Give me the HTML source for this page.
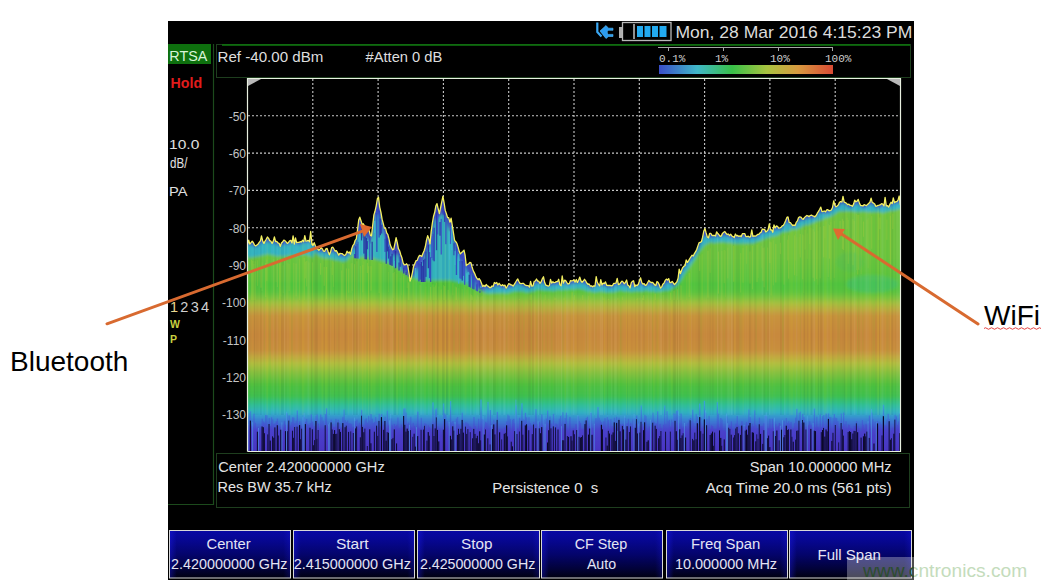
<!DOCTYPE html>
<html><head><meta charset="utf-8"><style>
html,body{margin:0;padding:0;background:#fff;width:1047px;height:587px;overflow:hidden;font-family:"Liberation Sans",sans-serif}
</style></head><body>

<svg width="1047" height="587" viewBox="0 0 1047 587" style="position:absolute;left:0;top:0">
<defs>
 <linearGradient id="ng" x1="0" y1="282" x2="0" y2="451" gradientUnits="userSpaceOnUse"><stop offset="0.0000" stop-color="#50c440"/><stop offset="0.0533" stop-color="#58c440"/><stop offset="0.0888" stop-color="#78c440"/><stop offset="0.1243" stop-color="#a4c040"/><stop offset="0.1598" stop-color="#bcac40"/><stop offset="0.2012" stop-color="#c8923e"/><stop offset="0.3136" stop-color="#c8883c"/><stop offset="0.4024" stop-color="#c88e3e"/><stop offset="0.4438" stop-color="#c2a840"/><stop offset="0.4852" stop-color="#b0c040"/><stop offset="0.5444" stop-color="#80c040"/><stop offset="0.6095" stop-color="#50c040"/><stop offset="0.6746" stop-color="#40c050"/><stop offset="0.7219" stop-color="#30c090"/><stop offset="0.7692" stop-color="#30b4c4"/><stop offset="0.8166" stop-color="#3a80d4"/><stop offset="0.8876" stop-color="#4444c8"/><stop offset="1.0000" stop-color="#4038b8"/></linearGradient>
 <linearGradient id="gg" x1="0" y1="195" x2="0" y2="300" gradientUnits="userSpaceOnUse"><stop offset="0" stop-color="#74c440"/><stop offset="0.6" stop-color="#6cc440"/><stop offset="0.85" stop-color="#58c440"/><stop offset="1" stop-color="#50c440"/></linearGradient>
 <linearGradient id="btnh" x1="0" y1="0" x2="1" y2="0"><stop offset="0" stop-color="#2020ff" stop-opacity="0.35"/><stop offset="0.06" stop-color="#2020ff" stop-opacity="0"/><stop offset="0.94" stop-color="#2020ff" stop-opacity="0"/><stop offset="1" stop-color="#2020ff" stop-opacity="0.2"/></linearGradient>
 <linearGradient id="bz" x1="0" y1="405" x2="0" y2="451" gradientUnits="userSpaceOnUse"><stop offset="0" stop-color="#38a0d8"/><stop offset="0.3" stop-color="#3c6cd4"/><stop offset="0.55" stop-color="#4a40cc"/><stop offset="1" stop-color="#4a34c4"/></linearGradient>
 <linearGradient id="cbar" x1="0" x2="1" y1="0" y2="0">
  <stop offset="0" stop-color="#3a4ec8"/><stop offset="0.22" stop-color="#40b8c8"/><stop offset="0.42" stop-color="#38c048"/>
  <stop offset="0.62" stop-color="#a8c440"/><stop offset="0.8" stop-color="#d89a40"/><stop offset="1" stop-color="#d84a34"/>
 </linearGradient>
 <linearGradient id="btn" x1="0" y1="0" x2="0" y2="1">
  <stop offset="0" stop-color="#0808a4"/><stop offset="0.2" stop-color="#070792"/><stop offset="0.5" stop-color="#04046c"/><stop offset="0.8" stop-color="#02023a"/><stop offset="1" stop-color="#000010"/>
 </linearGradient>
 <clipPath id="gclip"><polygon points="240,256.8 247.5,256.8 248.7,257.2 249.8,257.4 251.0,257.5 252.2,257.4 253.3,257.2 254.5,256.6 255.7,256.4 256.9,256.6 258.0,256.4 259.2,256.1 260.4,255.8 261.5,255.5 262.7,255.1 263.9,254.8 265.1,254.7 266.2,254.4 267.4,254.0 268.6,254.1 269.7,254.5 270.9,254.7 272.1,254.7 273.2,255.1 274.4,255.4 275.6,255.7 276.8,255.9 277.9,255.9 279.1,255.9 280.3,255.9 281.4,256.0 282.6,256.3 283.8,256.2 284.9,256.3 286.1,255.8 287.3,255.8 288.5,255.2 289.6,255.2 290.8,255.2 292.0,255.4 293.1,255.5 294.3,255.5 295.5,255.2 296.6,255.2 297.8,254.8 299.0,254.8 300.2,254.7 301.3,255.0 302.5,254.8 303.7,254.3 304.8,254.4 306.0,254.7 307.2,254.7 308.3,255.0 309.5,255.5 310.7,256.2 311.9,256.8 313.0,257.9 314.2,252.4 315.4,253.0 316.5,253.8 317.7,254.6 318.9,255.9 320.0,256.2 321.2,256.7 322.4,257.6 323.6,258.1 324.7,258.1 325.9,257.9 327.1,257.9 328.2,258.0 329.4,258.2 330.6,258.5 331.7,258.8 332.9,259.0 334.1,259.4 335.3,259.8 336.4,260.0 337.6,260.0 338.8,260.3 339.9,260.5 341.1,261.0 342.3,261.2 343.4,261.4 344.6,261.3 345.8,260.8 347.0,259.9 348.1,258.9 349.3,257.8 350.5,256.0 351.6,253.3 352.8,256.1 354.0,256.2 355.1,256.3 356.3,256.4 357.5,256.5 358.7,256.7 359.8,256.8 361.0,256.9 362.2,257.0 363.3,257.1 364.5,257.3 365.7,257.4 366.8,257.5 368.0,257.6 369.2,257.7 370.4,257.8 371.5,258.0 372.7,258.2 373.9,258.5 375.0,258.8 376.2,259.2 377.4,259.5 378.5,259.8 379.7,260.1 380.9,260.5 382.1,260.8 383.2,261.1 384.4,261.4 385.6,261.8 386.7,262.1 387.9,262.4 389.1,262.7 390.2,263.2 391.4,263.9 392.6,264.7 393.8,265.4 394.9,266.2 396.1,267.0 397.3,267.7 398.4,268.5 399.6,269.2 400.8,270.0 401.9,270.8 403.1,271.5 404.3,272.3 405.5,273.0 406.6,273.8 407.8,274.7 409.0,275.3 410.1,276.1 411.3,276.5 412.5,277.0 413.6,277.5 414.8,277.9 416.0,278.4 417.2,278.9 418.3,279.3 419.5,279.8 420.7,280.0 421.8,280.0 423.0,280.0 424.2,280.0 425.3,280.0 426.5,280.0 427.7,280.0 428.9,280.0 430.0,280.0 431.2,280.0 432.4,280.0 433.5,280.0 434.7,280.0 435.9,280.0 437.0,280.0 438.2,280.0 439.4,280.0 440.6,280.0 441.7,280.0 442.9,280.0 444.1,280.0 445.2,280.0 446.4,280.0 447.6,280.0 448.7,280.0 449.9,280.0 451.1,280.2 452.3,280.5 453.4,280.7 454.6,280.9 455.8,281.2 456.9,281.4 458.1,281.6 459.3,281.9 460.4,282.1 461.6,282.3 462.8,282.6 464.0,282.8 465.1,283.1 466.3,283.7 467.5,284.3 468.6,284.9 469.8,285.6 471.0,286.2 472.1,286.8 473.3,287.4 474.5,288.1 475.7,288.7 476.8,289.3 478.0,289.9 479.2,290.6 480.3,288.7 481.5,289.9 482.7,291.0 483.8,291.9 485.0,292.5 486.2,293.0 487.4,293.3 488.5,293.5 489.7,293.5 490.9,293.3 492.0,293.2 493.2,293.0 494.4,293.1 495.5,293.0 496.7,293.0 497.9,292.8 499.1,292.9 500.2,292.9 501.4,292.7 502.6,292.8 503.7,293.0 504.9,293.1 506.1,293.2 507.2,293.3 508.4,293.1 509.6,292.7 510.8,292.3 511.9,292.0 513.1,291.8 514.3,291.5 515.4,291.2 516.6,291.2 517.8,291.2 518.9,291.3 520.1,291.4 521.3,291.3 522.5,291.5 523.6,291.4 524.8,291.9 526.0,292.4 527.1,292.4 528.3,292.2 529.5,291.9 530.6,291.7 531.8,291.5 533.0,291.4 534.2,291.1 535.3,290.6 536.5,289.9 537.7,289.6 538.8,289.8 540.0,289.8 541.2,289.8 542.3,290.2 543.5,290.0 544.7,290.3 545.9,290.4 547.0,290.5 548.2,290.4 549.4,290.4 550.5,290.6 551.7,290.8 552.9,291.0 554.0,291.0 555.2,290.3 556.4,290.1 557.6,289.7 558.7,289.7 559.9,289.7 561.1,289.9 562.2,290.0 563.4,289.8 564.6,289.8 565.7,289.7 566.9,289.7 568.1,289.5 569.3,289.1 570.4,289.6 571.6,289.3 572.8,289.1 573.9,289.1 575.1,289.1 576.3,288.9 577.4,288.5 578.6,288.5 579.8,288.7 581.0,289.0 582.1,289.3 583.3,289.6 584.5,290.1 585.6,290.4 586.8,290.8 588.0,291.5 589.1,291.2 590.3,291.2 591.5,291.5 592.7,292.0 593.8,291.9 595.0,292.0 596.2,291.9 597.3,291.9 598.5,291.6 599.7,291.5 600.8,291.4 602.0,291.4 603.2,291.4 604.4,292.1 605.5,292.3 606.7,292.2 607.9,292.1 609.0,292.3 610.2,291.8 611.4,291.9 612.5,292.0 613.7,292.0 614.9,291.7 616.0,291.4 617.2,291.3 618.4,291.1 619.6,290.6 620.7,290.6 621.9,290.8 623.1,291.1 624.2,291.1 625.4,291.3 626.6,291.1 627.7,291.2 628.9,291.4 630.1,291.8 631.3,291.9 632.4,291.7 633.6,291.4 634.8,291.6 635.9,291.5 637.1,291.4 638.3,291.2 639.4,291.3 640.6,291.4 641.8,291.4 643.0,291.1 644.1,290.9 645.3,290.6 646.5,290.5 647.6,290.8 648.8,291.4 650.0,291.3 651.1,291.2 652.3,291.3 653.5,291.5 654.7,291.7 655.8,291.8 657.0,292.0 658.2,291.8 659.3,291.6 660.5,291.4 661.7,291.0 662.8,290.9 664.0,290.6 665.2,290.6 666.4,290.7 667.5,290.7 668.7,290.3 669.9,289.9 671.0,289.4 672.2,288.3 673.4,287.8 674.5,287.1 675.7,286.2 676.9,285.2 678.1,283.9 679.2,282.2 680.4,280.7 681.6,279.0 682.7,277.0 683.9,275.0 685.1,272.9 686.2,271.2 687.4,270.0 688.6,268.3 689.8,266.7 690.9,265.1 692.1,263.2 693.3,261.5 694.4,260.0 695.6,258.1 696.8,255.8 697.9,253.5 699.1,251.7 700.3,250.3 701.5,248.9 702.6,247.3 703.8,245.9 705.0,244.9 706.1,244.1 707.3,243.5 708.5,243.0 709.6,242.3 710.8,242.0 712.0,242.3 713.2,242.9 714.3,243.1 715.5,242.8 716.7,242.4 717.8,242.2 719.0,242.2 720.2,242.2 721.3,242.0 722.5,242.1 723.7,241.9 724.9,242.2 726.0,242.5 727.2,242.7 728.4,242.5 729.5,242.5 730.7,242.7 731.9,243.0 733.0,243.3 734.2,243.6 735.4,243.5 736.6,243.5 737.7,243.4 738.9,243.5 740.1,243.6 741.2,243.5 742.4,243.5 743.6,243.7 744.7,243.3 745.9,243.3 747.1,243.3 748.3,243.3 749.4,243.2 750.6,243.3 751.8,243.3 752.9,243.3 754.1,242.9 755.3,242.4 756.4,241.8 757.6,241.2 758.8,240.9 760.0,241.0 761.1,240.5 762.3,239.5 763.5,239.0 764.6,238.6 765.8,238.4 767.0,237.7 768.1,237.4 769.3,236.9 770.5,236.7 771.7,236.6 772.8,236.5 774.0,236.1 775.2,235.7 776.3,235.4 777.5,235.3 778.7,234.6 779.8,233.6 781.0,232.5 782.2,232.3 783.4,231.8 784.5,231.7 785.7,231.6 786.9,231.4 788.0,231.2 789.2,230.8 790.4,230.4 791.5,229.8 792.7,229.4 793.9,229.1 795.1,229.2 796.2,229.4 797.4,229.0 798.6,228.5 799.7,227.9 800.9,227.1 802.1,226.5 803.2,225.7 804.4,225.2 805.6,224.8 806.8,224.7 807.9,224.7 809.1,224.5 810.3,224.1 811.4,223.5 812.6,222.9 813.8,222.2 814.9,221.9 816.1,221.5 817.3,221.1 818.5,220.8 819.6,220.4 820.8,219.9 822.0,219.5 823.1,219.0 824.3,218.6 825.5,218.2 826.6,217.4 827.8,217.0 829.0,217.0 830.2,216.6 831.3,216.1 832.5,215.4 833.7,214.6 834.8,214.0 836.0,213.0 837.2,212.3 838.3,211.7 839.5,211.2 840.7,211.0 841.9,211.2 843.0,211.3 844.2,211.1 845.4,211.2 846.5,211.1 847.7,210.9 848.9,211.0 850.0,210.9 851.2,211.1 852.4,211.2 853.6,211.4 854.7,211.6 855.9,211.7 857.1,211.7 858.2,211.7 859.4,211.7 860.6,211.6 861.7,211.5 862.9,211.6 864.1,211.4 865.3,211.5 866.4,211.8 867.6,211.8 868.8,211.9 869.9,211.9 871.1,211.9 872.3,211.9 873.4,211.9 874.6,211.7 875.8,211.7 877.0,211.9 878.1,211.5 879.3,212.1 880.5,212.3 881.6,212.7 882.8,212.7 884.0,212.4 885.1,212.2 886.3,211.7 887.5,211.5 888.7,211.2 889.8,211.1 891.0,210.8 892.2,210.0 893.3,210.6 894.5,210.4 895.7,210.1 896.8,209.6 898.0,209.2 899.2,209.1 900.4,208.8 910,208.8 910,452 240,452"/></clipPath>
 <filter id="bl" x="-5%" y="-5%" width="110%" height="110%"><feGaussianBlur stdDeviation="1.6"/></filter>
 <clipPath id="envclip"><polygon points="247.5,244.2 248.7,240.1 249.8,244.1 251.0,242.6 252.2,241.3 253.3,242.5 254.5,245.0 255.7,245.9 256.9,245.0 258.0,244.2 259.2,242.3 260.4,240.8 261.5,236.0 262.7,241.0 263.9,243.4 265.1,241.0 266.2,239.3 267.4,237.0 268.6,238.4 269.7,240.7 270.9,241.2 272.1,243.5 273.2,241.4 274.4,237.0 275.6,241.5 276.8,241.4 277.9,242.9 279.1,243.3 280.3,246.3 281.4,243.1 282.6,242.0 283.8,240.1 284.9,240.6 286.1,241.9 287.3,243.4 288.5,242.4 289.6,240.8 290.8,240.4 292.0,242.9 293.1,235.9 294.3,244.0 295.5,238.0 296.6,242.6 297.8,242.4 299.0,242.4 300.2,241.7 301.3,242.0 302.5,240.3 303.7,241.5 304.8,235.7 306.0,241.2 307.2,240.9 308.3,240.3 309.5,241.7 310.7,231.5 311.9,244.3 313.0,245.5 314.2,242.7 315.4,245.7 316.5,248.2 317.7,249.1 318.9,250.2 320.0,249.1 321.2,247.8 322.4,249.0 323.6,251.2 324.7,251.3 325.9,248.9 327.1,248.4 328.2,251.8 329.4,254.8 330.6,251.7 331.7,247.6 332.9,247.2 334.1,249.3 335.3,251.1 336.4,250.6 337.6,252.9 338.8,255.1 339.9,253.4 341.1,253.7 342.3,253.7 343.4,254.7 344.6,255.5 345.8,254.6 347.0,251.2 348.1,253.0 349.3,252.0 350.5,254.2 351.6,249.3 352.8,245.7 354.0,244.2 355.1,240.5 356.3,238.8 357.5,230.0 358.7,220.1 359.8,217.2 361.0,220.7 362.2,224.6 363.3,223.8 364.5,225.8 365.7,227.1 366.8,229.9 368.0,228.6 369.2,230.7 370.4,235.4 371.5,235.9 372.7,225.2 373.9,214.9 375.0,211.3 376.2,205.8 377.4,198.7 378.5,197.2 379.7,207.1 380.9,212.1 382.1,219.2 383.2,223.3 384.4,228.2 385.6,228.5 386.7,232.9 387.9,234.6 389.1,239.4 390.2,244.8 391.4,247.4 392.6,249.8 393.8,249.1 394.9,243.6 396.1,237.6 397.3,242.7 398.4,248.6 399.6,250.8 400.8,254.7 401.9,257.7 403.1,262.9 404.3,264.8 405.5,264.7 406.6,263.8 407.8,265.5 409.0,273.1 410.1,281.0 411.3,277.6 412.5,272.3 413.6,266.1 414.8,263.6 416.0,260.7 417.2,260.4 418.3,257.4 419.5,255.4 420.7,255.7 421.8,256.5 423.0,253.2 424.2,250.5 425.3,246.8 426.5,240.2 427.7,235.6 428.9,238.9 430.0,243.8 431.2,231.4 432.4,222.8 433.5,216.5 434.7,212.3 435.9,205.7 437.0,203.6 438.2,208.8 439.4,213.6 440.6,207.6 441.7,202.2 442.9,196.3 444.1,202.8 445.2,210.2 446.4,213.6 447.6,217.6 448.7,217.6 449.9,222.2 451.1,218.2 452.3,225.6 453.4,232.7 454.6,240.4 455.8,241.7 456.9,243.4 458.1,247.1 459.3,251.6 460.4,253.9 461.6,252.6 462.8,251.5 464.0,250.1 465.1,255.2 466.3,265.6 467.5,264.4 468.6,264.0 469.8,262.4 471.0,262.9 472.1,267.3 473.3,270.9 474.5,273.1 475.7,276.1 476.8,278.2 478.0,279.7 479.2,278.6 480.3,280.3 481.5,283.2 482.7,286.6 483.8,285.3 485.0,286.6 486.2,284.5 487.4,285.9 488.5,286.4 489.7,287.5 490.9,287.5 492.0,286.0 493.2,286.4 494.4,282.5 495.5,283.4 496.7,282.5 497.9,285.0 499.1,283.3 500.2,284.7 501.4,285.7 502.6,284.7 503.7,285.9 504.9,285.1 506.1,288.1 507.2,286.5 508.4,284.2 509.6,283.8 510.8,284.9 511.9,285.0 513.1,286.0 514.3,284.4 515.4,282.5 516.6,280.5 517.8,278.9 518.9,281.5 520.1,283.3 521.3,283.7 522.5,283.3 523.6,283.4 524.8,284.8 526.0,285.5 527.1,285.7 528.3,285.7 529.5,287.1 530.6,281.4 531.8,286.1 533.0,285.8 534.2,281.4 535.3,281.0 536.5,279.0 537.7,281.1 538.8,281.2 540.0,283.3 541.2,281.7 542.3,278.8 543.5,276.8 544.7,282.6 545.9,285.2 547.0,285.5 548.2,286.2 549.4,285.5 550.5,279.4 551.7,283.1 552.9,281.8 554.0,282.7 555.2,282.3 556.4,281.7 557.6,281.5 558.7,279.3 559.9,284.8 561.1,285.7 562.2,276.0 563.4,283.1 564.6,280.2 565.7,280.7 566.9,282.6 568.1,284.0 569.3,283.6 570.4,280.6 571.6,280.8 572.8,280.7 573.9,279.9 575.1,282.1 576.3,279.5 577.4,282.4 578.6,280.3 579.8,277.1 581.0,281.0 582.1,282.2 583.3,281.1 584.5,279.3 585.6,280.7 586.8,283.0 588.0,284.3 589.1,284.0 590.3,286.0 591.5,285.8 592.7,286.8 593.8,285.8 595.0,286.0 596.2,276.6 597.3,282.3 598.5,284.4 599.7,285.8 600.8,279.7 602.0,284.9 603.2,283.2 604.4,283.6 605.5,281.9 606.7,285.3 607.9,285.5 609.0,285.3 610.2,285.5 611.4,285.8 612.5,285.5 613.7,283.4 614.9,283.4 616.0,283.0 617.2,278.4 618.4,284.5 619.6,284.1 620.7,282.6 621.9,281.1 623.1,282.0 624.2,283.7 625.4,282.6 626.6,280.0 627.7,284.9 628.9,285.8 630.1,287.9 631.3,282.7 632.4,281.4 633.6,280.8 634.8,286.5 635.9,285.0 637.1,285.6 638.3,284.3 639.4,281.0 640.6,277.8 641.8,282.7 643.0,284.2 644.1,283.6 645.3,285.4 646.5,284.8 647.6,282.8 648.8,280.5 650.0,281.9 651.1,282.5 652.3,282.3 653.5,283.3 654.7,284.9 655.8,285.5 657.0,281.5 658.2,282.6 659.3,284.7 660.5,288.1 661.7,286.9 662.8,284.3 664.0,283.1 665.2,280.4 666.4,279.1 667.5,280.1 668.7,278.6 669.9,282.6 671.0,282.5 672.2,281.4 673.4,283.1 674.5,284.6 675.7,283.1 676.9,281.8 678.1,278.1 679.2,269.1 680.4,273.5 681.6,270.3 682.7,267.6 683.9,266.3 685.1,265.5 686.2,260.0 687.4,262.4 688.6,260.6 689.8,258.5 690.9,256.9 692.1,255.2 693.3,256.0 694.4,253.6 695.6,251.7 696.8,249.2 697.9,245.9 699.1,242.6 700.3,242.4 701.5,241.5 702.6,237.2 703.8,231.0 705.0,228.6 706.1,232.9 707.3,236.9 708.5,237.8 709.6,233.4 710.8,233.4 712.0,235.5 713.2,235.5 714.3,235.3 715.5,236.0 716.7,231.8 717.8,233.5 719.0,234.8 720.2,236.3 721.3,235.9 722.5,233.4 723.7,232.2 724.9,231.5 726.0,233.3 727.2,234.5 728.4,234.0 729.5,235.6 730.7,234.2 731.9,236.0 733.0,236.6 734.2,237.6 735.4,234.0 736.6,235.8 737.7,235.5 738.9,236.5 740.1,235.8 741.2,236.6 742.4,233.7 743.6,233.6 744.7,233.6 745.9,236.5 747.1,236.6 748.3,236.1 749.4,237.2 750.6,236.6 751.8,230.0 752.9,236.4 754.1,235.9 755.3,236.1 756.4,235.6 757.6,234.5 758.8,234.3 760.0,232.8 761.1,232.3 762.3,229.0 763.5,229.4 764.6,229.4 765.8,231.9 767.0,231.0 768.1,229.8 769.3,224.0 770.5,229.8 771.7,230.0 772.8,232.2 774.0,224.9 775.2,228.0 776.3,226.0 777.5,226.3 778.7,228.1 779.8,227.9 781.0,227.4 782.2,225.9 783.4,225.3 784.5,223.2 785.7,220.5 786.9,217.4 788.0,216.9 789.2,222.3 790.4,222.6 791.5,224.1 792.7,225.5 793.9,225.2 795.1,225.5 796.2,222.4 797.4,220.9 798.6,217.5 799.7,216.9 800.9,217.1 802.1,218.7 803.2,219.4 804.4,217.6 805.6,216.4 806.8,215.5 807.9,215.9 809.1,216.6 810.3,215.5 811.4,215.1 812.6,215.8 813.8,216.1 814.9,216.9 816.1,215.5 817.3,213.2 818.5,211.4 819.6,209.5 820.8,207.1 822.0,211.6 823.1,211.4 824.3,211.0 825.5,211.8 826.6,210.0 827.8,209.7 829.0,210.8 830.2,210.5 831.3,210.0 832.5,207.5 833.7,201.0 834.8,205.1 836.0,206.8 837.2,206.0 838.3,204.9 839.5,202.3 840.7,201.6 841.9,202.0 843.0,196.3 844.2,202.2 845.4,202.6 846.5,203.3 847.7,204.7 848.9,204.2 850.0,205.4 851.2,205.4 852.4,206.3 853.6,204.1 854.7,200.2 855.9,201.8 857.1,201.1 858.2,199.4 859.4,202.9 860.6,205.5 861.7,205.6 862.9,206.0 864.1,204.6 865.3,205.2 866.4,205.6 867.6,204.4 868.8,203.3 869.9,202.2 871.1,198.1 872.3,202.7 873.4,202.9 874.6,203.9 875.8,206.3 877.0,205.8 878.1,205.3 879.3,205.2 880.5,204.6 881.6,203.7 882.8,204.2 884.0,205.8 885.1,197.4 886.3,205.8 887.5,205.7 888.7,207.0 889.8,204.4 891.0,202.3 892.2,203.6 893.3,197.9 894.5,202.7 895.7,201.7 896.8,201.7 898.0,200.1 899.2,196.0 900.4,205.1 900.5,451.5 247.5,451.5"/></clipPath>
</defs>
<rect x="168" y="21" width="746" height="559" fill="#000"/>
<!-- left column -->
<rect x="168" y="44" width="43" height="20" fill="#0e700e"/>
<path d="M213.5 44 V504.5 H168" fill="none" stroke="#1c4a1c" stroke-width="1.2"/>
<!-- ref box -->
<rect x="216.5" y="44.5" width="694" height="33" fill="none" stroke="#1e3e1e" stroke-width="1"/>
<line x1="222" y1="45" x2="910" y2="45" stroke="#0e7a0e" stroke-width="1.3"/>
<!-- info box -->
<rect x="216.5" y="453.5" width="693" height="54" fill="none" stroke="#1e3e1e" stroke-width="1"/>
<!-- grid -->
<g stroke="#c8c8c8" stroke-width="1.1" stroke-dasharray="2 2"><line x1="312.8" y1="79" x2="312.8" y2="451" /><line x1="248" y1="115.8" x2="900" y2="115.8" /><line x1="378.1" y1="79" x2="378.1" y2="451" /><line x1="248" y1="153.1" x2="900" y2="153.1" /><line x1="443.4" y1="79" x2="443.4" y2="451" /><line x1="248" y1="190.4" x2="900" y2="190.4" /><line x1="508.7" y1="79" x2="508.7" y2="451" /><line x1="248" y1="227.7" x2="900" y2="227.7" /><line x1="574.0" y1="79" x2="574.0" y2="451" /><line x1="248" y1="265.0" x2="900" y2="265.0" /><line x1="639.3" y1="79" x2="639.3" y2="451" /><line x1="248" y1="302.3" x2="900" y2="302.3" /><line x1="704.6" y1="79" x2="704.6" y2="451" /><line x1="248" y1="339.6" x2="900" y2="339.6" /><line x1="769.9" y1="79" x2="769.9" y2="451" /><line x1="248" y1="376.9" x2="900" y2="376.9" /><line x1="835.2" y1="79" x2="835.2" y2="451" /><line x1="248" y1="414.2" x2="900" y2="414.2" /></g>
<!-- spectrum -->
<g clip-path="url(#envclip)">
 <g filter="url(#bl)">
 <rect x="240" y="150" width="670" height="302" fill="url(#ng)"/>
 <rect x="240" y="150" width="670" height="150" fill="#3a48c4"/>
 <polygon points="240,245.3 247.5,245.3 248.7,245.2 249.8,245.0 251.0,244.6 252.2,245.6 253.3,246.0 254.5,246.5 255.7,247.0 256.9,247.0 258.0,246.1 259.2,244.1 260.4,243.3 261.5,243.2 262.7,242.9 263.9,242.6 265.1,242.8 266.2,242.3 267.4,241.8 268.6,241.8 269.7,242.7 270.9,243.5 272.1,243.3 273.2,243.4 274.4,243.4 275.6,243.3 276.8,243.7 277.9,245.6 279.1,245.9 280.3,246.0 281.4,245.5 282.6,244.9 283.8,244.1 284.9,244.1 286.1,244.2 287.3,244.3 288.5,244.3 289.6,244.5 290.8,243.0 292.0,243.3 293.1,242.8 294.3,243.2 295.5,243.1 296.6,244.4 297.8,243.9 299.0,244.7 300.2,244.3 301.3,244.1 302.5,242.7 303.7,242.6 304.8,242.4 306.0,242.4 307.2,242.4 308.3,241.6 309.5,242.2 310.7,243.1 311.9,243.6 313.0,244.4 314.2,247.8 315.4,248.7 316.5,249.7 317.7,251.0 318.9,251.4 320.0,251.5 321.2,252.0 322.4,252.2 323.6,252.1 324.7,252.2 325.9,252.8 327.1,253.5 328.2,253.6 329.4,253.3 330.6,253.1 331.7,252.6 332.9,251.9 334.1,251.7 335.3,252.7 336.4,254.3 337.6,255.1 338.8,255.6 339.9,256.3 341.1,256.6 342.3,256.7 343.4,256.9 344.6,256.4 345.8,256.3 347.0,255.8 348.1,255.5 349.3,254.4 350.5,253.3 351.6,251.6 352.8,249.3 354.0,246.2 355.1,249.8 356.3,244.7 357.5,239.3 358.7,235.3 359.8,232.5 361.0,231.3 362.2,232.4 363.3,234.4 364.5,236.2 365.7,237.0 366.8,238.4 368.0,240.3 369.2,242.1 370.4,241.1 371.5,238.4 372.7,234.5 373.9,228.6 375.0,221.2 376.2,215.6 377.4,214.0 378.5,214.2 379.7,216.9 380.9,221.8 382.1,228.0 383.2,232.3 384.4,236.4 385.6,239.5 386.7,242.7 387.9,246.0 389.1,249.8 390.2,253.2 391.4,256.1 392.6,256.9 393.8,255.5 394.9,254.6 396.1,254.3 397.3,254.7 398.4,256.9 399.6,260.9 400.8,264.9 401.9,268.2 403.1,271.0 404.3,272.8 405.5,274.3 406.6,276.4 407.8,279.6 409.0,282.2 410.1,283.9 411.3,284.0 412.5,282.1 413.6,278.1 414.8,274.6 416.0,271.6 417.2,269.5 418.3,267.9 419.5,267.1 420.7,265.7 421.8,264.3 423.0,262.5 424.2,259.4 425.3,255.3 426.5,252.4 427.7,251.1 428.9,248.0 430.0,244.5 431.2,240.7 432.4,235.4 433.5,227.8 434.7,222.2 435.9,219.4 437.0,218.8 438.2,217.9 439.4,217.2 440.6,215.7 441.7,214.5 442.9,213.8 444.1,215.0 445.2,218.1 446.4,222.4 447.6,226.3 448.7,227.9 449.9,230.3 451.1,233.3 452.3,237.8 453.4,241.7 454.6,246.7 455.8,251.0 456.9,254.8 458.1,257.5 459.3,259.7 460.4,261.3 461.6,261.9 462.8,262.6 464.0,265.0 465.1,267.4 466.3,269.9 467.5,272.3 468.6,273.9 469.8,274.2 471.0,275.5 472.1,277.3 473.3,280.1 474.5,283.1 475.7,285.6 476.8,287.1 478.0,288.6 479.2,290.0 480.3,291.7 481.5,292.8 482.7,294.4 483.8,295.2 485.0,288.3 486.2,288.2 487.4,288.7 488.5,288.9 489.7,289.2 490.9,289.2 492.0,288.5 493.2,287.7 494.4,286.7 495.5,286.5 496.7,285.9 497.9,286.3 499.1,286.7 500.2,287.2 501.4,287.4 502.6,287.7 503.7,288.4 504.9,288.6 506.1,288.5 507.2,288.0 508.4,288.0 509.6,287.4 510.8,287.3 511.9,287.3 513.1,287.1 514.3,286.2 515.4,285.0 516.6,284.1 517.8,283.9 518.9,284.1 520.1,284.6 521.3,285.5 522.5,286.2 523.6,286.6 524.8,287.0 526.0,287.5 527.1,288.3 528.3,287.6 529.5,287.7 530.6,287.7 531.8,286.9 533.0,285.7 534.2,285.2 535.3,284.2 536.5,283.2 537.7,283.6 538.8,283.8 540.0,283.7 541.2,282.9 542.3,283.1 543.5,283.5 544.7,284.3 545.9,285.8 547.0,287.5 548.2,286.9 549.4,286.4 550.5,285.7 551.7,285.0 552.9,284.4 554.0,284.8 555.2,284.5 556.4,284.0 557.6,284.4 558.7,285.1 559.9,283.9 561.1,284.3 562.2,284.4 563.4,283.6 564.6,283.0 565.7,284.6 566.9,284.7 568.1,284.8 569.3,284.8 570.4,284.4 571.6,283.6 572.8,283.3 573.9,283.1 575.1,283.4 576.3,283.4 577.4,282.8 578.6,282.6 579.8,283.1 581.0,282.8 582.1,282.6 583.3,283.3 584.5,283.7 585.6,284.2 586.8,284.8 588.0,286.1 589.1,287.1 590.3,287.9 591.5,288.2 592.7,288.6 593.8,286.7 595.0,286.0 596.2,285.5 597.3,285.5 598.5,284.3 599.7,285.9 600.8,286.1 602.0,285.9 603.2,285.1 604.4,286.3 605.5,286.4 606.7,286.8 607.9,287.2 609.0,288.0 610.2,288.0 611.4,287.6 612.5,287.2 613.7,286.7 614.9,285.2 616.0,285.1 617.2,285.2 618.4,285.0 619.6,284.7 620.7,285.4 621.9,285.2 623.1,284.9 624.2,284.4 625.4,285.1 626.6,285.9 627.7,286.7 628.9,286.8 630.1,287.0 631.3,286.2 632.4,286.3 633.6,285.8 634.8,286.4 635.9,286.9 637.1,287.0 638.3,285.3 639.4,284.8 640.6,284.5 641.8,284.4 643.0,285.3 644.1,286.7 645.3,286.7 646.5,285.9 647.6,285.6 648.8,285.0 650.0,284.5 651.1,284.6 652.3,285.5 653.5,286.2 654.7,286.0 655.8,286.1 657.0,286.3 658.2,287.0 659.3,287.3 660.5,287.8 661.7,287.9 662.8,287.0 664.0,285.2 665.2,283.9 666.4,282.7 667.5,282.6 668.7,283.1 669.9,283.6 671.0,284.1 672.2,285.4 673.4,285.5 674.5,285.3 675.7,284.6 676.9,281.8 678.1,279.6 679.2,277.1 680.4,274.2 681.6,271.8 682.7,271.1 683.9,268.4 685.1,266.9 686.2,265.4 687.4,263.9 688.6,262.2 689.8,261.2 690.9,259.9 692.1,258.5 693.3,257.2 694.4,255.6 695.6,253.8 696.8,251.1 697.9,248.9 699.1,246.8 700.3,244.4 701.5,241.4 702.6,238.6 703.8,236.7 705.0,235.8 706.1,235.9 707.3,236.4 708.5,237.4 709.6,237.9 710.8,237.6 712.0,237.1 713.2,237.7 714.3,237.3 715.5,236.9 716.7,236.8 717.8,237.0 719.0,237.0 720.2,237.3 721.3,237.0 722.5,236.4 723.7,235.8 724.9,235.5 726.0,235.6 727.2,236.3 728.4,236.8 729.5,237.4 730.7,237.8 731.9,238.5 733.0,238.2 734.2,238.5 735.4,238.4 736.6,238.4 737.7,238.0 738.9,238.6 740.1,238.1 741.2,237.8 742.4,237.2 743.6,237.3 744.7,237.3 745.9,237.8 747.1,238.5 748.3,239.1 749.4,237.8 750.6,237.7 751.8,237.7 752.9,237.5 754.1,237.3 755.3,238.2 756.4,237.8 757.6,237.1 758.8,236.4 760.0,235.1 761.1,234.1 762.3,233.1 763.5,232.9 764.6,232.6 765.8,232.8 767.0,231.7 768.1,231.8 769.3,231.4 770.5,231.6 771.7,230.7 772.8,231.5 774.0,230.7 775.2,230.0 776.3,229.2 777.5,229.8 778.7,229.7 779.8,229.7 781.0,229.4 782.2,228.5 783.4,227.0 784.5,225.0 785.7,223.2 786.9,222.6 788.0,222.4 789.2,223.2 790.4,224.8 791.5,226.4 792.7,227.1 793.9,227.0 795.1,226.4 796.2,224.8 797.4,223.1 798.6,221.5 799.7,220.7 800.9,220.4 802.1,220.4 803.2,220.3 804.4,220.0 805.6,219.5 806.8,218.9 807.9,218.5 809.1,218.2 810.3,218.3 811.4,218.3 812.6,218.4 813.8,218.4 814.9,218.0 816.1,217.1 817.3,215.8 818.5,213.8 819.6,213.0 820.8,212.7 822.0,212.6 823.1,213.1 824.3,213.6 825.5,213.3 826.6,213.2 827.8,213.1 829.0,212.7 830.2,212.2 831.3,210.5 832.5,209.3 833.7,208.6 834.8,207.8 836.0,207.3 837.2,207.5 838.3,206.8 839.5,205.9 840.7,203.9 841.9,203.4 843.0,203.4 844.2,203.8 845.4,204.3 846.5,205.9 847.7,206.5 848.9,207.1 850.0,207.7 851.2,207.6 852.4,206.8 853.6,206.1 854.7,205.2 855.9,203.8 857.1,203.6 858.2,204.6 859.4,205.4 860.6,206.4 861.7,207.4 862.9,207.9 864.1,207.9 865.3,207.6 866.4,207.1 867.6,206.6 868.8,205.2 869.9,204.6 871.1,204.3 872.3,204.4 873.4,205.3 874.6,206.8 875.8,207.3 877.0,207.8 878.1,207.9 879.3,207.4 880.5,207.1 881.6,207.2 882.8,205.6 884.0,205.9 885.1,206.3 886.3,206.8 887.5,206.6 888.7,207.5 889.8,207.1 891.0,205.5 892.2,204.7 893.3,204.1 894.5,204.0 895.7,203.3 896.8,203.0 898.0,203.4 899.2,203.2 900.4,202.9 910,202.9 910,300 240,300" fill="#34b4c4"/>
 <polygon points="240,256.8 247.5,256.8 248.7,257.2 249.8,257.4 251.0,257.5 252.2,257.4 253.3,257.2 254.5,256.6 255.7,256.4 256.9,256.6 258.0,256.4 259.2,256.1 260.4,255.8 261.5,255.5 262.7,255.1 263.9,254.8 265.1,254.7 266.2,254.4 267.4,254.0 268.6,254.1 269.7,254.5 270.9,254.7 272.1,254.7 273.2,255.1 274.4,255.4 275.6,255.7 276.8,255.9 277.9,255.9 279.1,255.9 280.3,255.9 281.4,256.0 282.6,256.3 283.8,256.2 284.9,256.3 286.1,255.8 287.3,255.8 288.5,255.2 289.6,255.2 290.8,255.2 292.0,255.4 293.1,255.5 294.3,255.5 295.5,255.2 296.6,255.2 297.8,254.8 299.0,254.8 300.2,254.7 301.3,255.0 302.5,254.8 303.7,254.3 304.8,254.4 306.0,254.7 307.2,254.7 308.3,255.0 309.5,255.5 310.7,256.2 311.9,256.8 313.0,257.9 314.2,252.4 315.4,253.0 316.5,253.8 317.7,254.6 318.9,255.9 320.0,256.2 321.2,256.7 322.4,257.6 323.6,258.1 324.7,258.1 325.9,257.9 327.1,257.9 328.2,258.0 329.4,258.2 330.6,258.5 331.7,258.8 332.9,259.0 334.1,259.4 335.3,259.8 336.4,260.0 337.6,260.0 338.8,260.3 339.9,260.5 341.1,261.0 342.3,261.2 343.4,261.4 344.6,261.3 345.8,260.8 347.0,259.9 348.1,258.9 349.3,257.8 350.5,256.0 351.6,253.3 352.8,256.1 354.0,256.2 355.1,256.3 356.3,256.4 357.5,256.5 358.7,256.7 359.8,256.8 361.0,256.9 362.2,257.0 363.3,257.1 364.5,257.3 365.7,257.4 366.8,257.5 368.0,257.6 369.2,257.7 370.4,257.8 371.5,258.0 372.7,258.2 373.9,258.5 375.0,258.8 376.2,259.2 377.4,259.5 378.5,259.8 379.7,260.1 380.9,260.5 382.1,260.8 383.2,261.1 384.4,261.4 385.6,261.8 386.7,262.1 387.9,262.4 389.1,262.7 390.2,263.2 391.4,263.9 392.6,264.7 393.8,265.4 394.9,266.2 396.1,267.0 397.3,267.7 398.4,268.5 399.6,269.2 400.8,270.0 401.9,270.8 403.1,271.5 404.3,272.3 405.5,273.0 406.6,273.8 407.8,274.7 409.0,275.3 410.1,276.1 411.3,276.5 412.5,277.0 413.6,277.5 414.8,277.9 416.0,278.4 417.2,278.9 418.3,279.3 419.5,279.8 420.7,280.0 421.8,280.0 423.0,280.0 424.2,280.0 425.3,280.0 426.5,280.0 427.7,280.0 428.9,280.0 430.0,280.0 431.2,280.0 432.4,280.0 433.5,280.0 434.7,280.0 435.9,280.0 437.0,280.0 438.2,280.0 439.4,280.0 440.6,280.0 441.7,280.0 442.9,280.0 444.1,280.0 445.2,280.0 446.4,280.0 447.6,280.0 448.7,280.0 449.9,280.0 451.1,280.2 452.3,280.5 453.4,280.7 454.6,280.9 455.8,281.2 456.9,281.4 458.1,281.6 459.3,281.9 460.4,282.1 461.6,282.3 462.8,282.6 464.0,282.8 465.1,283.1 466.3,283.7 467.5,284.3 468.6,284.9 469.8,285.6 471.0,286.2 472.1,286.8 473.3,287.4 474.5,288.1 475.7,288.7 476.8,289.3 478.0,289.9 479.2,290.6 480.3,288.7 481.5,289.9 482.7,291.0 483.8,291.9 485.0,292.5 486.2,293.0 487.4,293.3 488.5,293.5 489.7,293.5 490.9,293.3 492.0,293.2 493.2,293.0 494.4,293.1 495.5,293.0 496.7,293.0 497.9,292.8 499.1,292.9 500.2,292.9 501.4,292.7 502.6,292.8 503.7,293.0 504.9,293.1 506.1,293.2 507.2,293.3 508.4,293.1 509.6,292.7 510.8,292.3 511.9,292.0 513.1,291.8 514.3,291.5 515.4,291.2 516.6,291.2 517.8,291.2 518.9,291.3 520.1,291.4 521.3,291.3 522.5,291.5 523.6,291.4 524.8,291.9 526.0,292.4 527.1,292.4 528.3,292.2 529.5,291.9 530.6,291.7 531.8,291.5 533.0,291.4 534.2,291.1 535.3,290.6 536.5,289.9 537.7,289.6 538.8,289.8 540.0,289.8 541.2,289.8 542.3,290.2 543.5,290.0 544.7,290.3 545.9,290.4 547.0,290.5 548.2,290.4 549.4,290.4 550.5,290.6 551.7,290.8 552.9,291.0 554.0,291.0 555.2,290.3 556.4,290.1 557.6,289.7 558.7,289.7 559.9,289.7 561.1,289.9 562.2,290.0 563.4,289.8 564.6,289.8 565.7,289.7 566.9,289.7 568.1,289.5 569.3,289.1 570.4,289.6 571.6,289.3 572.8,289.1 573.9,289.1 575.1,289.1 576.3,288.9 577.4,288.5 578.6,288.5 579.8,288.7 581.0,289.0 582.1,289.3 583.3,289.6 584.5,290.1 585.6,290.4 586.8,290.8 588.0,291.5 589.1,291.2 590.3,291.2 591.5,291.5 592.7,292.0 593.8,291.9 595.0,292.0 596.2,291.9 597.3,291.9 598.5,291.6 599.7,291.5 600.8,291.4 602.0,291.4 603.2,291.4 604.4,292.1 605.5,292.3 606.7,292.2 607.9,292.1 609.0,292.3 610.2,291.8 611.4,291.9 612.5,292.0 613.7,292.0 614.9,291.7 616.0,291.4 617.2,291.3 618.4,291.1 619.6,290.6 620.7,290.6 621.9,290.8 623.1,291.1 624.2,291.1 625.4,291.3 626.6,291.1 627.7,291.2 628.9,291.4 630.1,291.8 631.3,291.9 632.4,291.7 633.6,291.4 634.8,291.6 635.9,291.5 637.1,291.4 638.3,291.2 639.4,291.3 640.6,291.4 641.8,291.4 643.0,291.1 644.1,290.9 645.3,290.6 646.5,290.5 647.6,290.8 648.8,291.4 650.0,291.3 651.1,291.2 652.3,291.3 653.5,291.5 654.7,291.7 655.8,291.8 657.0,292.0 658.2,291.8 659.3,291.6 660.5,291.4 661.7,291.0 662.8,290.9 664.0,290.6 665.2,290.6 666.4,290.7 667.5,290.7 668.7,290.3 669.9,289.9 671.0,289.4 672.2,288.3 673.4,287.8 674.5,287.1 675.7,286.2 676.9,285.2 678.1,283.9 679.2,282.2 680.4,280.7 681.6,279.0 682.7,277.0 683.9,275.0 685.1,272.9 686.2,271.2 687.4,270.0 688.6,268.3 689.8,266.7 690.9,265.1 692.1,263.2 693.3,261.5 694.4,260.0 695.6,258.1 696.8,255.8 697.9,253.5 699.1,251.7 700.3,250.3 701.5,248.9 702.6,247.3 703.8,245.9 705.0,244.9 706.1,244.1 707.3,243.5 708.5,243.0 709.6,242.3 710.8,242.0 712.0,242.3 713.2,242.9 714.3,243.1 715.5,242.8 716.7,242.4 717.8,242.2 719.0,242.2 720.2,242.2 721.3,242.0 722.5,242.1 723.7,241.9 724.9,242.2 726.0,242.5 727.2,242.7 728.4,242.5 729.5,242.5 730.7,242.7 731.9,243.0 733.0,243.3 734.2,243.6 735.4,243.5 736.6,243.5 737.7,243.4 738.9,243.5 740.1,243.6 741.2,243.5 742.4,243.5 743.6,243.7 744.7,243.3 745.9,243.3 747.1,243.3 748.3,243.3 749.4,243.2 750.6,243.3 751.8,243.3 752.9,243.3 754.1,242.9 755.3,242.4 756.4,241.8 757.6,241.2 758.8,240.9 760.0,241.0 761.1,240.5 762.3,239.5 763.5,239.0 764.6,238.6 765.8,238.4 767.0,237.7 768.1,237.4 769.3,236.9 770.5,236.7 771.7,236.6 772.8,236.5 774.0,236.1 775.2,235.7 776.3,235.4 777.5,235.3 778.7,234.6 779.8,233.6 781.0,232.5 782.2,232.3 783.4,231.8 784.5,231.7 785.7,231.6 786.9,231.4 788.0,231.2 789.2,230.8 790.4,230.4 791.5,229.8 792.7,229.4 793.9,229.1 795.1,229.2 796.2,229.4 797.4,229.0 798.6,228.5 799.7,227.9 800.9,227.1 802.1,226.5 803.2,225.7 804.4,225.2 805.6,224.8 806.8,224.7 807.9,224.7 809.1,224.5 810.3,224.1 811.4,223.5 812.6,222.9 813.8,222.2 814.9,221.9 816.1,221.5 817.3,221.1 818.5,220.8 819.6,220.4 820.8,219.9 822.0,219.5 823.1,219.0 824.3,218.6 825.5,218.2 826.6,217.4 827.8,217.0 829.0,217.0 830.2,216.6 831.3,216.1 832.5,215.4 833.7,214.6 834.8,214.0 836.0,213.0 837.2,212.3 838.3,211.7 839.5,211.2 840.7,211.0 841.9,211.2 843.0,211.3 844.2,211.1 845.4,211.2 846.5,211.1 847.7,210.9 848.9,211.0 850.0,210.9 851.2,211.1 852.4,211.2 853.6,211.4 854.7,211.6 855.9,211.7 857.1,211.7 858.2,211.7 859.4,211.7 860.6,211.6 861.7,211.5 862.9,211.6 864.1,211.4 865.3,211.5 866.4,211.8 867.6,211.8 868.8,211.9 869.9,211.9 871.1,211.9 872.3,211.9 873.4,211.9 874.6,211.7 875.8,211.7 877.0,211.9 878.1,211.5 879.3,212.1 880.5,212.3 881.6,212.7 882.8,212.7 884.0,212.4 885.1,212.2 886.3,211.7 887.5,211.5 888.7,211.2 889.8,211.1 891.0,210.8 892.2,210.0 893.3,210.6 894.5,210.4 895.7,210.1 896.8,209.6 898.0,209.2 899.2,209.1 900.4,208.8 910,208.8 910,300 240,300" fill="url(#gg)"/>
 <rect x="240" y="282" width="670" height="170" fill="url(#ng)" clip-path="url(#gclip)"/>
 <ellipse cx="872" cy="284" rx="26" ry="9" fill="#38c0a0" opacity="0.3"/>
 <ellipse cx="850" cy="262" rx="14" ry="10" fill="#40c070" opacity="0.2"/>
 </g>
 <rect x="247.5" y="200" width="1.6" height="215" fill="#0c0" opacity="0.04"/><rect x="249.1" y="200" width="1.5" height="215" fill="#000" opacity="0.03"/><rect x="250.6" y="200" width="1.0" height="215" fill="#0c0" opacity="0.03"/><rect x="251.5" y="200" width="0.9" height="215" fill="#ff0" opacity="0.02"/><rect x="252.4" y="200" width="1.4" height="215" fill="#ff0" opacity="0.01"/><rect x="253.8" y="200" width="1.2" height="215" fill="#000" opacity="0.07"/><rect x="255.1" y="200" width="1.3" height="215" fill="#000" opacity="0.02"/><rect x="256.4" y="200" width="1.3" height="215" fill="#000" opacity="0.03"/><rect x="257.7" y="200" width="1.2" height="215" fill="#000" opacity="0.02"/><rect x="258.9" y="200" width="1.0" height="215" fill="#ff0" opacity="0.00"/><rect x="259.9" y="200" width="1.8" height="215" fill="#000" opacity="0.05"/><rect x="261.8" y="200" width="1.9" height="215" fill="#fff" opacity="0.02"/><rect x="263.6" y="200" width="1.3" height="215" fill="#0c0" opacity="0.06"/><rect x="265.0" y="200" width="1.3" height="215" fill="#fff" opacity="0.01"/><rect x="266.3" y="200" width="1.8" height="215" fill="#ff0" opacity="0.06"/><rect x="268.1" y="200" width="0.9" height="215" fill="#0c0" opacity="0.04"/><rect x="269.0" y="200" width="1.9" height="215" fill="#0c0" opacity="0.07"/><rect x="270.9" y="200" width="1.7" height="215" fill="#0c0" opacity="0.00"/><rect x="272.6" y="200" width="1.6" height="215" fill="#fff" opacity="0.03"/><rect x="274.2" y="200" width="0.9" height="215" fill="#0c0" opacity="0.04"/><rect x="275.1" y="200" width="1.3" height="215" fill="#000" opacity="0.04"/><rect x="276.4" y="200" width="1.5" height="215" fill="#fff" opacity="0.03"/><rect x="277.9" y="200" width="1.5" height="215" fill="#0c0" opacity="0.02"/><rect x="279.4" y="200" width="1.5" height="215" fill="#ff0" opacity="0.06"/><rect x="280.9" y="200" width="2.0" height="215" fill="#000" opacity="0.05"/><rect x="282.9" y="200" width="1.2" height="215" fill="#000" opacity="0.04"/><rect x="284.1" y="200" width="1.1" height="215" fill="#fff" opacity="0.07"/><rect x="285.2" y="200" width="1.6" height="215" fill="#000" opacity="0.02"/><rect x="286.7" y="200" width="1.3" height="215" fill="#fff" opacity="0.02"/><rect x="288.1" y="200" width="1.0" height="215" fill="#fff" opacity="0.02"/><rect x="289.1" y="200" width="1.9" height="215" fill="#ff0" opacity="0.04"/><rect x="291.0" y="200" width="1.9" height="215" fill="#0c0" opacity="0.05"/><rect x="292.9" y="200" width="1.7" height="215" fill="#ff0" opacity="0.01"/><rect x="294.6" y="200" width="1.6" height="215" fill="#fff" opacity="0.01"/><rect x="296.2" y="200" width="1.5" height="215" fill="#fff" opacity="0.03"/><rect x="297.7" y="200" width="1.7" height="215" fill="#ff0" opacity="0.01"/><rect x="299.4" y="200" width="1.3" height="215" fill="#0c0" opacity="0.03"/><rect x="300.7" y="200" width="1.0" height="215" fill="#000" opacity="0.03"/><rect x="301.7" y="200" width="1.3" height="215" fill="#ff0" opacity="0.06"/><rect x="303.0" y="200" width="1.0" height="215" fill="#ff0" opacity="0.06"/><rect x="304.0" y="200" width="1.6" height="215" fill="#ff0" opacity="0.03"/><rect x="305.6" y="200" width="1.8" height="215" fill="#ff0" opacity="0.01"/><rect x="307.4" y="200" width="2.0" height="215" fill="#fff" opacity="0.06"/><rect x="309.4" y="200" width="1.0" height="215" fill="#ff0" opacity="0.05"/><rect x="310.4" y="200" width="0.8" height="215" fill="#0c0" opacity="0.05"/><rect x="311.2" y="200" width="1.0" height="215" fill="#000" opacity="0.07"/><rect x="312.2" y="200" width="1.1" height="215" fill="#0c0" opacity="0.06"/><rect x="313.3" y="200" width="1.2" height="215" fill="#ff0" opacity="0.02"/><rect x="314.5" y="200" width="1.8" height="215" fill="#000" opacity="0.06"/><rect x="316.2" y="200" width="1.6" height="215" fill="#000" opacity="0.06"/><rect x="317.9" y="200" width="1.5" height="215" fill="#ff0" opacity="0.00"/><rect x="319.4" y="200" width="1.8" height="215" fill="#0c0" opacity="0.01"/><rect x="321.2" y="200" width="1.0" height="215" fill="#ff0" opacity="0.03"/><rect x="322.2" y="200" width="1.3" height="215" fill="#ff0" opacity="0.06"/><rect x="323.6" y="200" width="1.1" height="215" fill="#000" opacity="0.06"/><rect x="324.7" y="200" width="1.3" height="215" fill="#ff0" opacity="0.05"/><rect x="326.0" y="200" width="1.7" height="215" fill="#ff0" opacity="0.05"/><rect x="327.6" y="200" width="1.1" height="215" fill="#000" opacity="0.02"/><rect x="328.8" y="200" width="1.1" height="215" fill="#000" opacity="0.05"/><rect x="329.8" y="200" width="1.5" height="215" fill="#fff" opacity="0.02"/><rect x="331.4" y="200" width="1.6" height="215" fill="#ff0" opacity="0.02"/><rect x="333.0" y="200" width="1.1" height="215" fill="#ff0" opacity="0.01"/><rect x="334.1" y="200" width="1.0" height="215" fill="#000" opacity="0.06"/><rect x="335.1" y="200" width="1.5" height="215" fill="#ff0" opacity="0.00"/><rect x="336.5" y="200" width="1.4" height="215" fill="#0c0" opacity="0.03"/><rect x="337.9" y="200" width="1.9" height="215" fill="#000" opacity="0.03"/><rect x="339.8" y="200" width="1.2" height="215" fill="#ff0" opacity="0.01"/><rect x="341.1" y="200" width="1.8" height="215" fill="#000" opacity="0.00"/><rect x="342.9" y="200" width="1.7" height="215" fill="#ff0" opacity="0.01"/><rect x="344.6" y="200" width="1.8" height="215" fill="#000" opacity="0.06"/><rect x="346.4" y="200" width="1.4" height="215" fill="#0c0" opacity="0.01"/><rect x="347.8" y="200" width="1.6" height="215" fill="#ff0" opacity="0.04"/><rect x="349.4" y="200" width="1.2" height="215" fill="#fff" opacity="0.01"/><rect x="350.6" y="200" width="1.3" height="215" fill="#ff0" opacity="0.01"/><rect x="351.9" y="200" width="1.3" height="215" fill="#fff" opacity="0.04"/><rect x="353.2" y="200" width="1.3" height="215" fill="#000" opacity="0.06"/><rect x="354.4" y="200" width="1.4" height="215" fill="#0c0" opacity="0.04"/><rect x="355.9" y="200" width="1.8" height="215" fill="#000" opacity="0.06"/><rect x="357.7" y="200" width="1.5" height="215" fill="#fff" opacity="0.04"/><rect x="359.2" y="200" width="1.9" height="215" fill="#0c0" opacity="0.02"/><rect x="361.0" y="200" width="0.8" height="215" fill="#fff" opacity="0.01"/><rect x="361.9" y="200" width="1.6" height="215" fill="#ff0" opacity="0.06"/><rect x="363.5" y="200" width="1.2" height="215" fill="#ff0" opacity="0.01"/><rect x="364.7" y="200" width="1.6" height="215" fill="#ff0" opacity="0.03"/><rect x="366.3" y="200" width="1.6" height="215" fill="#0c0" opacity="0.06"/><rect x="367.9" y="200" width="1.4" height="215" fill="#ff0" opacity="0.06"/><rect x="369.3" y="200" width="1.2" height="215" fill="#000" opacity="0.05"/><rect x="370.4" y="200" width="1.7" height="215" fill="#ff0" opacity="0.06"/><rect x="372.1" y="200" width="1.7" height="215" fill="#ff0" opacity="0.04"/><rect x="373.8" y="200" width="1.7" height="215" fill="#ff0" opacity="0.04"/><rect x="375.5" y="200" width="1.3" height="215" fill="#000" opacity="0.01"/><rect x="376.8" y="200" width="1.8" height="215" fill="#000" opacity="0.02"/><rect x="378.6" y="200" width="1.6" height="215" fill="#0c0" opacity="0.05"/><rect x="380.2" y="200" width="0.8" height="215" fill="#ff0" opacity="0.06"/><rect x="381.1" y="200" width="1.5" height="215" fill="#0c0" opacity="0.04"/><rect x="382.5" y="200" width="1.9" height="215" fill="#fff" opacity="0.04"/><rect x="384.4" y="200" width="1.9" height="215" fill="#fff" opacity="0.01"/><rect x="386.3" y="200" width="1.9" height="215" fill="#000" opacity="0.03"/><rect x="388.3" y="200" width="1.9" height="215" fill="#000" opacity="0.00"/><rect x="390.2" y="200" width="1.7" height="215" fill="#fff" opacity="0.05"/><rect x="391.9" y="200" width="1.3" height="215" fill="#fff" opacity="0.06"/><rect x="393.1" y="200" width="1.0" height="215" fill="#0c0" opacity="0.04"/><rect x="394.1" y="200" width="2.0" height="215" fill="#000" opacity="0.06"/><rect x="396.1" y="200" width="2.0" height="215" fill="#ff0" opacity="0.05"/><rect x="398.0" y="200" width="1.2" height="215" fill="#0c0" opacity="0.05"/><rect x="399.2" y="200" width="1.9" height="215" fill="#0c0" opacity="0.00"/><rect x="401.1" y="200" width="1.9" height="215" fill="#0c0" opacity="0.05"/><rect x="403.0" y="200" width="1.0" height="215" fill="#ff0" opacity="0.04"/><rect x="403.9" y="200" width="2.0" height="215" fill="#0c0" opacity="0.00"/><rect x="405.9" y="200" width="1.5" height="215" fill="#000" opacity="0.04"/><rect x="407.3" y="200" width="1.2" height="215" fill="#0c0" opacity="0.05"/><rect x="408.5" y="200" width="1.2" height="215" fill="#0c0" opacity="0.07"/><rect x="409.8" y="200" width="0.9" height="215" fill="#000" opacity="0.01"/><rect x="410.6" y="200" width="0.9" height="215" fill="#fff" opacity="0.03"/><rect x="411.5" y="200" width="1.1" height="215" fill="#000" opacity="0.03"/><rect x="412.6" y="200" width="1.3" height="215" fill="#0c0" opacity="0.04"/><rect x="414.0" y="200" width="1.5" height="215" fill="#ff0" opacity="0.04"/><rect x="415.5" y="200" width="1.4" height="215" fill="#fff" opacity="0.06"/><rect x="416.9" y="200" width="1.8" height="215" fill="#000" opacity="0.01"/><rect x="418.7" y="200" width="1.4" height="215" fill="#0c0" opacity="0.05"/><rect x="420.1" y="200" width="1.9" height="215" fill="#fff" opacity="0.05"/><rect x="422.0" y="200" width="2.0" height="215" fill="#fff" opacity="0.02"/><rect x="423.9" y="200" width="1.2" height="215" fill="#ff0" opacity="0.03"/><rect x="425.1" y="200" width="0.9" height="215" fill="#ff0" opacity="0.04"/><rect x="426.0" y="200" width="1.9" height="215" fill="#0c0" opacity="0.06"/><rect x="427.9" y="200" width="1.5" height="215" fill="#fff" opacity="0.02"/><rect x="429.4" y="200" width="1.4" height="215" fill="#ff0" opacity="0.03"/><rect x="430.8" y="200" width="1.3" height="215" fill="#ff0" opacity="0.01"/><rect x="432.1" y="200" width="1.0" height="215" fill="#000" opacity="0.06"/><rect x="433.1" y="200" width="1.8" height="215" fill="#0c0" opacity="0.06"/><rect x="434.9" y="200" width="1.8" height="215" fill="#ff0" opacity="0.02"/><rect x="436.8" y="200" width="1.7" height="215" fill="#000" opacity="0.07"/><rect x="438.4" y="200" width="1.2" height="215" fill="#ff0" opacity="0.04"/><rect x="439.6" y="200" width="1.3" height="215" fill="#ff0" opacity="0.05"/><rect x="440.9" y="200" width="1.2" height="215" fill="#ff0" opacity="0.05"/><rect x="442.1" y="200" width="1.0" height="215" fill="#000" opacity="0.06"/><rect x="443.1" y="200" width="1.5" height="215" fill="#000" opacity="0.06"/><rect x="444.6" y="200" width="1.4" height="215" fill="#ff0" opacity="0.07"/><rect x="445.9" y="200" width="2.0" height="215" fill="#000" opacity="0.07"/><rect x="447.9" y="200" width="0.8" height="215" fill="#0c0" opacity="0.02"/><rect x="448.7" y="200" width="1.4" height="215" fill="#ff0" opacity="0.07"/><rect x="450.1" y="200" width="1.4" height="215" fill="#ff0" opacity="0.01"/><rect x="451.6" y="200" width="1.6" height="215" fill="#000" opacity="0.04"/><rect x="453.2" y="200" width="1.5" height="215" fill="#0c0" opacity="0.07"/><rect x="454.7" y="200" width="1.9" height="215" fill="#000" opacity="0.02"/><rect x="456.6" y="200" width="1.2" height="215" fill="#ff0" opacity="0.00"/><rect x="457.8" y="200" width="1.1" height="215" fill="#000" opacity="0.03"/><rect x="458.9" y="200" width="1.1" height="215" fill="#0c0" opacity="0.05"/><rect x="460.0" y="200" width="0.9" height="215" fill="#000" opacity="0.06"/><rect x="460.9" y="200" width="1.4" height="215" fill="#000" opacity="0.02"/><rect x="462.3" y="200" width="1.0" height="215" fill="#0c0" opacity="0.01"/><rect x="463.3" y="200" width="1.3" height="215" fill="#fff" opacity="0.02"/><rect x="464.6" y="200" width="1.9" height="215" fill="#ff0" opacity="0.04"/><rect x="466.6" y="200" width="1.9" height="215" fill="#0c0" opacity="0.02"/><rect x="468.5" y="200" width="1.6" height="215" fill="#0c0" opacity="0.06"/><rect x="470.1" y="200" width="1.5" height="215" fill="#fff" opacity="0.04"/><rect x="471.6" y="200" width="0.9" height="215" fill="#000" opacity="0.07"/><rect x="472.5" y="200" width="1.0" height="215" fill="#0c0" opacity="0.06"/><rect x="473.5" y="200" width="1.2" height="215" fill="#ff0" opacity="0.03"/><rect x="474.7" y="200" width="1.3" height="215" fill="#000" opacity="0.00"/><rect x="476.0" y="200" width="1.8" height="215" fill="#fff" opacity="0.04"/><rect x="477.8" y="200" width="1.1" height="215" fill="#fff" opacity="0.06"/><rect x="478.9" y="200" width="1.7" height="215" fill="#000" opacity="0.07"/><rect x="480.6" y="200" width="1.5" height="215" fill="#000" opacity="0.03"/><rect x="482.1" y="200" width="0.9" height="215" fill="#fff" opacity="0.02"/><rect x="483.0" y="200" width="1.5" height="215" fill="#fff" opacity="0.07"/><rect x="484.5" y="200" width="1.9" height="215" fill="#fff" opacity="0.04"/><rect x="486.4" y="200" width="0.9" height="215" fill="#0c0" opacity="0.02"/><rect x="487.3" y="200" width="1.5" height="215" fill="#0c0" opacity="0.01"/><rect x="488.8" y="200" width="1.2" height="215" fill="#fff" opacity="0.03"/><rect x="490.0" y="200" width="1.8" height="215" fill="#fff" opacity="0.03"/><rect x="491.8" y="200" width="1.2" height="215" fill="#fff" opacity="0.06"/><rect x="492.9" y="200" width="1.4" height="215" fill="#000" opacity="0.05"/><rect x="494.4" y="200" width="1.3" height="215" fill="#000" opacity="0.06"/><rect x="495.7" y="200" width="0.9" height="215" fill="#ff0" opacity="0.02"/><rect x="496.6" y="200" width="1.8" height="215" fill="#0c0" opacity="0.01"/><rect x="498.4" y="200" width="1.4" height="215" fill="#fff" opacity="0.03"/><rect x="499.8" y="200" width="1.5" height="215" fill="#fff" opacity="0.03"/><rect x="501.3" y="200" width="1.9" height="215" fill="#000" opacity="0.02"/><rect x="503.3" y="200" width="1.9" height="215" fill="#fff" opacity="0.07"/><rect x="505.1" y="200" width="1.2" height="215" fill="#fff" opacity="0.02"/><rect x="506.3" y="200" width="1.1" height="215" fill="#0c0" opacity="0.05"/><rect x="507.4" y="200" width="1.4" height="215" fill="#fff" opacity="0.03"/><rect x="508.8" y="200" width="1.0" height="215" fill="#ff0" opacity="0.02"/><rect x="509.9" y="200" width="0.9" height="215" fill="#0c0" opacity="0.02"/><rect x="510.8" y="200" width="1.0" height="215" fill="#0c0" opacity="0.03"/><rect x="511.8" y="200" width="0.8" height="215" fill="#000" opacity="0.00"/><rect x="512.6" y="200" width="1.4" height="215" fill="#fff" opacity="0.01"/><rect x="514.0" y="200" width="1.0" height="215" fill="#0c0" opacity="0.06"/><rect x="515.0" y="200" width="1.2" height="215" fill="#fff" opacity="0.01"/><rect x="516.2" y="200" width="1.5" height="215" fill="#000" opacity="0.02"/><rect x="517.7" y="200" width="1.9" height="215" fill="#000" opacity="0.07"/><rect x="519.6" y="200" width="0.8" height="215" fill="#000" opacity="0.02"/><rect x="520.5" y="200" width="0.8" height="215" fill="#0c0" opacity="0.07"/><rect x="521.3" y="200" width="1.7" height="215" fill="#000" opacity="0.02"/><rect x="523.0" y="200" width="1.9" height="215" fill="#0c0" opacity="0.05"/><rect x="524.9" y="200" width="1.0" height="215" fill="#0c0" opacity="0.00"/><rect x="525.8" y="200" width="1.2" height="215" fill="#0c0" opacity="0.02"/><rect x="527.0" y="200" width="0.8" height="215" fill="#ff0" opacity="0.02"/><rect x="527.8" y="200" width="0.8" height="215" fill="#000" opacity="0.05"/><rect x="528.7" y="200" width="1.9" height="215" fill="#000" opacity="0.06"/><rect x="530.6" y="200" width="1.4" height="215" fill="#0c0" opacity="0.06"/><rect x="532.0" y="200" width="1.8" height="215" fill="#000" opacity="0.06"/><rect x="533.8" y="200" width="1.1" height="215" fill="#fff" opacity="0.03"/><rect x="534.9" y="200" width="1.3" height="215" fill="#ff0" opacity="0.02"/><rect x="536.2" y="200" width="1.5" height="215" fill="#0c0" opacity="0.05"/><rect x="537.7" y="200" width="1.6" height="215" fill="#fff" opacity="0.07"/><rect x="539.3" y="200" width="2.0" height="215" fill="#000" opacity="0.05"/><rect x="541.3" y="200" width="0.9" height="215" fill="#fff" opacity="0.05"/><rect x="542.2" y="200" width="1.0" height="215" fill="#0c0" opacity="0.07"/><rect x="543.2" y="200" width="2.0" height="215" fill="#0c0" opacity="0.00"/><rect x="545.2" y="200" width="1.6" height="215" fill="#0c0" opacity="0.04"/><rect x="546.8" y="200" width="1.0" height="215" fill="#000" opacity="0.02"/><rect x="547.8" y="200" width="1.7" height="215" fill="#0c0" opacity="0.02"/><rect x="549.5" y="200" width="1.0" height="215" fill="#fff" opacity="0.03"/><rect x="550.6" y="200" width="1.2" height="215" fill="#0c0" opacity="0.06"/><rect x="551.8" y="200" width="1.5" height="215" fill="#0c0" opacity="0.03"/><rect x="553.3" y="200" width="0.9" height="215" fill="#ff0" opacity="0.01"/><rect x="554.1" y="200" width="1.4" height="215" fill="#000" opacity="0.03"/><rect x="555.6" y="200" width="1.7" height="215" fill="#fff" opacity="0.04"/><rect x="557.3" y="200" width="0.8" height="215" fill="#fff" opacity="0.01"/><rect x="558.1" y="200" width="1.5" height="215" fill="#fff" opacity="0.03"/><rect x="559.7" y="200" width="1.1" height="215" fill="#ff0" opacity="0.01"/><rect x="560.8" y="200" width="1.6" height="215" fill="#fff" opacity="0.07"/><rect x="562.3" y="200" width="1.3" height="215" fill="#0c0" opacity="0.07"/><rect x="563.7" y="200" width="0.9" height="215" fill="#fff" opacity="0.02"/><rect x="564.6" y="200" width="1.4" height="215" fill="#ff0" opacity="0.06"/><rect x="565.9" y="200" width="1.6" height="215" fill="#fff" opacity="0.05"/><rect x="567.5" y="200" width="0.9" height="215" fill="#fff" opacity="0.07"/><rect x="568.4" y="200" width="1.8" height="215" fill="#fff" opacity="0.01"/><rect x="570.2" y="200" width="0.8" height="215" fill="#0c0" opacity="0.02"/><rect x="571.0" y="200" width="1.8" height="215" fill="#ff0" opacity="0.03"/><rect x="572.8" y="200" width="1.6" height="215" fill="#fff" opacity="0.06"/><rect x="574.4" y="200" width="1.3" height="215" fill="#ff0" opacity="0.03"/><rect x="575.7" y="200" width="1.0" height="215" fill="#ff0" opacity="0.04"/><rect x="576.7" y="200" width="1.7" height="215" fill="#000" opacity="0.03"/><rect x="578.4" y="200" width="1.6" height="215" fill="#0c0" opacity="0.01"/><rect x="580.0" y="200" width="1.3" height="215" fill="#0c0" opacity="0.01"/><rect x="581.3" y="200" width="1.9" height="215" fill="#0c0" opacity="0.01"/><rect x="583.2" y="200" width="1.5" height="215" fill="#ff0" opacity="0.01"/><rect x="584.7" y="200" width="1.0" height="215" fill="#fff" opacity="0.04"/><rect x="585.7" y="200" width="1.6" height="215" fill="#0c0" opacity="0.04"/><rect x="587.2" y="200" width="1.4" height="215" fill="#fff" opacity="0.05"/><rect x="588.7" y="200" width="1.8" height="215" fill="#ff0" opacity="0.06"/><rect x="590.5" y="200" width="0.9" height="215" fill="#fff" opacity="0.05"/><rect x="591.4" y="200" width="1.3" height="215" fill="#0c0" opacity="0.01"/><rect x="592.7" y="200" width="1.1" height="215" fill="#0c0" opacity="0.01"/><rect x="593.8" y="200" width="1.5" height="215" fill="#fff" opacity="0.05"/><rect x="595.3" y="200" width="1.1" height="215" fill="#0c0" opacity="0.03"/><rect x="596.4" y="200" width="1.8" height="215" fill="#fff" opacity="0.01"/><rect x="598.2" y="200" width="1.8" height="215" fill="#fff" opacity="0.01"/><rect x="600.0" y="200" width="1.4" height="215" fill="#fff" opacity="0.06"/><rect x="601.5" y="200" width="1.4" height="215" fill="#fff" opacity="0.07"/><rect x="602.8" y="200" width="1.1" height="215" fill="#000" opacity="0.01"/><rect x="603.9" y="200" width="1.4" height="215" fill="#ff0" opacity="0.05"/><rect x="605.3" y="200" width="1.6" height="215" fill="#fff" opacity="0.01"/><rect x="606.9" y="200" width="0.9" height="215" fill="#000" opacity="0.07"/><rect x="607.8" y="200" width="0.8" height="215" fill="#000" opacity="0.01"/><rect x="608.6" y="200" width="0.9" height="215" fill="#0c0" opacity="0.03"/><rect x="609.5" y="200" width="1.4" height="215" fill="#0c0" opacity="0.02"/><rect x="611.0" y="200" width="1.5" height="215" fill="#fff" opacity="0.04"/><rect x="612.4" y="200" width="1.7" height="215" fill="#000" opacity="0.04"/><rect x="614.2" y="200" width="2.0" height="215" fill="#fff" opacity="0.05"/><rect x="616.1" y="200" width="1.0" height="215" fill="#fff" opacity="0.03"/><rect x="617.1" y="200" width="1.3" height="215" fill="#000" opacity="0.03"/><rect x="618.4" y="200" width="1.4" height="215" fill="#ff0" opacity="0.03"/><rect x="619.8" y="200" width="1.7" height="215" fill="#0c0" opacity="0.07"/><rect x="621.5" y="200" width="1.8" height="215" fill="#0c0" opacity="0.02"/><rect x="623.3" y="200" width="1.6" height="215" fill="#0c0" opacity="0.00"/><rect x="624.9" y="200" width="1.2" height="215" fill="#0c0" opacity="0.00"/><rect x="626.1" y="200" width="1.0" height="215" fill="#ff0" opacity="0.06"/><rect x="627.1" y="200" width="0.9" height="215" fill="#000" opacity="0.03"/><rect x="628.0" y="200" width="1.9" height="215" fill="#ff0" opacity="0.03"/><rect x="629.9" y="200" width="1.4" height="215" fill="#ff0" opacity="0.02"/><rect x="631.3" y="200" width="1.3" height="215" fill="#000" opacity="0.01"/><rect x="632.5" y="200" width="1.6" height="215" fill="#ff0" opacity="0.01"/><rect x="634.1" y="200" width="1.1" height="215" fill="#ff0" opacity="0.02"/><rect x="635.2" y="200" width="1.2" height="215" fill="#000" opacity="0.03"/><rect x="636.4" y="200" width="1.0" height="215" fill="#ff0" opacity="0.07"/><rect x="637.4" y="200" width="1.1" height="215" fill="#fff" opacity="0.02"/><rect x="638.5" y="200" width="2.0" height="215" fill="#000" opacity="0.03"/><rect x="640.4" y="200" width="1.6" height="215" fill="#fff" opacity="0.04"/><rect x="642.0" y="200" width="1.2" height="215" fill="#fff" opacity="0.00"/><rect x="643.2" y="200" width="1.4" height="215" fill="#000" opacity="0.04"/><rect x="644.6" y="200" width="1.9" height="215" fill="#0c0" opacity="0.02"/><rect x="646.5" y="200" width="1.6" height="215" fill="#ff0" opacity="0.02"/><rect x="648.1" y="200" width="1.0" height="215" fill="#fff" opacity="0.04"/><rect x="649.1" y="200" width="1.1" height="215" fill="#0c0" opacity="0.02"/><rect x="650.2" y="200" width="1.7" height="215" fill="#fff" opacity="0.04"/><rect x="651.9" y="200" width="1.4" height="215" fill="#0c0" opacity="0.06"/><rect x="653.2" y="200" width="1.4" height="215" fill="#ff0" opacity="0.05"/><rect x="654.7" y="200" width="1.8" height="215" fill="#000" opacity="0.01"/><rect x="656.4" y="200" width="1.2" height="215" fill="#0c0" opacity="0.06"/><rect x="657.6" y="200" width="0.9" height="215" fill="#ff0" opacity="0.06"/><rect x="658.5" y="200" width="1.1" height="215" fill="#0c0" opacity="0.01"/><rect x="659.6" y="200" width="1.0" height="215" fill="#fff" opacity="0.06"/><rect x="660.6" y="200" width="1.5" height="215" fill="#fff" opacity="0.06"/><rect x="662.1" y="200" width="1.1" height="215" fill="#000" opacity="0.02"/><rect x="663.1" y="200" width="0.9" height="215" fill="#fff" opacity="0.02"/><rect x="664.1" y="200" width="1.4" height="215" fill="#000" opacity="0.04"/><rect x="665.5" y="200" width="1.9" height="215" fill="#000" opacity="0.04"/><rect x="667.4" y="200" width="1.1" height="215" fill="#fff" opacity="0.04"/><rect x="668.5" y="200" width="1.6" height="215" fill="#0c0" opacity="0.04"/><rect x="670.1" y="200" width="1.0" height="215" fill="#fff" opacity="0.00"/><rect x="671.1" y="200" width="1.7" height="215" fill="#ff0" opacity="0.04"/><rect x="672.7" y="200" width="1.1" height="215" fill="#000" opacity="0.07"/><rect x="673.9" y="200" width="1.9" height="215" fill="#000" opacity="0.07"/><rect x="675.8" y="200" width="1.1" height="215" fill="#fff" opacity="0.02"/><rect x="676.9" y="200" width="1.1" height="215" fill="#000" opacity="0.05"/><rect x="678.0" y="200" width="1.0" height="215" fill="#fff" opacity="0.04"/><rect x="678.9" y="200" width="1.9" height="215" fill="#000" opacity="0.03"/><rect x="680.8" y="200" width="1.2" height="215" fill="#0c0" opacity="0.02"/><rect x="682.0" y="200" width="1.7" height="215" fill="#ff0" opacity="0.01"/><rect x="683.7" y="200" width="1.9" height="215" fill="#0c0" opacity="0.03"/><rect x="685.7" y="200" width="0.9" height="215" fill="#0c0" opacity="0.05"/><rect x="686.6" y="200" width="2.0" height="215" fill="#000" opacity="0.01"/><rect x="688.6" y="200" width="1.1" height="215" fill="#000" opacity="0.00"/><rect x="689.6" y="200" width="1.6" height="215" fill="#ff0" opacity="0.05"/><rect x="691.2" y="200" width="0.9" height="215" fill="#fff" opacity="0.05"/><rect x="692.1" y="200" width="1.4" height="215" fill="#0c0" opacity="0.01"/><rect x="693.6" y="200" width="1.8" height="215" fill="#ff0" opacity="0.01"/><rect x="695.4" y="200" width="1.6" height="215" fill="#000" opacity="0.01"/><rect x="697.0" y="200" width="1.2" height="215" fill="#000" opacity="0.02"/><rect x="698.2" y="200" width="2.0" height="215" fill="#000" opacity="0.06"/><rect x="700.2" y="200" width="1.6" height="215" fill="#0c0" opacity="0.06"/><rect x="701.7" y="200" width="1.9" height="215" fill="#0c0" opacity="0.02"/><rect x="703.7" y="200" width="0.9" height="215" fill="#fff" opacity="0.02"/><rect x="704.6" y="200" width="0.8" height="215" fill="#000" opacity="0.01"/><rect x="705.4" y="200" width="1.9" height="215" fill="#fff" opacity="0.01"/><rect x="707.4" y="200" width="1.1" height="215" fill="#000" opacity="0.02"/><rect x="708.5" y="200" width="0.9" height="215" fill="#fff" opacity="0.02"/><rect x="709.4" y="200" width="1.5" height="215" fill="#000" opacity="0.04"/><rect x="710.9" y="200" width="1.0" height="215" fill="#0c0" opacity="0.01"/><rect x="711.9" y="200" width="1.7" height="215" fill="#000" opacity="0.04"/><rect x="713.6" y="200" width="0.9" height="215" fill="#000" opacity="0.01"/><rect x="714.6" y="200" width="0.9" height="215" fill="#ff0" opacity="0.01"/><rect x="715.4" y="200" width="1.7" height="215" fill="#0c0" opacity="0.03"/><rect x="717.1" y="200" width="1.2" height="215" fill="#fff" opacity="0.07"/><rect x="718.4" y="200" width="0.9" height="215" fill="#000" opacity="0.03"/><rect x="719.2" y="200" width="1.2" height="215" fill="#0c0" opacity="0.03"/><rect x="720.5" y="200" width="2.0" height="215" fill="#fff" opacity="0.04"/><rect x="722.5" y="200" width="0.9" height="215" fill="#0c0" opacity="0.06"/><rect x="723.3" y="200" width="0.8" height="215" fill="#ff0" opacity="0.01"/><rect x="724.1" y="200" width="1.2" height="215" fill="#0c0" opacity="0.04"/><rect x="725.3" y="200" width="1.9" height="215" fill="#000" opacity="0.01"/><rect x="727.2" y="200" width="1.1" height="215" fill="#fff" opacity="0.04"/><rect x="728.3" y="200" width="1.3" height="215" fill="#fff" opacity="0.06"/><rect x="729.6" y="200" width="1.2" height="215" fill="#ff0" opacity="0.02"/><rect x="730.8" y="200" width="1.9" height="215" fill="#fff" opacity="0.07"/><rect x="732.7" y="200" width="1.2" height="215" fill="#000" opacity="0.04"/><rect x="733.9" y="200" width="0.8" height="215" fill="#ff0" opacity="0.06"/><rect x="734.7" y="200" width="1.2" height="215" fill="#ff0" opacity="0.03"/><rect x="735.9" y="200" width="1.0" height="215" fill="#000" opacity="0.03"/><rect x="736.9" y="200" width="1.6" height="215" fill="#000" opacity="0.04"/><rect x="738.5" y="200" width="0.9" height="215" fill="#000" opacity="0.04"/><rect x="739.4" y="200" width="1.2" height="215" fill="#0c0" opacity="0.05"/><rect x="740.6" y="200" width="1.9" height="215" fill="#0c0" opacity="0.04"/><rect x="742.5" y="200" width="1.4" height="215" fill="#ff0" opacity="0.04"/><rect x="743.9" y="200" width="0.8" height="215" fill="#0c0" opacity="0.00"/><rect x="744.7" y="200" width="1.3" height="215" fill="#fff" opacity="0.02"/><rect x="746.0" y="200" width="0.9" height="215" fill="#0c0" opacity="0.00"/><rect x="746.9" y="200" width="1.2" height="215" fill="#fff" opacity="0.02"/><rect x="748.1" y="200" width="0.9" height="215" fill="#0c0" opacity="0.00"/><rect x="749.0" y="200" width="1.5" height="215" fill="#000" opacity="0.05"/><rect x="750.5" y="200" width="0.8" height="215" fill="#000" opacity="0.03"/><rect x="751.4" y="200" width="1.5" height="215" fill="#000" opacity="0.00"/><rect x="752.9" y="200" width="1.6" height="215" fill="#fff" opacity="0.01"/><rect x="754.5" y="200" width="1.0" height="215" fill="#000" opacity="0.06"/><rect x="755.6" y="200" width="1.1" height="215" fill="#0c0" opacity="0.07"/><rect x="756.7" y="200" width="1.2" height="215" fill="#ff0" opacity="0.01"/><rect x="757.9" y="200" width="0.8" height="215" fill="#0c0" opacity="0.00"/><rect x="758.7" y="200" width="1.9" height="215" fill="#ff0" opacity="0.01"/><rect x="760.5" y="200" width="1.0" height="215" fill="#fff" opacity="0.02"/><rect x="761.6" y="200" width="1.9" height="215" fill="#fff" opacity="0.05"/><rect x="763.4" y="200" width="1.9" height="215" fill="#000" opacity="0.05"/><rect x="765.3" y="200" width="1.7" height="215" fill="#0c0" opacity="0.04"/><rect x="767.1" y="200" width="1.9" height="215" fill="#000" opacity="0.03"/><rect x="769.0" y="200" width="1.2" height="215" fill="#fff" opacity="0.06"/><rect x="770.2" y="200" width="1.4" height="215" fill="#ff0" opacity="0.02"/><rect x="771.6" y="200" width="1.7" height="215" fill="#ff0" opacity="0.03"/><rect x="773.2" y="200" width="1.9" height="215" fill="#fff" opacity="0.02"/><rect x="775.1" y="200" width="1.0" height="215" fill="#ff0" opacity="0.02"/><rect x="776.1" y="200" width="1.6" height="215" fill="#ff0" opacity="0.00"/><rect x="777.7" y="200" width="1.4" height="215" fill="#ff0" opacity="0.00"/><rect x="779.1" y="200" width="0.9" height="215" fill="#fff" opacity="0.01"/><rect x="780.0" y="200" width="1.8" height="215" fill="#000" opacity="0.05"/><rect x="781.9" y="200" width="2.0" height="215" fill="#0c0" opacity="0.07"/><rect x="783.9" y="200" width="1.4" height="215" fill="#fff" opacity="0.05"/><rect x="785.2" y="200" width="0.9" height="215" fill="#ff0" opacity="0.03"/><rect x="786.1" y="200" width="1.2" height="215" fill="#0c0" opacity="0.01"/><rect x="787.3" y="200" width="1.4" height="215" fill="#000" opacity="0.03"/><rect x="788.7" y="200" width="1.6" height="215" fill="#ff0" opacity="0.03"/><rect x="790.3" y="200" width="2.0" height="215" fill="#ff0" opacity="0.06"/><rect x="792.3" y="200" width="1.0" height="215" fill="#ff0" opacity="0.06"/><rect x="793.3" y="200" width="1.3" height="215" fill="#fff" opacity="0.01"/><rect x="794.6" y="200" width="1.5" height="215" fill="#ff0" opacity="0.05"/><rect x="796.1" y="200" width="1.2" height="215" fill="#fff" opacity="0.06"/><rect x="797.3" y="200" width="1.1" height="215" fill="#ff0" opacity="0.03"/><rect x="798.4" y="200" width="1.5" height="215" fill="#ff0" opacity="0.05"/><rect x="799.8" y="200" width="1.4" height="215" fill="#0c0" opacity="0.04"/><rect x="801.2" y="200" width="0.9" height="215" fill="#fff" opacity="0.03"/><rect x="802.1" y="200" width="1.4" height="215" fill="#ff0" opacity="0.03"/><rect x="803.6" y="200" width="1.8" height="215" fill="#000" opacity="0.06"/><rect x="805.4" y="200" width="1.2" height="215" fill="#ff0" opacity="0.07"/><rect x="806.6" y="200" width="1.1" height="215" fill="#000" opacity="0.04"/><rect x="807.7" y="200" width="0.9" height="215" fill="#000" opacity="0.02"/><rect x="808.6" y="200" width="1.9" height="215" fill="#ff0" opacity="0.05"/><rect x="810.6" y="200" width="1.9" height="215" fill="#000" opacity="0.06"/><rect x="812.5" y="200" width="1.7" height="215" fill="#fff" opacity="0.04"/><rect x="814.2" y="200" width="0.9" height="215" fill="#fff" opacity="0.07"/><rect x="815.1" y="200" width="1.3" height="215" fill="#ff0" opacity="0.03"/><rect x="816.3" y="200" width="1.4" height="215" fill="#ff0" opacity="0.06"/><rect x="817.8" y="200" width="1.1" height="215" fill="#000" opacity="0.06"/><rect x="818.8" y="200" width="1.4" height="215" fill="#ff0" opacity="0.01"/><rect x="820.2" y="200" width="1.4" height="215" fill="#000" opacity="0.07"/><rect x="821.6" y="200" width="1.0" height="215" fill="#000" opacity="0.04"/><rect x="822.6" y="200" width="1.2" height="215" fill="#fff" opacity="0.04"/><rect x="823.8" y="200" width="1.0" height="215" fill="#ff0" opacity="0.06"/><rect x="824.8" y="200" width="1.8" height="215" fill="#ff0" opacity="0.06"/><rect x="826.6" y="200" width="1.7" height="215" fill="#fff" opacity="0.04"/><rect x="828.2" y="200" width="1.8" height="215" fill="#0c0" opacity="0.00"/><rect x="830.1" y="200" width="1.8" height="215" fill="#ff0" opacity="0.05"/><rect x="831.9" y="200" width="1.4" height="215" fill="#000" opacity="0.04"/><rect x="833.3" y="200" width="0.9" height="215" fill="#000" opacity="0.02"/><rect x="834.2" y="200" width="1.5" height="215" fill="#0c0" opacity="0.01"/><rect x="835.6" y="200" width="1.2" height="215" fill="#fff" opacity="0.00"/><rect x="836.9" y="200" width="1.6" height="215" fill="#0c0" opacity="0.03"/><rect x="838.4" y="200" width="1.8" height="215" fill="#0c0" opacity="0.04"/><rect x="840.2" y="200" width="2.0" height="215" fill="#000" opacity="0.01"/><rect x="842.2" y="200" width="1.8" height="215" fill="#000" opacity="0.03"/><rect x="844.0" y="200" width="1.3" height="215" fill="#000" opacity="0.06"/><rect x="845.3" y="200" width="2.0" height="215" fill="#ff0" opacity="0.04"/><rect x="847.2" y="200" width="1.4" height="215" fill="#0c0" opacity="0.01"/><rect x="848.6" y="200" width="1.3" height="215" fill="#0c0" opacity="0.03"/><rect x="850.0" y="200" width="1.8" height="215" fill="#000" opacity="0.06"/><rect x="851.7" y="200" width="1.9" height="215" fill="#fff" opacity="0.01"/><rect x="853.7" y="200" width="1.7" height="215" fill="#fff" opacity="0.06"/><rect x="855.4" y="200" width="1.7" height="215" fill="#ff0" opacity="0.00"/><rect x="857.1" y="200" width="1.0" height="215" fill="#0c0" opacity="0.07"/><rect x="858.1" y="200" width="1.1" height="215" fill="#000" opacity="0.04"/><rect x="859.2" y="200" width="1.1" height="215" fill="#0c0" opacity="0.05"/><rect x="860.3" y="200" width="1.6" height="215" fill="#fff" opacity="0.02"/><rect x="861.9" y="200" width="1.3" height="215" fill="#0c0" opacity="0.04"/><rect x="863.2" y="200" width="1.3" height="215" fill="#0c0" opacity="0.02"/><rect x="864.5" y="200" width="1.0" height="215" fill="#fff" opacity="0.01"/><rect x="865.5" y="200" width="1.9" height="215" fill="#fff" opacity="0.05"/><rect x="867.3" y="200" width="1.9" height="215" fill="#fff" opacity="0.02"/><rect x="869.2" y="200" width="1.8" height="215" fill="#ff0" opacity="0.03"/><rect x="871.0" y="200" width="0.9" height="215" fill="#0c0" opacity="0.01"/><rect x="871.9" y="200" width="1.3" height="215" fill="#0c0" opacity="0.04"/><rect x="873.3" y="200" width="1.7" height="215" fill="#0c0" opacity="0.06"/><rect x="874.9" y="200" width="1.9" height="215" fill="#000" opacity="0.03"/><rect x="876.9" y="200" width="0.9" height="215" fill="#ff0" opacity="0.05"/><rect x="877.8" y="200" width="1.2" height="215" fill="#ff0" opacity="0.07"/><rect x="879.0" y="200" width="0.8" height="215" fill="#000" opacity="0.06"/><rect x="879.8" y="200" width="1.6" height="215" fill="#ff0" opacity="0.04"/><rect x="881.4" y="200" width="2.0" height="215" fill="#fff" opacity="0.06"/><rect x="883.4" y="200" width="1.8" height="215" fill="#fff" opacity="0.00"/><rect x="885.2" y="200" width="1.0" height="215" fill="#ff0" opacity="0.03"/><rect x="886.2" y="200" width="1.5" height="215" fill="#0c0" opacity="0.04"/><rect x="887.7" y="200" width="1.0" height="215" fill="#0c0" opacity="0.04"/><rect x="888.7" y="200" width="1.1" height="215" fill="#0c0" opacity="0.01"/><rect x="889.8" y="200" width="1.5" height="215" fill="#ff0" opacity="0.06"/><rect x="891.3" y="200" width="1.8" height="215" fill="#000" opacity="0.05"/><rect x="893.1" y="200" width="1.8" height="215" fill="#fff" opacity="0.01"/><rect x="894.9" y="200" width="1.5" height="215" fill="#000" opacity="0.02"/><rect x="896.4" y="200" width="1.0" height="215" fill="#fff" opacity="0.07"/><rect x="897.4" y="200" width="1.3" height="215" fill="#fff" opacity="0.04"/><rect x="898.6" y="200" width="1.8" height="215" fill="#fff" opacity="0.02"/><rect x="900.4" y="200" width="0.8" height="215" fill="#0c0" opacity="0.01"/>
 <rect x="247.5" y="261.8" width="1.2" height="38.2" fill="#a8cc40" opacity="0.23"/><rect x="251.0" y="259.7" width="1.2" height="40.3" fill="#a8cc40" opacity="0.30"/><rect x="252.2" y="261.0" width="1.2" height="39.0" fill="#a8cc40" opacity="0.38"/><rect x="253.3" y="263.9" width="1.2" height="36.1" fill="#a8cc40" opacity="0.23"/><rect x="254.5" y="261.2" width="1.2" height="38.8" fill="#a8cc40" opacity="0.30"/><rect x="256.9" y="260.3" width="1.2" height="25.6" fill="#a8cc40" opacity="0.25"/><rect x="260.4" y="265.7" width="1.2" height="22.0" fill="#a8cc40" opacity="0.36"/><rect x="261.5" y="262.2" width="1.2" height="28.9" fill="#a8cc40" opacity="0.16"/><rect x="265.1" y="262.9" width="1.2" height="34.0" fill="#a8cc40" opacity="0.40"/><rect x="266.2" y="259.5" width="1.2" height="21.4" fill="#a8cc40" opacity="0.31"/><rect x="273.2" y="259.1" width="1.2" height="40.9" fill="#a8cc40" opacity="0.26"/><rect x="275.6" y="261.4" width="1.2" height="20.6" fill="#a8cc40" opacity="0.15"/><rect x="276.8" y="258.6" width="1.2" height="28.4" fill="#a8cc40" opacity="0.26"/><rect x="279.1" y="263.5" width="1.2" height="35.8" fill="#a8cc40" opacity="0.40"/><rect x="280.3" y="262.0" width="1.2" height="34.7" fill="#a8cc40" opacity="0.24"/><rect x="282.6" y="265.3" width="1.2" height="27.9" fill="#a8cc40" opacity="0.23"/><rect x="286.1" y="258.5" width="1.2" height="41.5" fill="#a8cc40" opacity="0.24"/><rect x="287.3" y="263.1" width="1.2" height="36.6" fill="#a8cc40" opacity="0.23"/><rect x="288.5" y="264.0" width="1.2" height="26.9" fill="#a8cc40" opacity="0.25"/><rect x="293.1" y="262.8" width="1.2" height="37.2" fill="#a8cc40" opacity="0.26"/><rect x="295.5" y="263.5" width="1.2" height="32.9" fill="#a8cc40" opacity="0.36"/><rect x="299.0" y="258.6" width="1.2" height="41.4" fill="#a8cc40" opacity="0.32"/><rect x="303.7" y="257.7" width="1.2" height="42.3" fill="#a8cc40" opacity="0.32"/><rect x="304.8" y="261.6" width="1.2" height="16.8" fill="#a8cc40" opacity="0.30"/><rect x="306.0" y="260.8" width="1.2" height="25.7" fill="#a8cc40" opacity="0.29"/><rect x="307.2" y="260.6" width="1.2" height="39.4" fill="#a8cc40" opacity="0.18"/><rect x="308.3" y="262.4" width="1.2" height="37.3" fill="#a8cc40" opacity="0.30"/><rect x="311.9" y="262.4" width="1.2" height="37.6" fill="#a8cc40" opacity="0.29"/><rect x="320.0" y="263.1" width="1.2" height="11.7" fill="#a8cc40" opacity="0.38"/><rect x="323.6" y="266.9" width="1.2" height="18.9" fill="#a8cc40" opacity="0.36"/><rect x="325.9" y="267.0" width="1.2" height="32.0" fill="#a8cc40" opacity="0.36"/><rect x="330.6" y="267.7" width="1.2" height="26.9" fill="#a8cc40" opacity="0.16"/><rect x="331.7" y="261.3" width="1.2" height="13.6" fill="#a8cc40" opacity="0.31"/><rect x="332.9" y="262.3" width="1.2" height="24.6" fill="#a8cc40" opacity="0.22"/><rect x="341.1" y="270.4" width="1.2" height="29.6" fill="#a8cc40" opacity="0.33"/><rect x="342.3" y="263.9" width="1.2" height="36.1" fill="#a8cc40" opacity="0.29"/><rect x="345.8" y="268.4" width="1.2" height="31.6" fill="#a8cc40" opacity="0.35"/><rect x="348.1" y="268.6" width="1.2" height="24.1" fill="#a8cc40" opacity="0.34"/><rect x="350.5" y="263.5" width="1.2" height="29.8" fill="#a8cc40" opacity="0.21"/><rect x="351.6" y="262.9" width="1.2" height="28.4" fill="#a8cc40" opacity="0.28"/><rect x="354.0" y="264.2" width="1.2" height="35.8" fill="#a8cc40" opacity="0.37"/><rect x="356.3" y="261.2" width="1.2" height="38.8" fill="#a8cc40" opacity="0.31"/><rect x="359.8" y="266.1" width="1.2" height="33.6" fill="#a8cc40" opacity="0.28"/><rect x="362.2" y="264.8" width="1.2" height="27.7" fill="#a8cc40" opacity="0.35"/><rect x="363.3" y="261.3" width="1.2" height="38.7" fill="#a8cc40" opacity="0.27"/><rect x="366.8" y="263.0" width="1.2" height="10.1" fill="#a8cc40" opacity="0.35"/><rect x="368.0" y="266.2" width="1.2" height="33.8" fill="#a8cc40" opacity="0.30"/><rect x="370.4" y="266.1" width="1.2" height="24.6" fill="#a8cc40" opacity="0.37"/><rect x="378.5" y="262.6" width="1.2" height="30.6" fill="#a8cc40" opacity="0.28"/><rect x="379.7" y="263.9" width="1.2" height="36.1" fill="#a8cc40" opacity="0.25"/><rect x="380.9" y="263.9" width="1.2" height="36.1" fill="#a8cc40" opacity="0.20"/><rect x="387.9" y="271.9" width="1.2" height="20.0" fill="#a8cc40" opacity="0.16"/><rect x="392.6" y="272.9" width="1.2" height="25.3" fill="#a8cc40" opacity="0.33"/><rect x="393.8" y="272.0" width="1.2" height="28.0" fill="#a8cc40" opacity="0.24"/><rect x="396.1" y="274.1" width="1.2" height="25.9" fill="#a8cc40" opacity="0.19"/><rect x="399.6" y="278.0" width="1.2" height="22.0" fill="#a8cc40" opacity="0.16"/><rect x="400.8" y="272.7" width="1.2" height="22.6" fill="#a8cc40" opacity="0.17"/><rect x="403.1" y="275.9" width="1.2" height="24.1" fill="#a8cc40" opacity="0.24"/><rect x="406.6" y="277.6" width="1.2" height="10.4" fill="#a8cc40" opacity="0.23"/><rect x="407.8" y="282.3" width="1.2" height="17.7" fill="#a8cc40" opacity="0.40"/><rect x="409.0" y="277.6" width="1.2" height="22.4" fill="#a8cc40" opacity="0.25"/><rect x="412.5" y="279.6" width="1.2" height="20.4" fill="#a8cc40" opacity="0.28"/><rect x="419.5" y="285.0" width="1.2" height="15.0" fill="#a8cc40" opacity="0.25"/><rect x="425.3" y="286.5" width="1.2" height="13.5" fill="#a8cc40" opacity="0.17"/><rect x="430.0" y="287.0" width="1.2" height="13.0" fill="#a8cc40" opacity="0.36"/><rect x="432.4" y="284.4" width="1.2" height="15.6" fill="#a8cc40" opacity="0.33"/><rect x="433.5" y="287.1" width="1.2" height="12.9" fill="#a8cc40" opacity="0.31"/><rect x="434.7" y="285.5" width="1.2" height="14.5" fill="#a8cc40" opacity="0.30"/><rect x="435.9" y="283.0" width="1.2" height="17.0" fill="#a8cc40" opacity="0.22"/><rect x="438.2" y="286.4" width="1.2" height="13.6" fill="#a8cc40" opacity="0.18"/><rect x="440.6" y="289.5" width="1.2" height="10.5" fill="#a8cc40" opacity="0.33"/><rect x="442.9" y="285.2" width="1.2" height="14.8" fill="#a8cc40" opacity="0.25"/><rect x="444.1" y="286.2" width="1.2" height="13.8" fill="#a8cc40" opacity="0.39"/><rect x="447.6" y="289.8" width="1.2" height="10.2" fill="#a8cc40" opacity="0.31"/><rect x="452.3" y="283.3" width="1.2" height="12.1" fill="#a8cc40" opacity="0.26"/><rect x="454.6" y="286.4" width="1.2" height="13.6" fill="#a8cc40" opacity="0.22"/><rect x="455.8" y="287.3" width="1.2" height="12.7" fill="#a8cc40" opacity="0.38"/><rect x="458.1" y="288.1" width="1.2" height="11.9" fill="#a8cc40" opacity="0.16"/><rect x="461.6" y="289.0" width="1.2" height="11.0" fill="#a8cc40" opacity="0.17"/><rect x="464.0" y="287.2" width="1.2" height="12.8" fill="#a8cc40" opacity="0.15"/><rect x="466.3" y="289.5" width="1.2" height="10.5" fill="#a8cc40" opacity="0.19"/><rect x="467.5" y="287.0" width="1.2" height="13.0" fill="#a8cc40" opacity="0.20"/><rect x="469.8" y="294.1" width="1.2" height="5.9" fill="#a8cc40" opacity="0.21"/><rect x="471.0" y="294.9" width="1.2" height="5.1" fill="#a8cc40" opacity="0.34"/><rect x="472.1" y="296.4" width="1.2" height="3.6" fill="#a8cc40" opacity="0.30"/><rect x="474.5" y="290.6" width="1.2" height="9.4" fill="#a8cc40" opacity="0.30"/><rect x="476.8" y="295.3" width="1.2" height="4.7" fill="#a8cc40" opacity="0.26"/><rect x="478.0" y="296.6" width="1.2" height="3.4" fill="#a8cc40" opacity="0.22"/><rect x="480.3" y="297.1" width="1.2" height="2.9" fill="#a8cc40" opacity="0.21"/><rect x="481.5" y="296.0" width="1.2" height="4.0" fill="#a8cc40" opacity="0.33"/><rect x="495.5" y="300.0" width="1.2" height="0.0" fill="#a8cc40" opacity="0.27"/><rect x="502.6" y="296.4" width="1.2" height="3.6" fill="#a8cc40" opacity="0.25"/><rect x="518.9" y="299.2" width="1.2" height="0.8" fill="#a8cc40" opacity="0.38"/><rect x="522.5" y="299.8" width="1.2" height="0.2" fill="#a8cc40" opacity="0.23"/><rect x="529.5" y="295.1" width="1.2" height="4.9" fill="#a8cc40" opacity="0.20"/><rect x="530.6" y="294.5" width="1.2" height="5.5" fill="#a8cc40" opacity="0.33"/><rect x="534.2" y="295.3" width="1.2" height="4.7" fill="#a8cc40" opacity="0.15"/><rect x="537.7" y="298.4" width="1.2" height="1.6" fill="#a8cc40" opacity="0.15"/><rect x="540.0" y="293.8" width="1.2" height="6.2" fill="#a8cc40" opacity="0.17"/><rect x="544.7" y="294.6" width="1.2" height="5.4" fill="#a8cc40" opacity="0.24"/><rect x="548.2" y="299.2" width="1.2" height="0.8" fill="#a8cc40" opacity="0.33"/><rect x="554.0" y="297.4" width="1.2" height="2.6" fill="#a8cc40" opacity="0.25"/><rect x="555.2" y="298.0" width="1.2" height="2.0" fill="#a8cc40" opacity="0.34"/><rect x="562.2" y="299.4" width="1.2" height="0.6" fill="#a8cc40" opacity="0.18"/><rect x="563.4" y="297.5" width="1.2" height="2.5" fill="#a8cc40" opacity="0.31"/><rect x="571.6" y="292.2" width="1.2" height="7.8" fill="#a8cc40" opacity="0.35"/><rect x="572.8" y="296.6" width="1.2" height="3.4" fill="#a8cc40" opacity="0.18"/><rect x="573.9" y="295.1" width="1.2" height="4.9" fill="#a8cc40" opacity="0.39"/><rect x="579.8" y="298.5" width="1.2" height="1.5" fill="#a8cc40" opacity="0.17"/><rect x="582.1" y="295.1" width="1.2" height="4.9" fill="#a8cc40" opacity="0.39"/><rect x="588.0" y="296.0" width="1.2" height="4.0" fill="#a8cc40" opacity="0.25"/><rect x="591.5" y="298.3" width="1.2" height="1.7" fill="#a8cc40" opacity="0.20"/><rect x="592.7" y="294.1" width="1.2" height="5.9" fill="#a8cc40" opacity="0.16"/><rect x="602.0" y="296.5" width="1.2" height="3.5" fill="#a8cc40" opacity="0.31"/><rect x="603.2" y="297.7" width="1.2" height="2.3" fill="#a8cc40" opacity="0.27"/><rect x="607.9" y="298.9" width="1.2" height="1.1" fill="#a8cc40" opacity="0.40"/><rect x="613.7" y="298.6" width="1.2" height="1.4" fill="#a8cc40" opacity="0.22"/><rect x="617.2" y="297.7" width="1.2" height="2.3" fill="#a8cc40" opacity="0.29"/><rect x="621.9" y="296.5" width="1.2" height="3.5" fill="#a8cc40" opacity="0.33"/><rect x="631.3" y="296.5" width="1.2" height="3.5" fill="#a8cc40" opacity="0.16"/><rect x="633.6" y="298.5" width="1.2" height="1.5" fill="#a8cc40" opacity="0.21"/><rect x="635.9" y="299.2" width="1.2" height="0.8" fill="#a8cc40" opacity="0.30"/><rect x="637.1" y="298.0" width="1.2" height="2.0" fill="#a8cc40" opacity="0.34"/><rect x="639.4" y="297.4" width="1.2" height="2.6" fill="#a8cc40" opacity="0.24"/><rect x="641.8" y="297.9" width="1.2" height="2.1" fill="#a8cc40" opacity="0.38"/><rect x="643.0" y="295.2" width="1.2" height="4.8" fill="#a8cc40" opacity="0.38"/><rect x="644.1" y="299.6" width="1.2" height="0.4" fill="#a8cc40" opacity="0.29"/><rect x="646.5" y="295.2" width="1.2" height="4.8" fill="#a8cc40" opacity="0.18"/><rect x="647.6" y="298.4" width="1.2" height="1.6" fill="#a8cc40" opacity="0.18"/><rect x="651.1" y="299.8" width="1.2" height="0.2" fill="#a8cc40" opacity="0.20"/><rect x="654.7" y="293.7" width="1.2" height="6.3" fill="#a8cc40" opacity="0.36"/><rect x="655.8" y="299.9" width="1.2" height="0.1" fill="#a8cc40" opacity="0.31"/><rect x="660.5" y="298.9" width="1.2" height="1.1" fill="#a8cc40" opacity="0.36"/><rect x="662.8" y="294.9" width="1.2" height="5.1" fill="#a8cc40" opacity="0.18"/><rect x="666.4" y="298.3" width="1.2" height="1.7" fill="#a8cc40" opacity="0.18"/><rect x="669.9" y="292.7" width="1.2" height="7.3" fill="#a8cc40" opacity="0.34"/><rect x="673.4" y="290.7" width="1.2" height="9.3" fill="#a8cc40" opacity="0.37"/><rect x="674.5" y="289.7" width="1.2" height="10.3" fill="#a8cc40" opacity="0.17"/><rect x="676.9" y="289.2" width="1.2" height="10.8" fill="#a8cc40" opacity="0.37"/><rect x="680.4" y="285.4" width="1.2" height="14.6" fill="#a8cc40" opacity="0.35"/><rect x="686.2" y="276.3" width="1.2" height="23.7" fill="#a8cc40" opacity="0.22"/><rect x="688.6" y="272.9" width="1.2" height="24.1" fill="#a8cc40" opacity="0.37"/><rect x="699.1" y="255.7" width="1.2" height="15.2" fill="#a8cc40" opacity="0.28"/><rect x="701.5" y="254.3" width="1.2" height="45.7" fill="#a8cc40" opacity="0.27"/><rect x="707.3" y="250.6" width="1.2" height="47.0" fill="#a8cc40" opacity="0.38"/><rect x="709.6" y="248.4" width="1.2" height="24.4" fill="#a8cc40" opacity="0.26"/><rect x="717.8" y="251.6" width="1.2" height="42.0" fill="#a8cc40" opacity="0.37"/><rect x="721.3" y="250.8" width="1.2" height="49.2" fill="#a8cc40" opacity="0.24"/><rect x="723.7" y="249.9" width="1.2" height="33.4" fill="#a8cc40" opacity="0.25"/><rect x="724.9" y="250.6" width="1.2" height="46.5" fill="#a8cc40" opacity="0.17"/><rect x="727.2" y="247.7" width="1.2" height="30.7" fill="#a8cc40" opacity="0.29"/><rect x="733.0" y="245.9" width="1.2" height="35.9" fill="#a8cc40" opacity="0.30"/><rect x="740.1" y="253.1" width="1.2" height="39.5" fill="#a8cc40" opacity="0.29"/><rect x="742.4" y="248.0" width="1.2" height="34.7" fill="#a8cc40" opacity="0.26"/><rect x="745.9" y="245.8" width="1.2" height="18.0" fill="#a8cc40" opacity="0.24"/><rect x="749.4" y="251.5" width="1.2" height="32.1" fill="#a8cc40" opacity="0.28"/><rect x="751.8" y="245.9" width="1.2" height="43.4" fill="#a8cc40" opacity="0.32"/><rect x="756.4" y="244.4" width="1.2" height="37.7" fill="#a8cc40" opacity="0.31"/><rect x="757.6" y="243.6" width="1.2" height="34.4" fill="#a8cc40" opacity="0.16"/><rect x="761.1" y="246.0" width="1.2" height="21.6" fill="#a8cc40" opacity="0.20"/><rect x="762.3" y="248.1" width="1.2" height="32.7" fill="#a8cc40" opacity="0.33"/><rect x="763.5" y="247.5" width="1.2" height="39.8" fill="#a8cc40" opacity="0.31"/><rect x="767.0" y="247.5" width="1.2" height="43.6" fill="#a8cc40" opacity="0.28"/><rect x="769.3" y="241.5" width="1.2" height="21.5" fill="#a8cc40" opacity="0.36"/><rect x="770.5" y="242.2" width="1.2" height="53.4" fill="#a8cc40" opacity="0.35"/><rect x="772.8" y="240.3" width="1.2" height="45.2" fill="#a8cc40" opacity="0.22"/><rect x="775.2" y="243.8" width="1.2" height="38.7" fill="#a8cc40" opacity="0.35"/><rect x="779.8" y="242.7" width="1.2" height="11.5" fill="#a8cc40" opacity="0.29"/><rect x="783.4" y="235.5" width="1.2" height="49.2" fill="#a8cc40" opacity="0.29"/><rect x="786.9" y="239.6" width="1.2" height="20.9" fill="#a8cc40" opacity="0.27"/><rect x="788.0" y="235.3" width="1.2" height="43.3" fill="#a8cc40" opacity="0.34"/><rect x="793.9" y="235.4" width="1.2" height="39.9" fill="#a8cc40" opacity="0.33"/><rect x="795.1" y="233.7" width="1.2" height="27.1" fill="#a8cc40" opacity="0.17"/><rect x="796.2" y="237.2" width="1.2" height="38.9" fill="#a8cc40" opacity="0.19"/><rect x="798.6" y="236.6" width="1.2" height="17.4" fill="#a8cc40" opacity="0.17"/><rect x="799.7" y="234.0" width="1.2" height="23.5" fill="#a8cc40" opacity="0.37"/><rect x="802.1" y="234.5" width="1.2" height="44.8" fill="#a8cc40" opacity="0.29"/><rect x="803.2" y="235.3" width="1.2" height="57.8" fill="#a8cc40" opacity="0.15"/><rect x="804.4" y="229.7" width="1.2" height="19.9" fill="#a8cc40" opacity="0.26"/><rect x="806.8" y="233.4" width="1.2" height="25.4" fill="#a8cc40" opacity="0.15"/><rect x="809.1" y="228.2" width="1.2" height="15.8" fill="#a8cc40" opacity="0.24"/><rect x="810.3" y="227.6" width="1.2" height="22.5" fill="#a8cc40" opacity="0.29"/><rect x="812.6" y="229.1" width="1.2" height="48.7" fill="#a8cc40" opacity="0.33"/><rect x="813.8" y="231.5" width="1.2" height="49.6" fill="#a8cc40" opacity="0.29"/><rect x="816.1" y="224.6" width="1.2" height="54.3" fill="#a8cc40" opacity="0.30"/><rect x="817.3" y="230.5" width="1.2" height="54.4" fill="#a8cc40" opacity="0.16"/><rect x="819.6" y="226.7" width="1.2" height="51.7" fill="#a8cc40" opacity="0.24"/><rect x="823.1" y="226.0" width="1.2" height="31.3" fill="#a8cc40" opacity="0.40"/><rect x="824.3" y="226.3" width="1.2" height="12.1" fill="#a8cc40" opacity="0.22"/><rect x="825.5" y="221.4" width="1.2" height="36.4" fill="#a8cc40" opacity="0.19"/><rect x="827.8" y="224.0" width="1.2" height="53.1" fill="#a8cc40" opacity="0.18"/><rect x="829.0" y="225.1" width="1.2" height="33.5" fill="#a8cc40" opacity="0.38"/><rect x="830.2" y="221.8" width="1.2" height="57.9" fill="#a8cc40" opacity="0.24"/><rect x="833.7" y="221.0" width="1.2" height="57.1" fill="#a8cc40" opacity="0.18"/><rect x="839.5" y="220.9" width="1.2" height="15.1" fill="#a8cc40" opacity="0.35"/><rect x="841.9" y="218.7" width="1.2" height="30.5" fill="#a8cc40" opacity="0.34"/><rect x="843.0" y="220.7" width="1.2" height="29.2" fill="#a8cc40" opacity="0.35"/><rect x="846.5" y="217.5" width="1.2" height="11.3" fill="#a8cc40" opacity="0.27"/><rect x="847.7" y="219.8" width="1.2" height="43.9" fill="#a8cc40" opacity="0.26"/><rect x="852.4" y="218.8" width="1.2" height="46.4" fill="#a8cc40" opacity="0.30"/><rect x="853.6" y="220.8" width="1.2" height="31.9" fill="#a8cc40" opacity="0.30"/><rect x="855.9" y="213.9" width="1.2" height="56.2" fill="#a8cc40" opacity="0.22"/><rect x="857.1" y="214.8" width="1.2" height="59.7" fill="#a8cc40" opacity="0.33"/><rect x="858.2" y="214.9" width="1.2" height="54.9" fill="#a8cc40" opacity="0.32"/><rect x="860.6" y="216.9" width="1.2" height="57.3" fill="#a8cc40" opacity="0.15"/><rect x="862.9" y="221.6" width="1.2" height="15.2" fill="#a8cc40" opacity="0.39"/><rect x="866.4" y="219.3" width="1.2" height="34.6" fill="#a8cc40" opacity="0.27"/><rect x="867.6" y="217.9" width="1.2" height="50.1" fill="#a8cc40" opacity="0.18"/><rect x="871.1" y="215.8" width="1.2" height="33.0" fill="#a8cc40" opacity="0.31"/><rect x="878.1" y="213.7" width="1.2" height="26.4" fill="#a8cc40" opacity="0.23"/><rect x="879.3" y="217.5" width="1.2" height="11.7" fill="#a8cc40" opacity="0.38"/><rect x="886.3" y="219.5" width="1.2" height="20.3" fill="#a8cc40" opacity="0.29"/><rect x="889.8" y="215.8" width="1.2" height="51.2" fill="#a8cc40" opacity="0.35"/><rect x="892.2" y="213.7" width="1.2" height="15.3" fill="#a8cc40" opacity="0.33"/>
 <rect x="354.0" y="254.0" width="1.3" height="4.2" fill="#3040c0" opacity="0.85"/><rect x="355.1" y="246.3" width="1.3" height="12.0" fill="#2a30a8" opacity="0.85"/><rect x="356.3" y="244.0" width="1.3" height="14.4" fill="#3a48c8" opacity="0.85"/><rect x="357.5" y="241.8" width="1.3" height="16.7" fill="#3a48c8" opacity="0.85"/><rect x="358.7" y="233.6" width="1.3" height="25.1" fill="#40b8d0" opacity="0.85"/><rect x="361.0" y="226.4" width="1.3" height="14.0" fill="#2828a0" opacity="0.85"/><rect x="362.2" y="238.3" width="1.3" height="15.8" fill="#40b8d0" opacity="0.85"/><rect x="363.3" y="227.9" width="1.3" height="25.7" fill="#2828a0" opacity="0.85"/><rect x="364.5" y="236.4" width="1.3" height="22.8" fill="#2828a0" opacity="0.85"/><rect x="365.7" y="237.9" width="1.3" height="21.5" fill="#2828a0" opacity="0.85"/><rect x="366.8" y="241.1" width="1.3" height="8.1" fill="#3030b0" opacity="0.85"/><rect x="369.2" y="237.5" width="1.3" height="22.2" fill="#3a48c8" opacity="0.85"/><rect x="370.4" y="243.5" width="1.3" height="16.3" fill="#40b8d0" opacity="0.85"/><rect x="371.5" y="241.7" width="1.3" height="18.3" fill="#2828a0" opacity="0.85"/><rect x="373.9" y="221.0" width="1.3" height="11.9" fill="#40b8d0" opacity="0.85"/><rect x="376.2" y="213.0" width="1.3" height="38.9" fill="#3040c0" opacity="0.85"/><rect x="378.5" y="207.2" width="1.3" height="30.3" fill="#3040c0" opacity="0.85"/><rect x="379.7" y="218.5" width="1.3" height="16.7" fill="#2828a0" opacity="0.85"/><rect x="380.9" y="224.8" width="1.3" height="8.7" fill="#3030b0" opacity="0.85"/><rect x="384.4" y="238.7" width="1.3" height="13.2" fill="#3a48c8" opacity="0.85"/><rect x="385.6" y="233.8" width="1.3" height="30.0" fill="#2a30a8" opacity="0.85"/><rect x="386.7" y="238.3" width="1.3" height="13.1" fill="#2828a0" opacity="0.85"/><rect x="387.9" y="246.6" width="1.3" height="12.0" fill="#2a30a8" opacity="0.85"/><rect x="389.1" y="249.1" width="1.3" height="15.6" fill="#3040c0" opacity="0.85"/><rect x="390.2" y="256.3" width="1.3" height="8.9" fill="#2828a0" opacity="0.85"/><rect x="391.4" y="253.7" width="1.3" height="12.2" fill="#2828a0" opacity="0.85"/><rect x="393.8" y="260.8" width="1.3" height="6.6" fill="#40b8d0" opacity="0.85"/><rect x="394.9" y="251.0" width="1.3" height="17.2" fill="#2828a0" opacity="0.85"/><rect x="398.4" y="262.5" width="1.3" height="8.0" fill="#3030b0" opacity="0.85"/><rect x="399.6" y="256.6" width="1.3" height="10.2" fill="#3030b0" opacity="0.85"/><rect x="403.1" y="267.6" width="1.3" height="5.9" fill="#3030b0" opacity="0.85"/><rect x="405.5" y="271.8" width="1.3" height="3.3" fill="#3030b0" opacity="0.85"/><rect x="407.8" y="271.1" width="1.3" height="5.4" fill="#3030b0" opacity="0.85"/><rect x="414.8" y="268.0" width="1.3" height="9.5" fill="#40b8d0" opacity="0.85"/><rect x="418.3" y="263.1" width="1.3" height="18.3" fill="#3040c0" opacity="0.85"/><rect x="419.5" y="264.0" width="1.3" height="15.7" fill="#3040c0" opacity="0.85"/><rect x="420.7" y="262.0" width="1.3" height="20.0" fill="#2828a0" opacity="0.85"/><rect x="421.8" y="265.8" width="1.3" height="16.2" fill="#2a30a8" opacity="0.85"/><rect x="423.0" y="259.9" width="1.3" height="22.1" fill="#2828a0" opacity="0.85"/><rect x="424.2" y="258.7" width="1.3" height="23.3" fill="#3030b0" opacity="0.85"/><rect x="425.3" y="251.5" width="1.3" height="25.4" fill="#2a30a8" opacity="0.85"/><rect x="427.7" y="244.6" width="1.3" height="23.6" fill="#2828a0" opacity="0.85"/><rect x="428.9" y="252.1" width="1.3" height="26.0" fill="#3040c0" opacity="0.85"/><rect x="430.0" y="257.2" width="1.3" height="24.8" fill="#3040c0" opacity="0.85"/><rect x="431.2" y="236.1" width="1.3" height="22.0" fill="#3a48c8" opacity="0.85"/><rect x="432.4" y="233.8" width="1.3" height="26.5" fill="#3a48c8" opacity="0.85"/><rect x="433.5" y="227.7" width="1.3" height="33.6" fill="#3030b0" opacity="0.85"/><rect x="435.9" y="211.9" width="1.3" height="38.3" fill="#2a30a8" opacity="0.85"/><rect x="437.0" y="214.6" width="1.3" height="19.7" fill="#3a48c8" opacity="0.85"/><rect x="439.4" y="222.0" width="1.3" height="13.7" fill="#2828a0" opacity="0.85"/><rect x="440.6" y="218.8" width="1.3" height="35.7" fill="#3a48c8" opacity="0.85"/><rect x="442.9" y="202.9" width="1.3" height="11.7" fill="#3040c0" opacity="0.85"/><rect x="444.1" y="209.0" width="1.3" height="12.9" fill="#2a30a8" opacity="0.85"/><rect x="445.2" y="217.3" width="1.3" height="26.9" fill="#3a48c8" opacity="0.85"/><rect x="448.7" y="231.3" width="1.3" height="28.6" fill="#40b8d0" opacity="0.85"/><rect x="449.9" y="229.4" width="1.3" height="14.5" fill="#3a48c8" opacity="0.85"/><rect x="451.1" y="226.0" width="1.3" height="24.3" fill="#40b8d0" opacity="0.85"/><rect x="453.4" y="243.2" width="1.3" height="12.1" fill="#3030b0" opacity="0.85"/><rect x="454.6" y="251.1" width="1.3" height="13.9" fill="#40b8d0" opacity="0.85"/><rect x="455.8" y="246.9" width="1.3" height="28.1" fill="#3040c0" opacity="0.85"/><rect x="458.1" y="253.6" width="1.3" height="30.0" fill="#40b8d0" opacity="0.85"/><rect x="459.3" y="261.0" width="1.3" height="17.4" fill="#3a48c8" opacity="0.85"/><rect x="460.4" y="260.5" width="1.3" height="18.3" fill="#3a48c8" opacity="0.85"/><rect x="461.6" y="261.1" width="1.3" height="19.5" fill="#2a30a8" opacity="0.85"/><rect x="462.8" y="256.3" width="1.3" height="19.5" fill="#3a48c8" opacity="0.85"/><rect x="464.0" y="256.4" width="1.3" height="28.4" fill="#3a48c8" opacity="0.85"/><rect x="466.3" y="273.3" width="1.3" height="8.5" fill="#40b8d0" opacity="0.85"/><rect x="467.5" y="272.0" width="1.3" height="9.0" fill="#40b8d0" opacity="0.85"/><rect x="468.6" y="274.7" width="1.3" height="12.2" fill="#2828a0" opacity="0.85"/><rect x="469.8" y="271.2" width="1.3" height="16.4" fill="#3a48c8" opacity="0.85"/><rect x="472.1" y="275.0" width="1.3" height="13.8" fill="#3040c0" opacity="0.85"/><rect x="473.3" y="276.2" width="1.3" height="13.2" fill="#3040c0" opacity="0.85"/><rect x="475.7" y="284.4" width="1.3" height="6.3" fill="#3a48c8" opacity="0.85"/><rect x="476.8" y="283.8" width="1.3" height="7.5" fill="#3a48c8" opacity="0.85"/><rect x="479.2" y="291.2" width="1.3" height="1.4" fill="#3040c0" opacity="0.85"/><rect x="480.3" y="285.8" width="1.3" height="2.2" fill="#40b8d0" opacity="0.85"/>
 <rect x="247.50" y="424.9" width="1.32" height="26.6" fill="url(#bz)" opacity="0.82"/><rect x="248.67" y="413.0" width="1.32" height="38.5" fill="url(#bz)" opacity="0.82"/><rect x="249.84" y="411.2" width="1.32" height="40.3" fill="url(#bz)" opacity="0.83"/><rect x="251.01" y="425.6" width="1.32" height="25.9" fill="url(#bz)" opacity="0.94"/><rect x="252.18" y="426.5" width="1.32" height="25.0" fill="url(#bz)" opacity="0.82"/><rect x="253.35" y="413.7" width="1.32" height="37.8" fill="url(#bz)" opacity="0.99"/><rect x="254.52" y="422.7" width="1.32" height="28.8" fill="url(#bz)" opacity="0.93"/><rect x="255.69" y="428.8" width="1.32" height="22.7" fill="url(#bz)" opacity="0.83"/><rect x="256.86" y="427.1" width="1.32" height="24.4" fill="url(#bz)" opacity="0.81"/><rect x="258.03" y="430.5" width="1.32" height="21.0" fill="url(#bz)" opacity="0.93"/><rect x="259.20" y="432.1" width="1.32" height="19.4" fill="url(#bz)" opacity="0.96"/><rect x="260.37" y="426.4" width="1.32" height="25.1" fill="url(#bz)" opacity="0.81"/><rect x="261.54" y="418.7" width="1.32" height="32.8" fill="url(#bz)" opacity="0.97"/><rect x="262.71" y="421.5" width="1.32" height="30.0" fill="url(#bz)" opacity="0.98"/><rect x="263.88" y="422.5" width="1.32" height="29.0" fill="url(#bz)" opacity="0.86"/><rect x="265.05" y="415.0" width="1.32" height="36.5" fill="url(#bz)" opacity="0.96"/><rect x="266.22" y="415.4" width="1.32" height="36.1" fill="url(#bz)" opacity="0.85"/><rect x="267.39" y="427.7" width="1.32" height="23.8" fill="url(#bz)" opacity="0.87"/><rect x="268.56" y="417.9" width="1.32" height="33.6" fill="url(#bz)" opacity="0.99"/><rect x="269.73" y="426.0" width="1.32" height="25.5" fill="url(#bz)" opacity="0.96"/><rect x="270.90" y="417.3" width="1.32" height="34.2" fill="url(#bz)" opacity="0.98"/><rect x="272.07" y="419.4" width="1.32" height="32.1" fill="url(#bz)" opacity="0.84"/><rect x="273.24" y="424.2" width="1.32" height="27.3" fill="url(#bz)" opacity="0.88"/><rect x="274.41" y="423.3" width="1.32" height="28.2" fill="url(#bz)" opacity="0.96"/><rect x="275.58" y="421.3" width="1.32" height="30.2" fill="url(#bz)" opacity="1.00"/><rect x="276.75" y="418.6" width="1.32" height="32.9" fill="url(#bz)" opacity="0.96"/><rect x="277.92" y="425.6" width="1.32" height="25.9" fill="url(#bz)" opacity="0.85"/><rect x="279.09" y="431.1" width="1.32" height="20.4" fill="url(#bz)" opacity="0.89"/><rect x="280.26" y="427.0" width="1.32" height="24.5" fill="url(#bz)" opacity="0.81"/><rect x="281.43" y="424.7" width="1.32" height="26.8" fill="url(#bz)" opacity="0.99"/><rect x="282.60" y="431.4" width="1.32" height="20.1" fill="url(#bz)" opacity="0.83"/><rect x="283.77" y="420.7" width="1.32" height="30.8" fill="url(#bz)" opacity="0.87"/><rect x="284.94" y="424.8" width="1.32" height="26.7" fill="url(#bz)" opacity="0.97"/><rect x="286.11" y="413.4" width="1.32" height="38.1" fill="url(#bz)" opacity="0.99"/><rect x="287.28" y="424.8" width="1.32" height="26.7" fill="url(#bz)" opacity="0.95"/><rect x="288.45" y="415.4" width="1.32" height="36.1" fill="url(#bz)" opacity="0.94"/><rect x="289.62" y="425.4" width="1.32" height="26.1" fill="url(#bz)" opacity="0.84"/><rect x="290.79" y="422.1" width="1.32" height="29.4" fill="url(#bz)" opacity="0.82"/><rect x="291.96" y="417.2" width="1.32" height="34.3" fill="url(#bz)" opacity="0.93"/><rect x="293.13" y="417.5" width="1.32" height="34.0" fill="url(#bz)" opacity="0.94"/><rect x="294.30" y="423.0" width="1.32" height="28.5" fill="url(#bz)" opacity="0.83"/><rect x="295.47" y="420.6" width="1.32" height="30.9" fill="url(#bz)" opacity="0.82"/><rect x="296.64" y="410.4" width="1.32" height="41.1" fill="url(#bz)" opacity="0.93"/><rect x="297.81" y="426.4" width="1.32" height="25.1" fill="url(#bz)" opacity="1.00"/><rect x="298.98" y="421.4" width="1.32" height="30.1" fill="url(#bz)" opacity="0.98"/><rect x="300.15" y="434.0" width="1.32" height="17.5" fill="url(#bz)" opacity="0.83"/><rect x="301.32" y="425.9" width="1.32" height="25.6" fill="url(#bz)" opacity="0.98"/><rect x="302.49" y="420.1" width="1.32" height="31.4" fill="url(#bz)" opacity="0.82"/><rect x="303.66" y="417.2" width="1.32" height="34.3" fill="url(#bz)" opacity="0.84"/><rect x="304.83" y="421.8" width="1.32" height="29.7" fill="url(#bz)" opacity="0.95"/><rect x="306.00" y="418.9" width="1.32" height="32.6" fill="url(#bz)" opacity="0.97"/><rect x="307.17" y="424.1" width="1.32" height="27.4" fill="url(#bz)" opacity="0.90"/><rect x="308.34" y="425.0" width="1.32" height="26.5" fill="url(#bz)" opacity="0.84"/><rect x="309.51" y="423.0" width="1.32" height="28.5" fill="url(#bz)" opacity="0.92"/><rect x="310.68" y="414.4" width="1.32" height="37.1" fill="url(#bz)" opacity="0.96"/><rect x="311.85" y="421.6" width="1.32" height="29.9" fill="url(#bz)" opacity="0.95"/><rect x="313.02" y="432.1" width="1.32" height="19.4" fill="url(#bz)" opacity="0.91"/><rect x="314.19" y="426.0" width="1.32" height="25.5" fill="url(#bz)" opacity="0.96"/><rect x="315.36" y="415.5" width="1.32" height="36.0" fill="url(#bz)" opacity="0.92"/><rect x="316.53" y="414.3" width="1.32" height="37.2" fill="url(#bz)" opacity="0.90"/><rect x="317.70" y="423.5" width="1.32" height="28.0" fill="url(#bz)" opacity="0.97"/><rect x="318.87" y="430.4" width="1.32" height="21.1" fill="url(#bz)" opacity="0.88"/><rect x="320.04" y="414.5" width="1.32" height="37.0" fill="url(#bz)" opacity="0.88"/><rect x="321.21" y="417.1" width="1.32" height="34.4" fill="url(#bz)" opacity="0.89"/><rect x="322.38" y="420.5" width="1.32" height="31.0" fill="url(#bz)" opacity="0.98"/><rect x="323.55" y="426.0" width="1.32" height="25.5" fill="url(#bz)" opacity="0.99"/><rect x="324.72" y="414.0" width="1.32" height="37.5" fill="url(#bz)" opacity="0.93"/><rect x="325.89" y="408.3" width="1.32" height="43.2" fill="url(#bz)" opacity="0.96"/><rect x="327.06" y="425.0" width="1.32" height="26.5" fill="url(#bz)" opacity="0.96"/><rect x="328.23" y="426.0" width="1.32" height="25.5" fill="url(#bz)" opacity="0.85"/><rect x="329.40" y="424.1" width="1.32" height="27.4" fill="url(#bz)" opacity="0.98"/><rect x="330.57" y="419.7" width="1.32" height="31.8" fill="url(#bz)" opacity="0.86"/><rect x="331.74" y="424.3" width="1.32" height="27.2" fill="url(#bz)" opacity="0.90"/><rect x="332.91" y="426.9" width="1.32" height="24.6" fill="url(#bz)" opacity="0.88"/><rect x="334.08" y="426.9" width="1.32" height="24.6" fill="url(#bz)" opacity="0.92"/><rect x="335.25" y="418.9" width="1.32" height="32.6" fill="url(#bz)" opacity="0.89"/><rect x="336.42" y="426.5" width="1.32" height="25.0" fill="url(#bz)" opacity="0.92"/><rect x="337.59" y="419.6" width="1.32" height="31.9" fill="url(#bz)" opacity="1.00"/><rect x="338.76" y="423.0" width="1.32" height="28.5" fill="url(#bz)" opacity="0.89"/><rect x="339.93" y="427.8" width="1.32" height="23.7" fill="url(#bz)" opacity="0.95"/><rect x="341.10" y="427.3" width="1.32" height="24.2" fill="url(#bz)" opacity="0.97"/><rect x="342.27" y="416.9" width="1.32" height="34.6" fill="url(#bz)" opacity="0.95"/><rect x="343.44" y="409.5" width="1.32" height="42.0" fill="url(#bz)" opacity="0.80"/><rect x="344.61" y="420.0" width="1.32" height="31.5" fill="url(#bz)" opacity="0.91"/><rect x="345.78" y="422.0" width="1.32" height="29.5" fill="url(#bz)" opacity="0.89"/><rect x="346.95" y="420.4" width="1.32" height="31.1" fill="url(#bz)" opacity="0.96"/><rect x="348.12" y="423.3" width="1.32" height="28.2" fill="url(#bz)" opacity="0.89"/><rect x="349.29" y="423.1" width="1.32" height="28.4" fill="url(#bz)" opacity="0.86"/><rect x="350.46" y="423.9" width="1.32" height="27.6" fill="url(#bz)" opacity="0.99"/><rect x="351.63" y="431.2" width="1.32" height="20.3" fill="url(#bz)" opacity="0.98"/><rect x="352.80" y="426.9" width="1.32" height="24.6" fill="url(#bz)" opacity="1.00"/><rect x="353.97" y="420.8" width="1.32" height="30.7" fill="url(#bz)" opacity="0.99"/><rect x="355.14" y="421.1" width="1.32" height="30.4" fill="url(#bz)" opacity="0.88"/><rect x="356.31" y="419.6" width="1.32" height="31.9" fill="url(#bz)" opacity="1.00"/><rect x="357.48" y="425.4" width="1.32" height="26.1" fill="url(#bz)" opacity="1.00"/><rect x="358.65" y="422.6" width="1.32" height="28.9" fill="url(#bz)" opacity="0.94"/><rect x="359.82" y="424.8" width="1.32" height="26.7" fill="url(#bz)" opacity="0.98"/><rect x="360.99" y="409.8" width="1.32" height="41.7" fill="url(#bz)" opacity="0.92"/><rect x="362.16" y="424.9" width="1.32" height="26.6" fill="url(#bz)" opacity="0.96"/><rect x="363.33" y="428.6" width="1.32" height="22.9" fill="url(#bz)" opacity="0.84"/><rect x="364.50" y="419.4" width="1.32" height="32.1" fill="url(#bz)" opacity="1.00"/><rect x="365.67" y="418.3" width="1.32" height="33.2" fill="url(#bz)" opacity="0.90"/><rect x="366.84" y="422.6" width="1.32" height="28.9" fill="url(#bz)" opacity="0.96"/><rect x="368.01" y="416.1" width="1.32" height="35.4" fill="url(#bz)" opacity="0.82"/><rect x="369.18" y="420.4" width="1.32" height="31.1" fill="url(#bz)" opacity="0.87"/><rect x="370.35" y="414.0" width="1.32" height="37.5" fill="url(#bz)" opacity="0.92"/><rect x="371.52" y="418.7" width="1.32" height="32.8" fill="url(#bz)" opacity="0.98"/><rect x="372.69" y="422.8" width="1.32" height="28.7" fill="url(#bz)" opacity="0.90"/><rect x="373.86" y="422.1" width="1.32" height="29.4" fill="url(#bz)" opacity="0.94"/><rect x="375.03" y="417.0" width="1.32" height="34.5" fill="url(#bz)" opacity="0.84"/><rect x="376.20" y="421.4" width="1.32" height="30.1" fill="url(#bz)" opacity="0.91"/><rect x="377.37" y="427.4" width="1.32" height="24.1" fill="url(#bz)" opacity="0.87"/><rect x="378.54" y="413.7" width="1.32" height="37.8" fill="url(#bz)" opacity="0.87"/><rect x="379.71" y="426.3" width="1.32" height="25.2" fill="url(#bz)" opacity="0.97"/><rect x="380.88" y="413.9" width="1.32" height="37.6" fill="url(#bz)" opacity="0.94"/><rect x="382.05" y="421.4" width="1.32" height="30.1" fill="url(#bz)" opacity="0.83"/><rect x="383.22" y="424.9" width="1.32" height="26.6" fill="url(#bz)" opacity="0.98"/><rect x="384.39" y="416.7" width="1.32" height="34.8" fill="url(#bz)" opacity="0.91"/><rect x="385.56" y="434.9" width="1.32" height="16.6" fill="url(#bz)" opacity="0.86"/><rect x="386.73" y="410.6" width="1.32" height="40.9" fill="url(#bz)" opacity="0.87"/><rect x="387.90" y="425.3" width="1.32" height="26.2" fill="url(#bz)" opacity="0.94"/><rect x="389.07" y="424.3" width="1.32" height="27.2" fill="url(#bz)" opacity="0.81"/><rect x="390.24" y="418.3" width="1.32" height="33.2" fill="url(#bz)" opacity="0.88"/><rect x="391.41" y="425.1" width="1.32" height="26.4" fill="url(#bz)" opacity="0.93"/><rect x="392.58" y="434.7" width="1.32" height="16.8" fill="url(#bz)" opacity="0.81"/><rect x="393.75" y="424.0" width="1.32" height="27.5" fill="url(#bz)" opacity="0.93"/><rect x="394.92" y="426.0" width="1.32" height="25.5" fill="url(#bz)" opacity="0.89"/><rect x="396.09" y="424.9" width="1.32" height="26.6" fill="url(#bz)" opacity="0.96"/><rect x="397.26" y="417.5" width="1.32" height="34.0" fill="url(#bz)" opacity="0.82"/><rect x="398.43" y="427.7" width="1.32" height="23.8" fill="url(#bz)" opacity="0.82"/><rect x="399.60" y="435.7" width="1.32" height="15.8" fill="url(#bz)" opacity="0.95"/><rect x="400.77" y="424.6" width="1.32" height="26.9" fill="url(#bz)" opacity="0.88"/><rect x="401.94" y="427.1" width="1.32" height="24.4" fill="url(#bz)" opacity="0.95"/><rect x="403.11" y="408.5" width="1.32" height="43.0" fill="url(#bz)" opacity="0.89"/><rect x="404.28" y="408.3" width="1.32" height="43.2" fill="url(#bz)" opacity="0.96"/><rect x="405.45" y="412.4" width="1.32" height="39.1" fill="url(#bz)" opacity="0.88"/><rect x="406.62" y="424.0" width="1.32" height="27.5" fill="url(#bz)" opacity="0.85"/><rect x="407.79" y="422.5" width="1.32" height="29.0" fill="url(#bz)" opacity="0.83"/><rect x="408.96" y="428.4" width="1.32" height="23.1" fill="url(#bz)" opacity="0.83"/><rect x="410.13" y="416.7" width="1.32" height="34.8" fill="url(#bz)" opacity="0.82"/><rect x="411.30" y="427.1" width="1.32" height="24.4" fill="url(#bz)" opacity="0.84"/><rect x="412.47" y="422.7" width="1.32" height="28.8" fill="url(#bz)" opacity="0.89"/><rect x="413.64" y="425.8" width="1.32" height="25.7" fill="url(#bz)" opacity="0.95"/><rect x="414.81" y="429.5" width="1.32" height="22.0" fill="url(#bz)" opacity="0.84"/><rect x="415.98" y="428.7" width="1.32" height="22.8" fill="url(#bz)" opacity="0.99"/><rect x="417.15" y="411.6" width="1.32" height="39.9" fill="url(#bz)" opacity="0.97"/><rect x="418.32" y="427.7" width="1.32" height="23.8" fill="url(#bz)" opacity="0.83"/><rect x="419.49" y="429.0" width="1.32" height="22.5" fill="url(#bz)" opacity="0.84"/><rect x="420.66" y="417.8" width="1.32" height="33.7" fill="url(#bz)" opacity="0.87"/><rect x="421.83" y="431.3" width="1.32" height="20.2" fill="url(#bz)" opacity="0.96"/><rect x="423.00" y="426.7" width="1.32" height="24.8" fill="url(#bz)" opacity="0.99"/><rect x="424.17" y="423.2" width="1.32" height="28.3" fill="url(#bz)" opacity="0.83"/><rect x="425.34" y="424.0" width="1.32" height="27.5" fill="url(#bz)" opacity="0.84"/><rect x="426.51" y="434.6" width="1.32" height="16.9" fill="url(#bz)" opacity="0.96"/><rect x="427.68" y="425.2" width="1.32" height="26.3" fill="url(#bz)" opacity="0.87"/><rect x="428.85" y="427.1" width="1.32" height="24.4" fill="url(#bz)" opacity="0.91"/><rect x="430.02" y="428.6" width="1.32" height="22.9" fill="url(#bz)" opacity="0.99"/><rect x="431.19" y="434.0" width="1.32" height="17.5" fill="url(#bz)" opacity="0.92"/><rect x="432.36" y="402.4" width="1.32" height="49.1" fill="url(#bz)" opacity="0.92"/><rect x="433.53" y="422.5" width="1.32" height="29.0" fill="url(#bz)" opacity="0.98"/><rect x="434.70" y="409.4" width="1.32" height="42.1" fill="url(#bz)" opacity="0.87"/><rect x="435.87" y="408.3" width="1.32" height="43.2" fill="url(#bz)" opacity="0.91"/><rect x="437.04" y="426.5" width="1.32" height="25.0" fill="url(#bz)" opacity="0.85"/><rect x="438.21" y="429.5" width="1.32" height="22.0" fill="url(#bz)" opacity="0.82"/><rect x="439.38" y="428.9" width="1.32" height="22.6" fill="url(#bz)" opacity="0.94"/><rect x="440.55" y="436.5" width="1.32" height="15.0" fill="url(#bz)" opacity="0.82"/><rect x="441.72" y="435.1" width="1.32" height="16.4" fill="url(#bz)" opacity="0.83"/><rect x="442.89" y="403.5" width="1.32" height="48.0" fill="url(#bz)" opacity="0.81"/><rect x="444.06" y="413.4" width="1.32" height="38.1" fill="url(#bz)" opacity="0.94"/><rect x="445.23" y="414.7" width="1.32" height="36.8" fill="url(#bz)" opacity="0.83"/><rect x="446.40" y="420.7" width="1.32" height="30.8" fill="url(#bz)" opacity="0.95"/><rect x="447.57" y="426.2" width="1.32" height="25.3" fill="url(#bz)" opacity="0.95"/><rect x="448.74" y="422.7" width="1.32" height="28.8" fill="url(#bz)" opacity="0.81"/><rect x="449.91" y="401.2" width="1.32" height="50.3" fill="url(#bz)" opacity="0.94"/><rect x="451.08" y="422.3" width="1.32" height="29.2" fill="url(#bz)" opacity="0.82"/><rect x="452.25" y="421.1" width="1.32" height="30.4" fill="url(#bz)" opacity="0.88"/><rect x="453.42" y="423.6" width="1.32" height="27.9" fill="url(#bz)" opacity="0.99"/><rect x="454.59" y="424.3" width="1.32" height="27.2" fill="url(#bz)" opacity="0.96"/><rect x="455.76" y="418.6" width="1.32" height="32.9" fill="url(#bz)" opacity="0.83"/><rect x="456.93" y="417.0" width="1.32" height="34.5" fill="url(#bz)" opacity="0.82"/><rect x="458.10" y="424.4" width="1.32" height="27.1" fill="url(#bz)" opacity="0.87"/><rect x="459.27" y="431.6" width="1.32" height="19.9" fill="url(#bz)" opacity="0.80"/><rect x="460.44" y="425.2" width="1.32" height="26.3" fill="url(#bz)" opacity="0.85"/><rect x="461.61" y="412.7" width="1.32" height="38.8" fill="url(#bz)" opacity="0.81"/><rect x="462.78" y="422.8" width="1.32" height="28.7" fill="url(#bz)" opacity="0.93"/><rect x="463.95" y="432.0" width="1.32" height="19.5" fill="url(#bz)" opacity="0.95"/><rect x="465.12" y="422.2" width="1.32" height="29.3" fill="url(#bz)" opacity="0.93"/><rect x="466.29" y="422.7" width="1.32" height="28.8" fill="url(#bz)" opacity="0.90"/><rect x="467.46" y="423.7" width="1.32" height="27.8" fill="url(#bz)" opacity="0.97"/><rect x="468.63" y="425.9" width="1.32" height="25.6" fill="url(#bz)" opacity="0.86"/><rect x="469.80" y="426.6" width="1.32" height="24.9" fill="url(#bz)" opacity="0.99"/><rect x="470.97" y="427.9" width="1.32" height="23.6" fill="url(#bz)" opacity="0.87"/><rect x="472.14" y="430.9" width="1.32" height="20.6" fill="url(#bz)" opacity="0.97"/><rect x="473.31" y="417.0" width="1.32" height="34.5" fill="url(#bz)" opacity="0.94"/><rect x="474.48" y="426.1" width="1.32" height="25.4" fill="url(#bz)" opacity="0.93"/><rect x="475.65" y="433.0" width="1.32" height="18.5" fill="url(#bz)" opacity="0.87"/><rect x="476.82" y="429.4" width="1.32" height="22.1" fill="url(#bz)" opacity="0.98"/><rect x="477.99" y="418.8" width="1.32" height="32.7" fill="url(#bz)" opacity="0.81"/><rect x="479.16" y="429.2" width="1.32" height="22.3" fill="url(#bz)" opacity="0.92"/><rect x="480.33" y="399.6" width="1.32" height="51.9" fill="url(#bz)" opacity="0.94"/><rect x="481.50" y="419.2" width="1.32" height="32.3" fill="url(#bz)" opacity="0.82"/><rect x="482.67" y="419.5" width="1.32" height="32.0" fill="url(#bz)" opacity="0.91"/><rect x="483.84" y="427.9" width="1.32" height="23.6" fill="url(#bz)" opacity="0.95"/><rect x="485.01" y="421.9" width="1.32" height="29.6" fill="url(#bz)" opacity="0.89"/><rect x="486.18" y="422.8" width="1.32" height="28.7" fill="url(#bz)" opacity="0.93"/><rect x="487.35" y="401.9" width="1.32" height="49.6" fill="url(#bz)" opacity="0.82"/><rect x="488.52" y="436.5" width="1.32" height="15.0" fill="url(#bz)" opacity="0.84"/><rect x="489.69" y="410.0" width="1.32" height="41.5" fill="url(#bz)" opacity="0.98"/><rect x="490.86" y="427.1" width="1.32" height="24.4" fill="url(#bz)" opacity="0.90"/><rect x="492.03" y="426.7" width="1.32" height="24.8" fill="url(#bz)" opacity="0.98"/><rect x="493.20" y="419.7" width="1.32" height="31.8" fill="url(#bz)" opacity="0.97"/><rect x="494.37" y="423.8" width="1.32" height="27.7" fill="url(#bz)" opacity="0.85"/><rect x="495.54" y="422.6" width="1.32" height="28.9" fill="url(#bz)" opacity="0.86"/><rect x="496.71" y="411.9" width="1.32" height="39.6" fill="url(#bz)" opacity="0.97"/><rect x="497.88" y="431.3" width="1.32" height="20.2" fill="url(#bz)" opacity="0.90"/><rect x="499.05" y="429.0" width="1.32" height="22.5" fill="url(#bz)" opacity="0.89"/><rect x="500.22" y="431.4" width="1.32" height="20.1" fill="url(#bz)" opacity="0.96"/><rect x="501.39" y="429.1" width="1.32" height="22.4" fill="url(#bz)" opacity="0.86"/><rect x="502.56" y="434.1" width="1.32" height="17.4" fill="url(#bz)" opacity="0.83"/><rect x="503.73" y="427.5" width="1.32" height="24.0" fill="url(#bz)" opacity="0.82"/><rect x="504.90" y="426.7" width="1.32" height="24.8" fill="url(#bz)" opacity="0.81"/><rect x="506.07" y="421.4" width="1.32" height="30.1" fill="url(#bz)" opacity="0.82"/><rect x="507.24" y="414.5" width="1.32" height="37.0" fill="url(#bz)" opacity="0.83"/><rect x="508.41" y="415.7" width="1.32" height="35.8" fill="url(#bz)" opacity="0.90"/><rect x="509.58" y="419.1" width="1.32" height="32.4" fill="url(#bz)" opacity="0.84"/><rect x="510.75" y="431.0" width="1.32" height="20.5" fill="url(#bz)" opacity="0.84"/><rect x="511.92" y="419.6" width="1.32" height="31.9" fill="url(#bz)" opacity="0.91"/><rect x="513.09" y="418.9" width="1.32" height="32.6" fill="url(#bz)" opacity="1.00"/><rect x="514.26" y="423.3" width="1.32" height="28.2" fill="url(#bz)" opacity="0.88"/><rect x="515.43" y="405.2" width="1.32" height="46.3" fill="url(#bz)" opacity="0.80"/><rect x="516.60" y="428.4" width="1.32" height="23.1" fill="url(#bz)" opacity="0.92"/><rect x="517.77" y="429.8" width="1.32" height="21.7" fill="url(#bz)" opacity="0.81"/><rect x="518.94" y="417.7" width="1.32" height="33.8" fill="url(#bz)" opacity="0.93"/><rect x="520.11" y="424.8" width="1.32" height="26.7" fill="url(#bz)" opacity="0.92"/><rect x="521.28" y="403.3" width="1.32" height="48.2" fill="url(#bz)" opacity="0.95"/><rect x="522.45" y="419.3" width="1.32" height="32.2" fill="url(#bz)" opacity="0.93"/><rect x="523.62" y="420.1" width="1.32" height="31.4" fill="url(#bz)" opacity="0.89"/><rect x="524.79" y="412.8" width="1.32" height="38.7" fill="url(#bz)" opacity="0.99"/><rect x="525.96" y="417.3" width="1.32" height="34.2" fill="url(#bz)" opacity="0.96"/><rect x="527.13" y="426.0" width="1.32" height="25.5" fill="url(#bz)" opacity="0.97"/><rect x="528.30" y="417.2" width="1.32" height="34.3" fill="url(#bz)" opacity="0.85"/><rect x="529.47" y="422.9" width="1.32" height="28.6" fill="url(#bz)" opacity="1.00"/><rect x="530.64" y="425.6" width="1.32" height="25.9" fill="url(#bz)" opacity="0.90"/><rect x="531.81" y="425.2" width="1.32" height="26.3" fill="url(#bz)" opacity="0.87"/><rect x="532.98" y="422.2" width="1.32" height="29.3" fill="url(#bz)" opacity="0.80"/><rect x="534.15" y="424.2" width="1.32" height="27.3" fill="url(#bz)" opacity="0.85"/><rect x="535.32" y="409.1" width="1.32" height="42.4" fill="url(#bz)" opacity="0.97"/><rect x="536.49" y="424.0" width="1.32" height="27.5" fill="url(#bz)" opacity="0.87"/><rect x="537.66" y="426.1" width="1.32" height="25.4" fill="url(#bz)" opacity="0.88"/><rect x="538.83" y="422.0" width="1.32" height="29.5" fill="url(#bz)" opacity="0.98"/><rect x="540.00" y="428.9" width="1.32" height="22.6" fill="url(#bz)" opacity="0.87"/><rect x="541.17" y="414.2" width="1.32" height="37.3" fill="url(#bz)" opacity="0.81"/><rect x="542.34" y="425.2" width="1.32" height="26.3" fill="url(#bz)" opacity="0.89"/><rect x="543.51" y="419.6" width="1.32" height="31.9" fill="url(#bz)" opacity="0.96"/><rect x="544.68" y="427.1" width="1.32" height="24.4" fill="url(#bz)" opacity="0.81"/><rect x="545.85" y="418.6" width="1.32" height="32.9" fill="url(#bz)" opacity="0.82"/><rect x="547.02" y="410.5" width="1.32" height="41.0" fill="url(#bz)" opacity="0.95"/><rect x="548.19" y="423.3" width="1.32" height="28.2" fill="url(#bz)" opacity="0.88"/><rect x="549.36" y="416.5" width="1.32" height="35.0" fill="url(#bz)" opacity="0.90"/><rect x="550.53" y="423.5" width="1.32" height="28.0" fill="url(#bz)" opacity="0.91"/><rect x="551.70" y="428.5" width="1.32" height="23.0" fill="url(#bz)" opacity="0.96"/><rect x="552.87" y="413.9" width="1.32" height="37.6" fill="url(#bz)" opacity="0.87"/><rect x="554.04" y="428.4" width="1.32" height="23.1" fill="url(#bz)" opacity="0.84"/><rect x="555.21" y="423.5" width="1.32" height="28.0" fill="url(#bz)" opacity="0.91"/><rect x="556.38" y="424.4" width="1.32" height="27.1" fill="url(#bz)" opacity="0.86"/><rect x="557.55" y="427.2" width="1.32" height="24.3" fill="url(#bz)" opacity="0.99"/><rect x="558.72" y="418.7" width="1.32" height="32.8" fill="url(#bz)" opacity="0.81"/><rect x="559.89" y="415.9" width="1.32" height="35.6" fill="url(#bz)" opacity="0.91"/><rect x="561.06" y="427.9" width="1.32" height="23.6" fill="url(#bz)" opacity="0.93"/><rect x="562.23" y="412.2" width="1.32" height="39.3" fill="url(#bz)" opacity="0.84"/><rect x="563.40" y="434.3" width="1.32" height="17.2" fill="url(#bz)" opacity="0.93"/><rect x="564.57" y="418.0" width="1.32" height="33.5" fill="url(#bz)" opacity="0.86"/><rect x="565.74" y="412.7" width="1.32" height="38.8" fill="url(#bz)" opacity="0.86"/><rect x="566.91" y="430.2" width="1.32" height="21.3" fill="url(#bz)" opacity="0.88"/><rect x="568.08" y="432.3" width="1.32" height="19.2" fill="url(#bz)" opacity="0.82"/><rect x="569.25" y="416.9" width="1.32" height="34.6" fill="url(#bz)" opacity="1.00"/><rect x="570.42" y="431.2" width="1.32" height="20.3" fill="url(#bz)" opacity="0.86"/><rect x="571.59" y="429.8" width="1.32" height="21.7" fill="url(#bz)" opacity="0.92"/><rect x="572.76" y="428.2" width="1.32" height="23.3" fill="url(#bz)" opacity="0.97"/><rect x="573.93" y="429.5" width="1.32" height="22.0" fill="url(#bz)" opacity="0.93"/><rect x="575.10" y="424.1" width="1.32" height="27.4" fill="url(#bz)" opacity="0.84"/><rect x="576.27" y="424.4" width="1.32" height="27.1" fill="url(#bz)" opacity="0.82"/><rect x="577.44" y="416.2" width="1.32" height="35.3" fill="url(#bz)" opacity="0.82"/><rect x="578.61" y="420.9" width="1.32" height="30.6" fill="url(#bz)" opacity="0.93"/><rect x="579.78" y="422.8" width="1.32" height="28.7" fill="url(#bz)" opacity="0.97"/><rect x="580.95" y="429.3" width="1.32" height="22.2" fill="url(#bz)" opacity="0.82"/><rect x="582.12" y="428.9" width="1.32" height="22.6" fill="url(#bz)" opacity="0.84"/><rect x="583.29" y="429.1" width="1.32" height="22.4" fill="url(#bz)" opacity="0.80"/><rect x="584.46" y="420.7" width="1.32" height="30.8" fill="url(#bz)" opacity="0.96"/><rect x="585.63" y="417.9" width="1.32" height="33.6" fill="url(#bz)" opacity="0.90"/><rect x="586.80" y="416.7" width="1.32" height="34.8" fill="url(#bz)" opacity="0.96"/><rect x="587.97" y="428.5" width="1.32" height="23.0" fill="url(#bz)" opacity="1.00"/><rect x="589.14" y="426.4" width="1.32" height="25.1" fill="url(#bz)" opacity="0.96"/><rect x="590.31" y="413.0" width="1.32" height="38.5" fill="url(#bz)" opacity="0.95"/><rect x="591.48" y="427.7" width="1.32" height="23.8" fill="url(#bz)" opacity="0.83"/><rect x="592.65" y="433.9" width="1.32" height="17.6" fill="url(#bz)" opacity="0.90"/><rect x="593.82" y="424.8" width="1.32" height="26.7" fill="url(#bz)" opacity="0.95"/><rect x="594.99" y="418.2" width="1.32" height="33.3" fill="url(#bz)" opacity="0.82"/><rect x="596.16" y="418.2" width="1.32" height="33.3" fill="url(#bz)" opacity="0.83"/><rect x="597.33" y="407.0" width="1.32" height="44.5" fill="url(#bz)" opacity="0.99"/><rect x="598.50" y="417.7" width="1.32" height="33.8" fill="url(#bz)" opacity="0.97"/><rect x="599.67" y="420.5" width="1.32" height="31.0" fill="url(#bz)" opacity="0.96"/><rect x="600.84" y="422.1" width="1.32" height="29.4" fill="url(#bz)" opacity="0.99"/><rect x="602.01" y="425.9" width="1.32" height="25.6" fill="url(#bz)" opacity="0.85"/><rect x="603.18" y="421.3" width="1.32" height="30.2" fill="url(#bz)" opacity="0.94"/><rect x="604.35" y="418.2" width="1.32" height="33.3" fill="url(#bz)" opacity="0.94"/><rect x="605.52" y="430.5" width="1.32" height="21.0" fill="url(#bz)" opacity="0.88"/><rect x="606.69" y="417.1" width="1.32" height="34.4" fill="url(#bz)" opacity="0.80"/><rect x="607.86" y="419.7" width="1.32" height="31.8" fill="url(#bz)" opacity="0.92"/><rect x="609.03" y="428.9" width="1.32" height="22.6" fill="url(#bz)" opacity="0.82"/><rect x="610.20" y="419.2" width="1.32" height="32.3" fill="url(#bz)" opacity="0.82"/><rect x="611.37" y="426.0" width="1.32" height="25.5" fill="url(#bz)" opacity="0.99"/><rect x="612.54" y="427.4" width="1.32" height="24.1" fill="url(#bz)" opacity="0.88"/><rect x="613.71" y="417.7" width="1.32" height="33.8" fill="url(#bz)" opacity="0.80"/><rect x="614.88" y="433.7" width="1.32" height="17.8" fill="url(#bz)" opacity="0.87"/><rect x="616.05" y="416.8" width="1.32" height="34.7" fill="url(#bz)" opacity="0.93"/><rect x="617.22" y="433.0" width="1.32" height="18.5" fill="url(#bz)" opacity="0.93"/><rect x="618.39" y="417.6" width="1.32" height="33.9" fill="url(#bz)" opacity="0.90"/><rect x="619.56" y="424.0" width="1.32" height="27.5" fill="url(#bz)" opacity="0.91"/><rect x="620.73" y="425.0" width="1.32" height="26.5" fill="url(#bz)" opacity="0.83"/><rect x="621.90" y="423.7" width="1.32" height="27.8" fill="url(#bz)" opacity="0.83"/><rect x="623.07" y="424.9" width="1.32" height="26.6" fill="url(#bz)" opacity="0.95"/><rect x="624.24" y="417.8" width="1.32" height="33.7" fill="url(#bz)" opacity="0.96"/><rect x="625.41" y="432.7" width="1.32" height="18.8" fill="url(#bz)" opacity="0.86"/><rect x="626.58" y="423.2" width="1.32" height="28.3" fill="url(#bz)" opacity="0.83"/><rect x="627.75" y="418.8" width="1.32" height="32.7" fill="url(#bz)" opacity="0.88"/><rect x="628.92" y="428.8" width="1.32" height="22.7" fill="url(#bz)" opacity="0.84"/><rect x="630.09" y="422.8" width="1.32" height="28.7" fill="url(#bz)" opacity="0.88"/><rect x="631.26" y="425.9" width="1.32" height="25.6" fill="url(#bz)" opacity="0.89"/><rect x="632.43" y="419.3" width="1.32" height="32.2" fill="url(#bz)" opacity="0.83"/><rect x="633.60" y="418.4" width="1.32" height="33.1" fill="url(#bz)" opacity="0.91"/><rect x="634.77" y="424.2" width="1.32" height="27.3" fill="url(#bz)" opacity="0.91"/><rect x="635.94" y="415.6" width="1.32" height="35.9" fill="url(#bz)" opacity="0.91"/><rect x="637.11" y="430.7" width="1.32" height="20.8" fill="url(#bz)" opacity="0.94"/><rect x="638.28" y="427.7" width="1.32" height="23.8" fill="url(#bz)" opacity="0.99"/><rect x="639.45" y="425.8" width="1.32" height="25.7" fill="url(#bz)" opacity="0.95"/><rect x="640.62" y="405.5" width="1.32" height="46.0" fill="url(#bz)" opacity="0.91"/><rect x="641.79" y="424.0" width="1.32" height="27.5" fill="url(#bz)" opacity="0.90"/><rect x="642.96" y="426.6" width="1.32" height="24.9" fill="url(#bz)" opacity="0.92"/><rect x="644.13" y="414.9" width="1.32" height="36.6" fill="url(#bz)" opacity="0.95"/><rect x="645.30" y="415.7" width="1.32" height="35.8" fill="url(#bz)" opacity="0.93"/><rect x="646.47" y="430.3" width="1.32" height="21.2" fill="url(#bz)" opacity="0.92"/><rect x="647.64" y="430.7" width="1.32" height="20.8" fill="url(#bz)" opacity="0.84"/><rect x="648.81" y="426.5" width="1.32" height="25.0" fill="url(#bz)" opacity="0.81"/><rect x="649.98" y="420.5" width="1.32" height="31.0" fill="url(#bz)" opacity="0.80"/><rect x="651.15" y="424.7" width="1.32" height="26.8" fill="url(#bz)" opacity="0.91"/><rect x="652.32" y="412.6" width="1.32" height="38.9" fill="url(#bz)" opacity="0.82"/><rect x="653.49" y="421.8" width="1.32" height="29.7" fill="url(#bz)" opacity="0.84"/><rect x="654.66" y="423.5" width="1.32" height="28.0" fill="url(#bz)" opacity="0.91"/><rect x="655.83" y="423.4" width="1.32" height="28.1" fill="url(#bz)" opacity="0.94"/><rect x="657.00" y="411.3" width="1.32" height="40.2" fill="url(#bz)" opacity="1.00"/><rect x="658.17" y="429.3" width="1.32" height="22.2" fill="url(#bz)" opacity="0.81"/><rect x="659.34" y="423.9" width="1.32" height="27.6" fill="url(#bz)" opacity="0.89"/><rect x="660.51" y="427.8" width="1.32" height="23.7" fill="url(#bz)" opacity="0.89"/><rect x="661.68" y="432.7" width="1.32" height="18.8" fill="url(#bz)" opacity="0.94"/><rect x="662.85" y="424.8" width="1.32" height="26.7" fill="url(#bz)" opacity="0.94"/><rect x="664.02" y="405.6" width="1.32" height="45.9" fill="url(#bz)" opacity="0.80"/><rect x="665.19" y="423.8" width="1.32" height="27.7" fill="url(#bz)" opacity="0.87"/><rect x="666.36" y="411.1" width="1.32" height="40.4" fill="url(#bz)" opacity="0.87"/><rect x="667.53" y="420.7" width="1.32" height="30.8" fill="url(#bz)" opacity="0.83"/><rect x="668.70" y="419.8" width="1.32" height="31.7" fill="url(#bz)" opacity="1.00"/><rect x="669.87" y="426.6" width="1.32" height="24.9" fill="url(#bz)" opacity="0.83"/><rect x="671.04" y="419.5" width="1.32" height="32.0" fill="url(#bz)" opacity="0.80"/><rect x="672.21" y="422.0" width="1.32" height="29.5" fill="url(#bz)" opacity="0.89"/><rect x="673.38" y="413.3" width="1.32" height="38.2" fill="url(#bz)" opacity="0.96"/><rect x="674.55" y="414.1" width="1.32" height="37.4" fill="url(#bz)" opacity="0.88"/><rect x="675.72" y="410.8" width="1.32" height="40.7" fill="url(#bz)" opacity="0.91"/><rect x="676.89" y="410.2" width="1.32" height="41.3" fill="url(#bz)" opacity="0.98"/><rect x="678.06" y="415.7" width="1.32" height="35.8" fill="url(#bz)" opacity="0.92"/><rect x="679.23" y="423.3" width="1.32" height="28.2" fill="url(#bz)" opacity="0.81"/><rect x="680.40" y="413.5" width="1.32" height="38.0" fill="url(#bz)" opacity="0.94"/><rect x="681.57" y="428.4" width="1.32" height="23.1" fill="url(#bz)" opacity="0.85"/><rect x="682.74" y="426.4" width="1.32" height="25.1" fill="url(#bz)" opacity="0.81"/><rect x="683.91" y="428.5" width="1.32" height="23.0" fill="url(#bz)" opacity="0.84"/><rect x="685.08" y="426.1" width="1.32" height="25.4" fill="url(#bz)" opacity="0.98"/><rect x="686.25" y="435.7" width="1.32" height="15.8" fill="url(#bz)" opacity="0.84"/><rect x="687.42" y="422.5" width="1.32" height="29.0" fill="url(#bz)" opacity="0.82"/><rect x="688.59" y="419.2" width="1.32" height="32.3" fill="url(#bz)" opacity="0.91"/><rect x="689.76" y="417.9" width="1.32" height="33.6" fill="url(#bz)" opacity="0.92"/><rect x="690.93" y="421.0" width="1.32" height="30.5" fill="url(#bz)" opacity="0.80"/><rect x="692.10" y="409.7" width="1.32" height="41.8" fill="url(#bz)" opacity="0.96"/><rect x="693.27" y="422.8" width="1.32" height="28.7" fill="url(#bz)" opacity="0.91"/><rect x="694.44" y="426.0" width="1.32" height="25.5" fill="url(#bz)" opacity="0.82"/><rect x="695.61" y="414.1" width="1.32" height="37.4" fill="url(#bz)" opacity="0.80"/><rect x="696.78" y="416.4" width="1.32" height="35.1" fill="url(#bz)" opacity="0.89"/><rect x="697.95" y="424.0" width="1.32" height="27.5" fill="url(#bz)" opacity="0.97"/><rect x="699.12" y="403.6" width="1.32" height="47.9" fill="url(#bz)" opacity="0.97"/><rect x="700.29" y="417.7" width="1.32" height="33.8" fill="url(#bz)" opacity="0.86"/><rect x="701.46" y="427.8" width="1.32" height="23.7" fill="url(#bz)" opacity="0.93"/><rect x="702.63" y="425.7" width="1.32" height="25.8" fill="url(#bz)" opacity="0.95"/><rect x="703.80" y="400.8" width="1.32" height="50.7" fill="url(#bz)" opacity="0.98"/><rect x="704.97" y="412.6" width="1.32" height="38.9" fill="url(#bz)" opacity="0.86"/><rect x="706.14" y="419.1" width="1.32" height="32.4" fill="url(#bz)" opacity="0.99"/><rect x="707.31" y="429.7" width="1.32" height="21.8" fill="url(#bz)" opacity="0.94"/><rect x="708.48" y="415.7" width="1.32" height="35.8" fill="url(#bz)" opacity="0.86"/><rect x="709.65" y="428.9" width="1.32" height="22.6" fill="url(#bz)" opacity="1.00"/><rect x="710.82" y="425.3" width="1.32" height="26.2" fill="url(#bz)" opacity="0.95"/><rect x="711.99" y="426.0" width="1.32" height="25.5" fill="url(#bz)" opacity="0.93"/><rect x="713.16" y="428.7" width="1.32" height="22.8" fill="url(#bz)" opacity="0.81"/><rect x="714.33" y="429.4" width="1.32" height="22.1" fill="url(#bz)" opacity="0.94"/><rect x="715.50" y="428.8" width="1.32" height="22.7" fill="url(#bz)" opacity="0.88"/><rect x="716.67" y="402.2" width="1.32" height="49.3" fill="url(#bz)" opacity="0.87"/><rect x="717.84" y="413.6" width="1.32" height="37.9" fill="url(#bz)" opacity="0.85"/><rect x="719.01" y="427.4" width="1.32" height="24.1" fill="url(#bz)" opacity="0.80"/><rect x="720.18" y="418.0" width="1.32" height="33.5" fill="url(#bz)" opacity="0.93"/><rect x="721.35" y="419.6" width="1.32" height="31.9" fill="url(#bz)" opacity="0.84"/><rect x="722.52" y="429.9" width="1.32" height="21.6" fill="url(#bz)" opacity="0.87"/><rect x="723.69" y="430.7" width="1.32" height="20.8" fill="url(#bz)" opacity="0.87"/><rect x="724.86" y="431.7" width="1.32" height="19.8" fill="url(#bz)" opacity="0.88"/><rect x="726.03" y="416.3" width="1.32" height="35.2" fill="url(#bz)" opacity="0.87"/><rect x="727.20" y="428.2" width="1.32" height="23.3" fill="url(#bz)" opacity="0.81"/><rect x="728.37" y="425.1" width="1.32" height="26.4" fill="url(#bz)" opacity="0.82"/><rect x="729.54" y="426.2" width="1.32" height="25.3" fill="url(#bz)" opacity="0.83"/><rect x="730.71" y="421.4" width="1.32" height="30.1" fill="url(#bz)" opacity="0.91"/><rect x="731.88" y="429.3" width="1.32" height="22.2" fill="url(#bz)" opacity="0.99"/><rect x="733.05" y="434.2" width="1.32" height="17.3" fill="url(#bz)" opacity="0.85"/><rect x="734.22" y="432.6" width="1.32" height="18.9" fill="url(#bz)" opacity="0.98"/><rect x="735.39" y="423.6" width="1.32" height="27.9" fill="url(#bz)" opacity="0.87"/><rect x="736.56" y="415.9" width="1.32" height="35.6" fill="url(#bz)" opacity="0.90"/><rect x="737.73" y="425.6" width="1.32" height="25.9" fill="url(#bz)" opacity="0.93"/><rect x="738.90" y="430.8" width="1.32" height="20.7" fill="url(#bz)" opacity="0.87"/><rect x="740.07" y="426.5" width="1.32" height="25.0" fill="url(#bz)" opacity="0.98"/><rect x="741.24" y="421.2" width="1.32" height="30.3" fill="url(#bz)" opacity="0.95"/><rect x="742.41" y="426.9" width="1.32" height="24.6" fill="url(#bz)" opacity="0.90"/><rect x="743.58" y="426.0" width="1.32" height="25.5" fill="url(#bz)" opacity="1.00"/><rect x="744.75" y="426.7" width="1.32" height="24.8" fill="url(#bz)" opacity="0.89"/><rect x="745.92" y="422.1" width="1.32" height="29.4" fill="url(#bz)" opacity="0.93"/><rect x="747.09" y="431.8" width="1.32" height="19.7" fill="url(#bz)" opacity="0.89"/><rect x="748.26" y="409.4" width="1.32" height="42.1" fill="url(#bz)" opacity="0.83"/><rect x="749.43" y="417.0" width="1.32" height="34.5" fill="url(#bz)" opacity="0.89"/><rect x="750.60" y="426.3" width="1.32" height="25.2" fill="url(#bz)" opacity="0.85"/><rect x="751.77" y="423.6" width="1.32" height="27.9" fill="url(#bz)" opacity="0.82"/><rect x="752.94" y="425.9" width="1.32" height="25.6" fill="url(#bz)" opacity="0.88"/><rect x="754.11" y="410.3" width="1.32" height="41.2" fill="url(#bz)" opacity="0.92"/><rect x="755.28" y="424.8" width="1.32" height="26.7" fill="url(#bz)" opacity="0.99"/><rect x="756.45" y="428.2" width="1.32" height="23.3" fill="url(#bz)" opacity="0.85"/><rect x="757.62" y="432.0" width="1.32" height="19.5" fill="url(#bz)" opacity="0.92"/><rect x="758.79" y="417.6" width="1.32" height="33.9" fill="url(#bz)" opacity="0.93"/><rect x="759.96" y="426.2" width="1.32" height="25.3" fill="url(#bz)" opacity="0.99"/><rect x="761.13" y="425.9" width="1.32" height="25.6" fill="url(#bz)" opacity="0.93"/><rect x="762.30" y="425.7" width="1.32" height="25.8" fill="url(#bz)" opacity="0.84"/><rect x="763.47" y="423.2" width="1.32" height="28.3" fill="url(#bz)" opacity="0.99"/><rect x="764.64" y="415.7" width="1.32" height="35.8" fill="url(#bz)" opacity="0.80"/><rect x="765.81" y="416.2" width="1.32" height="35.3" fill="url(#bz)" opacity="0.97"/><rect x="766.98" y="434.4" width="1.32" height="17.1" fill="url(#bz)" opacity="0.99"/><rect x="768.15" y="427.9" width="1.32" height="23.6" fill="url(#bz)" opacity="0.98"/><rect x="769.32" y="418.9" width="1.32" height="32.6" fill="url(#bz)" opacity="0.85"/><rect x="770.49" y="428.6" width="1.32" height="22.9" fill="url(#bz)" opacity="0.94"/><rect x="771.66" y="418.8" width="1.32" height="32.7" fill="url(#bz)" opacity="0.99"/><rect x="772.83" y="427.7" width="1.32" height="23.8" fill="url(#bz)" opacity="0.86"/><rect x="774.00" y="421.8" width="1.32" height="29.7" fill="url(#bz)" opacity="0.82"/><rect x="775.17" y="424.3" width="1.32" height="27.2" fill="url(#bz)" opacity="0.87"/><rect x="776.34" y="427.1" width="1.32" height="24.4" fill="url(#bz)" opacity="0.94"/><rect x="777.51" y="425.7" width="1.32" height="25.8" fill="url(#bz)" opacity="0.84"/><rect x="778.68" y="422.9" width="1.32" height="28.6" fill="url(#bz)" opacity="0.96"/><rect x="779.85" y="427.1" width="1.32" height="24.4" fill="url(#bz)" opacity="0.82"/><rect x="781.02" y="427.5" width="1.32" height="24.0" fill="url(#bz)" opacity="0.88"/><rect x="782.19" y="425.8" width="1.32" height="25.7" fill="url(#bz)" opacity="0.94"/><rect x="783.36" y="420.7" width="1.32" height="30.8" fill="url(#bz)" opacity="0.93"/><rect x="784.53" y="428.7" width="1.32" height="22.8" fill="url(#bz)" opacity="0.96"/><rect x="785.70" y="418.0" width="1.32" height="33.5" fill="url(#bz)" opacity="0.82"/><rect x="786.87" y="422.7" width="1.32" height="28.8" fill="url(#bz)" opacity="0.90"/><rect x="788.04" y="421.1" width="1.32" height="30.4" fill="url(#bz)" opacity="0.82"/><rect x="789.21" y="423.3" width="1.32" height="28.2" fill="url(#bz)" opacity="0.90"/><rect x="790.38" y="421.9" width="1.32" height="29.6" fill="url(#bz)" opacity="0.87"/><rect x="791.55" y="429.4" width="1.32" height="22.1" fill="url(#bz)" opacity="0.86"/><rect x="792.72" y="428.4" width="1.32" height="23.1" fill="url(#bz)" opacity="0.92"/><rect x="793.89" y="423.0" width="1.32" height="28.5" fill="url(#bz)" opacity="0.82"/><rect x="795.06" y="417.6" width="1.32" height="33.9" fill="url(#bz)" opacity="0.95"/><rect x="796.23" y="408.8" width="1.32" height="42.7" fill="url(#bz)" opacity="0.95"/><rect x="797.40" y="423.1" width="1.32" height="28.4" fill="url(#bz)" opacity="0.82"/><rect x="798.57" y="412.7" width="1.32" height="38.8" fill="url(#bz)" opacity="0.86"/><rect x="799.74" y="411.6" width="1.32" height="39.9" fill="url(#bz)" opacity="0.82"/><rect x="800.91" y="423.0" width="1.32" height="28.5" fill="url(#bz)" opacity="0.89"/><rect x="802.08" y="413.8" width="1.32" height="37.7" fill="url(#bz)" opacity="0.86"/><rect x="803.25" y="416.9" width="1.32" height="34.6" fill="url(#bz)" opacity="0.91"/><rect x="804.42" y="429.6" width="1.32" height="21.9" fill="url(#bz)" opacity="0.87"/><rect x="805.59" y="426.6" width="1.32" height="24.9" fill="url(#bz)" opacity="0.87"/><rect x="806.76" y="421.4" width="1.32" height="30.1" fill="url(#bz)" opacity="0.88"/><rect x="807.93" y="425.1" width="1.32" height="26.4" fill="url(#bz)" opacity="0.96"/><rect x="809.10" y="421.3" width="1.32" height="30.2" fill="url(#bz)" opacity="0.95"/><rect x="810.27" y="424.9" width="1.32" height="26.6" fill="url(#bz)" opacity="0.97"/><rect x="811.44" y="432.3" width="1.32" height="19.2" fill="url(#bz)" opacity="0.97"/><rect x="812.61" y="427.0" width="1.32" height="24.5" fill="url(#bz)" opacity="0.95"/><rect x="813.78" y="408.5" width="1.32" height="43.0" fill="url(#bz)" opacity="0.91"/><rect x="814.95" y="427.4" width="1.32" height="24.1" fill="url(#bz)" opacity="0.85"/><rect x="816.12" y="416.7" width="1.32" height="34.8" fill="url(#bz)" opacity="0.81"/><rect x="817.29" y="426.8" width="1.32" height="24.7" fill="url(#bz)" opacity="0.96"/><rect x="818.46" y="430.3" width="1.32" height="21.2" fill="url(#bz)" opacity="0.93"/><rect x="819.63" y="414.5" width="1.32" height="37.0" fill="url(#bz)" opacity="0.86"/><rect x="820.80" y="427.0" width="1.32" height="24.5" fill="url(#bz)" opacity="0.82"/><rect x="821.97" y="416.1" width="1.32" height="35.4" fill="url(#bz)" opacity="0.84"/><rect x="823.14" y="415.1" width="1.32" height="36.4" fill="url(#bz)" opacity="0.81"/><rect x="824.31" y="430.1" width="1.32" height="21.4" fill="url(#bz)" opacity="0.96"/><rect x="825.48" y="413.6" width="1.32" height="37.9" fill="url(#bz)" opacity="1.00"/><rect x="826.65" y="426.3" width="1.32" height="25.2" fill="url(#bz)" opacity="0.95"/><rect x="827.82" y="413.5" width="1.32" height="38.0" fill="url(#bz)" opacity="1.00"/><rect x="828.99" y="417.0" width="1.32" height="34.5" fill="url(#bz)" opacity="0.87"/><rect x="830.16" y="417.1" width="1.32" height="34.4" fill="url(#bz)" opacity="0.90"/><rect x="831.33" y="435.1" width="1.32" height="16.4" fill="url(#bz)" opacity="0.99"/><rect x="832.50" y="417.7" width="1.32" height="33.8" fill="url(#bz)" opacity="0.92"/><rect x="833.67" y="414.1" width="1.32" height="37.4" fill="url(#bz)" opacity="0.94"/><rect x="834.84" y="417.6" width="1.32" height="33.9" fill="url(#bz)" opacity="0.90"/><rect x="836.01" y="418.1" width="1.32" height="33.4" fill="url(#bz)" opacity="0.94"/><rect x="837.18" y="420.9" width="1.32" height="30.6" fill="url(#bz)" opacity="0.97"/><rect x="838.35" y="436.4" width="1.32" height="15.1" fill="url(#bz)" opacity="0.82"/><rect x="839.52" y="428.9" width="1.32" height="22.6" fill="url(#bz)" opacity="0.93"/><rect x="840.69" y="413.4" width="1.32" height="38.1" fill="url(#bz)" opacity="0.83"/><rect x="841.86" y="426.4" width="1.32" height="25.1" fill="url(#bz)" opacity="0.84"/><rect x="843.03" y="412.5" width="1.32" height="39.0" fill="url(#bz)" opacity="0.99"/><rect x="844.20" y="424.2" width="1.32" height="27.3" fill="url(#bz)" opacity="0.94"/><rect x="845.37" y="421.2" width="1.32" height="30.3" fill="url(#bz)" opacity="0.87"/><rect x="846.54" y="427.7" width="1.32" height="23.8" fill="url(#bz)" opacity="0.83"/><rect x="847.71" y="424.5" width="1.32" height="27.0" fill="url(#bz)" opacity="0.95"/><rect x="848.88" y="424.8" width="1.32" height="26.7" fill="url(#bz)" opacity="0.86"/><rect x="850.05" y="427.9" width="1.32" height="23.6" fill="url(#bz)" opacity="0.96"/><rect x="851.22" y="428.8" width="1.32" height="22.7" fill="url(#bz)" opacity="0.88"/><rect x="852.39" y="429.4" width="1.32" height="22.1" fill="url(#bz)" opacity="0.90"/><rect x="853.56" y="425.7" width="1.32" height="25.8" fill="url(#bz)" opacity="0.93"/><rect x="854.73" y="425.9" width="1.32" height="25.6" fill="url(#bz)" opacity="0.88"/><rect x="855.90" y="421.2" width="1.32" height="30.3" fill="url(#bz)" opacity="0.96"/><rect x="857.07" y="425.9" width="1.32" height="25.6" fill="url(#bz)" opacity="0.81"/><rect x="858.24" y="428.3" width="1.32" height="23.2" fill="url(#bz)" opacity="0.91"/><rect x="859.41" y="434.6" width="1.32" height="16.9" fill="url(#bz)" opacity="0.84"/><rect x="860.58" y="431.1" width="1.32" height="20.4" fill="url(#bz)" opacity="0.88"/><rect x="861.75" y="420.0" width="1.32" height="31.5" fill="url(#bz)" opacity="0.80"/><rect x="862.92" y="424.8" width="1.32" height="26.7" fill="url(#bz)" opacity="0.82"/><rect x="864.09" y="429.6" width="1.32" height="21.9" fill="url(#bz)" opacity="0.89"/><rect x="865.26" y="424.1" width="1.32" height="27.4" fill="url(#bz)" opacity="0.94"/><rect x="866.43" y="424.9" width="1.32" height="26.6" fill="url(#bz)" opacity="0.94"/><rect x="867.60" y="423.3" width="1.32" height="28.2" fill="url(#bz)" opacity="0.98"/><rect x="868.77" y="415.5" width="1.32" height="36.0" fill="url(#bz)" opacity="0.98"/><rect x="869.94" y="432.3" width="1.32" height="19.2" fill="url(#bz)" opacity="0.80"/><rect x="871.11" y="412.6" width="1.32" height="38.9" fill="url(#bz)" opacity="0.88"/><rect x="872.28" y="419.1" width="1.32" height="32.4" fill="url(#bz)" opacity="0.88"/><rect x="873.45" y="436.1" width="1.32" height="15.4" fill="url(#bz)" opacity="0.86"/><rect x="874.62" y="421.8" width="1.32" height="29.7" fill="url(#bz)" opacity="0.96"/><rect x="875.79" y="423.3" width="1.32" height="28.2" fill="url(#bz)" opacity="0.85"/><rect x="876.96" y="421.0" width="1.32" height="30.5" fill="url(#bz)" opacity="0.90"/><rect x="878.13" y="425.1" width="1.32" height="26.4" fill="url(#bz)" opacity="0.91"/><rect x="879.30" y="422.2" width="1.32" height="29.3" fill="url(#bz)" opacity="0.89"/><rect x="880.47" y="424.4" width="1.32" height="27.1" fill="url(#bz)" opacity="0.82"/><rect x="881.64" y="429.5" width="1.32" height="22.0" fill="url(#bz)" opacity="0.95"/><rect x="882.81" y="404.8" width="1.32" height="46.7" fill="url(#bz)" opacity="0.86"/><rect x="883.98" y="425.3" width="1.32" height="26.2" fill="url(#bz)" opacity="0.91"/><rect x="885.15" y="425.3" width="1.32" height="26.2" fill="url(#bz)" opacity="0.88"/><rect x="886.32" y="419.5" width="1.32" height="32.0" fill="url(#bz)" opacity="0.82"/><rect x="887.49" y="413.8" width="1.32" height="37.7" fill="url(#bz)" opacity="0.91"/><rect x="888.66" y="419.0" width="1.32" height="32.5" fill="url(#bz)" opacity="0.88"/><rect x="889.83" y="433.3" width="1.32" height="18.2" fill="url(#bz)" opacity="0.81"/><rect x="891.00" y="430.1" width="1.32" height="21.4" fill="url(#bz)" opacity="0.99"/><rect x="892.17" y="427.3" width="1.32" height="24.2" fill="url(#bz)" opacity="0.83"/><rect x="893.34" y="430.4" width="1.32" height="21.1" fill="url(#bz)" opacity="0.96"/><rect x="894.51" y="414.9" width="1.32" height="36.6" fill="url(#bz)" opacity="0.93"/><rect x="895.68" y="416.3" width="1.32" height="35.2" fill="url(#bz)" opacity="0.96"/><rect x="896.85" y="424.9" width="1.32" height="26.6" fill="url(#bz)" opacity="0.96"/><rect x="898.02" y="421.4" width="1.32" height="30.1" fill="url(#bz)" opacity="0.83"/><rect x="899.19" y="413.7" width="1.32" height="37.8" fill="url(#bz)" opacity="0.89"/><rect x="900.36" y="423.3" width="1.32" height="28.2" fill="url(#bz)" opacity="0.92"/>
 <rect x="247.50" y="423.7" width="0.9" height="27.8" fill="#50a8e8" opacity="0.6"/><rect x="249.84" y="420.6" width="1.05" height="30.9" fill="#0a0828"/><rect x="252.18" y="422.2" width="0.9" height="29.3" fill="#50a8e8" opacity="0.6"/><rect x="256.86" y="431.7" width="1.02" height="19.8" fill="#0a0828"/><rect x="258.03" y="428.0" width="0.9" height="23.5" fill="#50a8e8" opacity="0.6"/><rect x="261.54" y="426.5" width="1.09" height="25.0" fill="#0a0828"/><rect x="262.71" y="427.2" width="1.12" height="24.3" fill="#0a0828"/><rect x="263.88" y="433.2" width="0.98" height="18.3" fill="#0a0828"/><rect x="267.39" y="434.4" width="0.80" height="17.1" fill="#0a0828"/><rect x="268.56" y="424.0" width="0.92" height="27.5" fill="#0a0828"/><rect x="269.73" y="440.6" width="1.06" height="10.9" fill="#0a0828"/><rect x="272.07" y="436.3" width="0.87" height="15.2" fill="#0a0828"/><rect x="273.24" y="437.7" width="1.17" height="13.8" fill="#0a0828"/><rect x="274.41" y="427.4" width="0.95" height="24.1" fill="#0a0828"/><rect x="276.75" y="425.2" width="1.09" height="26.3" fill="#0a0828"/><rect x="277.92" y="435.5" width="0.74" height="16.0" fill="#0a0828"/><rect x="280.26" y="429.7" width="1.15" height="21.8" fill="#0a0828"/><rect x="281.43" y="422.4" width="0.9" height="29.1" fill="#50a8e8" opacity="0.6"/><rect x="284.94" y="431.1" width="1.00" height="20.4" fill="#0a0828"/><rect x="286.11" y="411.6" width="0.9" height="39.9" fill="#50a8e8" opacity="0.6"/><rect x="287.28" y="431.2" width="0.76" height="20.3" fill="#0a0828"/><rect x="288.45" y="420.6" width="0.72" height="30.9" fill="#0a0828"/><rect x="291.96" y="430.7" width="0.93" height="20.8" fill="#0a0828"/><rect x="293.13" y="437.8" width="0.83" height="13.7" fill="#0a0828"/><rect x="294.30" y="427.0" width="0.78" height="24.5" fill="#0a0828"/><rect x="296.64" y="426.7" width="0.82" height="24.8" fill="#0a0828"/><rect x="298.98" y="425.1" width="1.16" height="26.4" fill="#0a0828"/><rect x="300.15" y="439.2" width="0.79" height="12.3" fill="#0a0828"/><rect x="301.32" y="428.7" width="0.79" height="22.8" fill="#0a0828"/><rect x="302.49" y="417.2" width="0.9" height="34.3" fill="#50a8e8" opacity="0.6"/><rect x="303.66" y="412.9" width="0.9" height="38.6" fill="#50a8e8" opacity="0.6"/><rect x="304.83" y="424.1" width="1.08" height="27.4" fill="#0a0828"/><rect x="309.51" y="427.7" width="0.94" height="23.8" fill="#0a0828"/><rect x="311.85" y="429.3" width="0.93" height="22.2" fill="#0a0828"/><rect x="313.02" y="445.2" width="0.81" height="6.3" fill="#0a0828"/><rect x="314.19" y="440.1" width="0.79" height="11.4" fill="#0a0828"/><rect x="315.36" y="421.0" width="1.11" height="30.5" fill="#0a0828"/><rect x="316.53" y="438.9" width="0.77" height="12.6" fill="#0a0828"/><rect x="317.70" y="430.0" width="0.78" height="21.5" fill="#0a0828"/><rect x="324.72" y="425.2" width="0.90" height="26.3" fill="#0a0828"/><rect x="328.23" y="424.3" width="0.9" height="27.2" fill="#50a8e8" opacity="0.6"/><rect x="329.40" y="422.6" width="0.9" height="28.9" fill="#50a8e8" opacity="0.6"/><rect x="330.57" y="422.4" width="0.98" height="29.1" fill="#0a0828"/><rect x="331.74" y="429.5" width="0.77" height="22.0" fill="#0a0828"/><rect x="332.91" y="433.9" width="0.96" height="17.6" fill="#0a0828"/><rect x="334.08" y="430.1" width="1.03" height="21.4" fill="#0a0828"/><rect x="335.25" y="434.0" width="0.94" height="17.5" fill="#0a0828"/><rect x="336.42" y="433.7" width="0.81" height="17.8" fill="#0a0828"/><rect x="337.59" y="422.5" width="0.73" height="29.0" fill="#0a0828"/><rect x="338.76" y="429.2" width="1.05" height="22.3" fill="#0a0828"/><rect x="339.93" y="431.9" width="1.02" height="19.6" fill="#0a0828"/><rect x="342.27" y="423.1" width="1.13" height="28.4" fill="#0a0828"/><rect x="344.61" y="427.2" width="0.99" height="24.3" fill="#0a0828"/><rect x="345.78" y="425.7" width="0.88" height="25.8" fill="#0a0828"/><rect x="348.12" y="431.9" width="0.97" height="19.6" fill="#0a0828"/><rect x="350.46" y="431.4" width="0.71" height="20.1" fill="#0a0828"/><rect x="352.80" y="433.0" width="0.88" height="18.5" fill="#0a0828"/><rect x="353.97" y="417.6" width="0.9" height="33.9" fill="#50a8e8" opacity="0.6"/><rect x="355.14" y="428.4" width="1.15" height="23.1" fill="#0a0828"/><rect x="356.31" y="426.5" width="0.78" height="25.0" fill="#0a0828"/><rect x="359.82" y="437.3" width="0.94" height="14.2" fill="#0a0828"/><rect x="360.99" y="415.7" width="0.72" height="35.8" fill="#0a0828"/><rect x="362.16" y="426.9" width="0.84" height="24.6" fill="#0a0828"/><rect x="363.33" y="432.2" width="1.00" height="19.3" fill="#0a0828"/><rect x="364.50" y="428.6" width="0.78" height="22.9" fill="#0a0828"/><rect x="366.84" y="446.0" width="0.85" height="5.5" fill="#0a0828"/><rect x="369.18" y="429.3" width="1.12" height="22.2" fill="#0a0828"/><rect x="370.35" y="443.3" width="1.10" height="8.2" fill="#0a0828"/><rect x="373.86" y="431.7" width="0.93" height="19.8" fill="#0a0828"/><rect x="376.20" y="425.7" width="0.89" height="25.8" fill="#0a0828"/><rect x="377.37" y="435.9" width="0.81" height="15.6" fill="#0a0828"/><rect x="378.54" y="420.9" width="0.83" height="30.6" fill="#0a0828"/><rect x="380.88" y="417.1" width="1.15" height="34.4" fill="#0a0828"/><rect x="383.22" y="429.8" width="0.99" height="21.7" fill="#0a0828"/><rect x="384.39" y="421.0" width="1.01" height="30.5" fill="#0a0828"/><rect x="385.56" y="440.7" width="1.10" height="10.8" fill="#0a0828"/><rect x="386.73" y="432.1" width="0.85" height="19.4" fill="#0a0828"/><rect x="387.90" y="432.7" width="1.06" height="18.8" fill="#0a0828"/><rect x="389.07" y="420.3" width="0.9" height="31.2" fill="#50a8e8" opacity="0.6"/><rect x="390.24" y="414.1" width="0.9" height="37.4" fill="#50a8e8" opacity="0.6"/><rect x="391.41" y="439.2" width="1.05" height="12.3" fill="#0a0828"/><rect x="392.58" y="437.9" width="0.84" height="13.6" fill="#0a0828"/><rect x="393.75" y="429.4" width="1.04" height="22.1" fill="#0a0828"/><rect x="396.09" y="443.4" width="0.99" height="8.1" fill="#0a0828"/><rect x="403.11" y="416.0" width="1.06" height="35.5" fill="#0a0828"/><rect x="404.28" y="424.8" width="1.00" height="26.7" fill="#0a0828"/><rect x="405.45" y="431.6" width="1.03" height="19.9" fill="#0a0828"/><rect x="406.62" y="428.6" width="1.14" height="22.9" fill="#0a0828"/><rect x="407.79" y="430.9" width="0.96" height="20.6" fill="#0a0828"/><rect x="408.96" y="424.8" width="0.9" height="26.7" fill="#50a8e8" opacity="0.6"/><rect x="410.13" y="430.1" width="0.73" height="21.4" fill="#0a0828"/><rect x="412.47" y="436.8" width="0.71" height="14.7" fill="#0a0828"/><rect x="413.64" y="433.7" width="0.97" height="17.8" fill="#0a0828"/><rect x="414.81" y="446.6" width="1.00" height="4.9" fill="#0a0828"/><rect x="415.98" y="427.2" width="0.9" height="24.3" fill="#50a8e8" opacity="0.6"/><rect x="417.15" y="436.1" width="1.10" height="15.4" fill="#0a0828"/><rect x="420.66" y="429.8" width="0.81" height="21.7" fill="#0a0828"/><rect x="423.00" y="429.6" width="0.84" height="21.9" fill="#0a0828"/><rect x="424.17" y="425.8" width="0.72" height="25.7" fill="#0a0828"/><rect x="426.51" y="440.6" width="0.94" height="10.9" fill="#0a0828"/><rect x="427.68" y="432.1" width="1.13" height="19.4" fill="#0a0828"/><rect x="428.85" y="435.7" width="0.85" height="15.8" fill="#0a0828"/><rect x="432.36" y="424.2" width="0.93" height="27.3" fill="#0a0828"/><rect x="433.53" y="436.0" width="0.91" height="15.5" fill="#0a0828"/><rect x="434.70" y="428.4" width="0.97" height="23.1" fill="#0a0828"/><rect x="435.87" y="417.4" width="0.75" height="34.1" fill="#0a0828"/><rect x="437.04" y="429.9" width="0.97" height="21.6" fill="#0a0828"/><rect x="438.21" y="441.4" width="1.11" height="10.1" fill="#0a0828"/><rect x="442.89" y="429.7" width="0.98" height="21.8" fill="#0a0828"/><rect x="444.06" y="419.1" width="1.11" height="32.4" fill="#0a0828"/><rect x="448.74" y="422.1" width="0.9" height="29.4" fill="#50a8e8" opacity="0.6"/><rect x="449.91" y="435.8" width="1.09" height="15.7" fill="#0a0828"/><rect x="451.08" y="439.4" width="0.79" height="12.1" fill="#0a0828"/><rect x="452.25" y="426.3" width="1.02" height="25.2" fill="#0a0828"/><rect x="453.42" y="430.6" width="0.94" height="20.9" fill="#0a0828"/><rect x="454.59" y="421.9" width="0.9" height="29.6" fill="#50a8e8" opacity="0.6"/><rect x="456.93" y="434.9" width="0.98" height="16.6" fill="#0a0828"/><rect x="458.10" y="428.8" width="0.87" height="22.7" fill="#0a0828"/><rect x="459.27" y="433.8" width="0.77" height="17.7" fill="#0a0828"/><rect x="460.44" y="428.8" width="0.97" height="22.7" fill="#0a0828"/><rect x="461.61" y="419.9" width="1.06" height="31.6" fill="#0a0828"/><rect x="462.78" y="432.6" width="1.11" height="18.9" fill="#0a0828"/><rect x="465.12" y="426.6" width="0.73" height="24.9" fill="#0a0828"/><rect x="466.29" y="433.9" width="0.87" height="17.6" fill="#0a0828"/><rect x="467.46" y="429.1" width="0.84" height="22.4" fill="#0a0828"/><rect x="469.80" y="432.1" width="0.74" height="19.4" fill="#0a0828"/><rect x="472.14" y="438.3" width="0.83" height="13.2" fill="#0a0828"/><rect x="473.31" y="428.9" width="0.98" height="22.6" fill="#0a0828"/><rect x="474.48" y="433.9" width="0.98" height="17.6" fill="#0a0828"/><rect x="475.65" y="438.2" width="1.11" height="13.3" fill="#0a0828"/><rect x="476.82" y="435.8" width="1.01" height="15.7" fill="#0a0828"/><rect x="477.99" y="443.2" width="0.86" height="8.3" fill="#0a0828"/><rect x="479.16" y="431.3" width="1.14" height="20.2" fill="#0a0828"/><rect x="480.33" y="440.3" width="0.77" height="11.2" fill="#0a0828"/><rect x="482.67" y="415.9" width="0.9" height="35.6" fill="#50a8e8" opacity="0.6"/><rect x="483.84" y="434.5" width="1.07" height="17.0" fill="#0a0828"/><rect x="485.01" y="429.5" width="0.76" height="22.0" fill="#0a0828"/><rect x="487.35" y="438.3" width="0.94" height="13.2" fill="#0a0828"/><rect x="489.69" y="444.4" width="0.82" height="7.1" fill="#0a0828"/><rect x="490.86" y="425.1" width="0.9" height="26.4" fill="#50a8e8" opacity="0.6"/><rect x="492.03" y="429.1" width="1.00" height="22.4" fill="#0a0828"/><rect x="493.20" y="424.4" width="1.13" height="27.1" fill="#0a0828"/><rect x="494.37" y="434.4" width="1.06" height="17.1" fill="#0a0828"/><rect x="496.71" y="419.9" width="0.83" height="31.6" fill="#0a0828"/><rect x="499.05" y="432.3" width="1.12" height="19.2" fill="#0a0828"/><rect x="501.39" y="439.4" width="0.71" height="12.1" fill="#0a0828"/><rect x="503.73" y="433.8" width="1.11" height="17.7" fill="#0a0828"/><rect x="504.90" y="432.9" width="0.72" height="18.6" fill="#0a0828"/><rect x="506.07" y="425.3" width="1.11" height="26.2" fill="#0a0828"/><rect x="507.24" y="436.4" width="0.77" height="15.1" fill="#0a0828"/><rect x="510.75" y="441.7" width="0.94" height="9.8" fill="#0a0828"/><rect x="511.92" y="446.3" width="1.01" height="5.2" fill="#0a0828"/><rect x="514.26" y="431.1" width="0.88" height="20.4" fill="#0a0828"/><rect x="515.43" y="399.6" width="0.9" height="51.9" fill="#50a8e8" opacity="0.6"/><rect x="516.60" y="434.0" width="0.76" height="17.5" fill="#0a0828"/><rect x="518.94" y="431.5" width="0.70" height="20.0" fill="#0a0828"/><rect x="521.28" y="420.8" width="0.95" height="30.7" fill="#0a0828"/><rect x="522.45" y="434.7" width="0.83" height="16.8" fill="#0a0828"/><rect x="524.79" y="425.4" width="1.08" height="26.1" fill="#0a0828"/><rect x="525.96" y="424.3" width="1.12" height="27.2" fill="#0a0828"/><rect x="528.30" y="430.2" width="0.95" height="21.3" fill="#0a0828"/><rect x="531.81" y="434.1" width="0.86" height="17.4" fill="#0a0828"/><rect x="532.98" y="424.5" width="0.79" height="27.0" fill="#0a0828"/><rect x="535.32" y="428.2" width="0.99" height="23.3" fill="#0a0828"/><rect x="537.66" y="421.2" width="0.9" height="30.3" fill="#50a8e8" opacity="0.6"/><rect x="538.83" y="428.3" width="0.88" height="23.2" fill="#0a0828"/><rect x="540.00" y="433.2" width="0.95" height="18.3" fill="#0a0828"/><rect x="541.17" y="427.1" width="1.09" height="24.4" fill="#0a0828"/><rect x="543.51" y="415.2" width="0.9" height="36.3" fill="#50a8e8" opacity="0.6"/><rect x="544.68" y="423.8" width="0.9" height="27.7" fill="#50a8e8" opacity="0.6"/><rect x="547.02" y="442.5" width="1.03" height="9.0" fill="#0a0828"/><rect x="548.19" y="430.2" width="1.11" height="21.3" fill="#0a0828"/><rect x="549.36" y="420.2" width="0.82" height="31.3" fill="#0a0828"/><rect x="550.53" y="428.3" width="0.84" height="23.2" fill="#0a0828"/><rect x="552.87" y="426.4" width="0.87" height="25.1" fill="#0a0828"/><rect x="555.21" y="427.4" width="0.83" height="24.1" fill="#0a0828"/><rect x="557.55" y="429.5" width="0.90" height="22.0" fill="#0a0828"/><rect x="561.06" y="426.2" width="0.9" height="25.3" fill="#50a8e8" opacity="0.6"/><rect x="562.23" y="440.2" width="1.15" height="11.3" fill="#0a0828"/><rect x="563.40" y="440.4" width="0.77" height="11.1" fill="#0a0828"/><rect x="564.57" y="423.9" width="0.96" height="27.6" fill="#0a0828"/><rect x="566.91" y="436.0" width="0.81" height="15.5" fill="#0a0828"/><rect x="568.08" y="436.9" width="1.02" height="14.6" fill="#0a0828"/><rect x="570.42" y="436.2" width="1.14" height="15.3" fill="#0a0828"/><rect x="571.59" y="440.6" width="0.83" height="10.9" fill="#0a0828"/><rect x="572.76" y="430.4" width="0.98" height="21.1" fill="#0a0828"/><rect x="573.93" y="434.2" width="0.82" height="17.3" fill="#0a0828"/><rect x="576.27" y="430.0" width="0.92" height="21.5" fill="#0a0828"/><rect x="577.44" y="415.4" width="0.9" height="36.1" fill="#50a8e8" opacity="0.6"/><rect x="578.61" y="436.8" width="0.86" height="14.7" fill="#0a0828"/><rect x="579.78" y="437.6" width="1.11" height="13.9" fill="#0a0828"/><rect x="580.95" y="437.0" width="0.94" height="14.5" fill="#0a0828"/><rect x="582.12" y="435.4" width="0.81" height="16.1" fill="#0a0828"/><rect x="584.46" y="424.1" width="1.05" height="27.4" fill="#0a0828"/><rect x="585.63" y="420.4" width="0.97" height="31.1" fill="#0a0828"/><rect x="587.97" y="434.6" width="1.08" height="16.9" fill="#0a0828"/><rect x="589.14" y="428.5" width="1.14" height="23.0" fill="#0a0828"/><rect x="590.31" y="412.0" width="0.9" height="39.5" fill="#50a8e8" opacity="0.6"/><rect x="591.48" y="434.8" width="1.16" height="16.7" fill="#0a0828"/><rect x="593.82" y="423.7" width="0.9" height="27.8" fill="#50a8e8" opacity="0.6"/><rect x="600.84" y="424.8" width="1.16" height="26.7" fill="#0a0828"/><rect x="602.01" y="429.3" width="0.93" height="22.2" fill="#0a0828"/><rect x="605.52" y="437.5" width="0.86" height="14.0" fill="#0a0828"/><rect x="606.69" y="445.6" width="1.08" height="5.9" fill="#0a0828"/><rect x="607.86" y="430.8" width="0.87" height="20.7" fill="#0a0828"/><rect x="609.03" y="433.5" width="1.01" height="18.0" fill="#0a0828"/><rect x="611.37" y="434.6" width="0.99" height="16.9" fill="#0a0828"/><rect x="612.54" y="432.4" width="1.16" height="19.1" fill="#0a0828"/><rect x="613.71" y="422.4" width="1.08" height="29.1" fill="#0a0828"/><rect x="614.88" y="440.9" width="0.94" height="10.6" fill="#0a0828"/><rect x="616.05" y="422.9" width="1.15" height="28.6" fill="#0a0828"/><rect x="617.22" y="430.8" width="0.9" height="20.7" fill="#50a8e8" opacity="0.6"/><rect x="618.39" y="419.9" width="1.09" height="31.6" fill="#0a0828"/><rect x="619.56" y="431.3" width="1.04" height="20.2" fill="#0a0828"/><rect x="621.90" y="425.9" width="0.89" height="25.6" fill="#0a0828"/><rect x="623.07" y="429.4" width="1.16" height="22.1" fill="#0a0828"/><rect x="624.24" y="415.6" width="0.9" height="35.9" fill="#50a8e8" opacity="0.6"/><rect x="625.41" y="439.6" width="1.07" height="11.9" fill="#0a0828"/><rect x="626.58" y="426.2" width="1.05" height="25.3" fill="#0a0828"/><rect x="628.92" y="432.0" width="0.85" height="19.5" fill="#0a0828"/><rect x="630.09" y="426.4" width="0.80" height="25.1" fill="#0a0828"/><rect x="633.60" y="413.9" width="0.9" height="37.6" fill="#50a8e8" opacity="0.6"/><rect x="634.77" y="427.8" width="1.06" height="23.7" fill="#0a0828"/><rect x="635.94" y="419.2" width="0.82" height="32.3" fill="#0a0828"/><rect x="637.11" y="433.4" width="0.85" height="18.1" fill="#0a0828"/><rect x="638.28" y="423.5" width="0.9" height="28.0" fill="#50a8e8" opacity="0.6"/><rect x="639.45" y="432.6" width="0.87" height="18.9" fill="#0a0828"/><rect x="640.62" y="421.8" width="0.76" height="29.7" fill="#0a0828"/><rect x="642.96" y="430.2" width="1.10" height="21.3" fill="#0a0828"/><rect x="644.13" y="422.3" width="1.05" height="29.2" fill="#0a0828"/><rect x="646.47" y="441.8" width="1.09" height="9.7" fill="#0a0828"/><rect x="647.64" y="440.3" width="1.16" height="11.2" fill="#0a0828"/><rect x="649.98" y="419.7" width="0.9" height="31.8" fill="#50a8e8" opacity="0.6"/><rect x="652.32" y="422.7" width="0.86" height="28.8" fill="#0a0828"/><rect x="654.66" y="425.7" width="0.94" height="25.8" fill="#0a0828"/><rect x="655.83" y="428.9" width="0.98" height="22.6" fill="#0a0828"/><rect x="658.17" y="438.3" width="1.02" height="13.2" fill="#0a0828"/><rect x="659.34" y="436.0" width="0.83" height="15.5" fill="#0a0828"/><rect x="660.51" y="431.0" width="0.83" height="20.5" fill="#0a0828"/><rect x="665.19" y="431.7" width="0.85" height="19.8" fill="#0a0828"/><rect x="669.87" y="431.6" width="0.80" height="19.9" fill="#0a0828"/><rect x="674.55" y="420.8" width="0.92" height="30.7" fill="#0a0828"/><rect x="675.72" y="431.2" width="1.12" height="20.3" fill="#0a0828"/><rect x="676.89" y="439.8" width="0.76" height="11.7" fill="#0a0828"/><rect x="678.06" y="411.4" width="0.9" height="40.1" fill="#50a8e8" opacity="0.6"/><rect x="679.23" y="429.3" width="1.04" height="22.2" fill="#0a0828"/><rect x="680.40" y="438.0" width="0.98" height="13.5" fill="#0a0828"/><rect x="681.57" y="435.4" width="1.00" height="16.1" fill="#0a0828"/><rect x="682.74" y="433.2" width="0.72" height="18.3" fill="#0a0828"/><rect x="683.91" y="423.0" width="0.9" height="28.5" fill="#50a8e8" opacity="0.6"/><rect x="685.08" y="437.5" width="1.06" height="14.0" fill="#0a0828"/><rect x="689.76" y="420.3" width="0.73" height="31.2" fill="#0a0828"/><rect x="692.10" y="438.9" width="0.80" height="12.6" fill="#0a0828"/><rect x="693.27" y="440.3" width="1.10" height="11.2" fill="#0a0828"/><rect x="694.44" y="432.6" width="0.77" height="18.9" fill="#0a0828"/><rect x="695.61" y="439.3" width="0.98" height="12.2" fill="#0a0828"/><rect x="696.78" y="423.2" width="1.13" height="28.3" fill="#0a0828"/><rect x="699.12" y="417.1" width="1.14" height="34.4" fill="#0a0828"/><rect x="700.29" y="431.2" width="0.91" height="20.3" fill="#0a0828"/><rect x="702.63" y="433.7" width="0.71" height="17.8" fill="#0a0828"/><rect x="703.80" y="419.4" width="1.12" height="32.1" fill="#0a0828"/><rect x="704.97" y="410.4" width="0.9" height="41.1" fill="#50a8e8" opacity="0.6"/><rect x="706.14" y="425.2" width="0.95" height="26.3" fill="#0a0828"/><rect x="709.65" y="435.0" width="1.03" height="16.5" fill="#0a0828"/><rect x="710.82" y="433.4" width="1.03" height="18.1" fill="#0a0828"/><rect x="711.99" y="431.6" width="1.03" height="19.9" fill="#0a0828"/><rect x="713.16" y="445.8" width="0.77" height="5.7" fill="#0a0828"/><rect x="714.33" y="432.5" width="0.75" height="19.0" fill="#0a0828"/><rect x="719.01" y="430.4" width="1.01" height="21.1" fill="#0a0828"/><rect x="720.18" y="437.9" width="1.16" height="13.6" fill="#0a0828"/><rect x="721.35" y="445.8" width="0.76" height="5.7" fill="#0a0828"/><rect x="723.69" y="439.4" width="1.07" height="12.1" fill="#0a0828"/><rect x="726.03" y="413.5" width="0.9" height="38.0" fill="#50a8e8" opacity="0.6"/><rect x="727.20" y="423.2" width="0.9" height="28.3" fill="#50a8e8" opacity="0.6"/><rect x="728.37" y="427.7" width="0.76" height="23.8" fill="#0a0828"/><rect x="729.54" y="428.9" width="0.73" height="22.6" fill="#0a0828"/><rect x="730.71" y="434.7" width="0.97" height="16.8" fill="#0a0828"/><rect x="733.05" y="437.5" width="0.74" height="14.0" fill="#0a0828"/><rect x="734.22" y="435.1" width="0.91" height="16.4" fill="#0a0828"/><rect x="735.39" y="428.5" width="0.79" height="23.0" fill="#0a0828"/><rect x="736.56" y="426.9" width="0.95" height="24.6" fill="#0a0828"/><rect x="737.73" y="433.3" width="1.05" height="18.2" fill="#0a0828"/><rect x="740.07" y="434.9" width="0.91" height="16.6" fill="#0a0828"/><rect x="741.24" y="425.6" width="1.02" height="25.9" fill="#0a0828"/><rect x="743.58" y="424.7" width="0.9" height="26.8" fill="#50a8e8" opacity="0.6"/><rect x="744.75" y="430.6" width="0.89" height="20.9" fill="#0a0828"/><rect x="745.92" y="429.7" width="1.09" height="21.8" fill="#0a0828"/><rect x="747.09" y="434.7" width="0.81" height="16.8" fill="#0a0828"/><rect x="748.26" y="425.5" width="1.12" height="26.0" fill="#0a0828"/><rect x="749.43" y="423.0" width="1.10" height="28.5" fill="#0a0828"/><rect x="751.77" y="432.3" width="1.15" height="19.2" fill="#0a0828"/><rect x="752.94" y="432.7" width="1.01" height="18.8" fill="#0a0828"/><rect x="755.28" y="441.3" width="0.97" height="10.2" fill="#0a0828"/><rect x="756.45" y="434.3" width="0.74" height="17.2" fill="#0a0828"/><rect x="757.62" y="438.8" width="0.71" height="12.7" fill="#0a0828"/><rect x="758.79" y="424.3" width="0.81" height="27.2" fill="#0a0828"/><rect x="759.96" y="433.9" width="1.12" height="17.6" fill="#0a0828"/><rect x="762.30" y="443.9" width="0.89" height="7.6" fill="#0a0828"/><rect x="763.47" y="430.2" width="0.91" height="21.3" fill="#0a0828"/><rect x="764.64" y="414.7" width="0.9" height="36.8" fill="#50a8e8" opacity="0.6"/><rect x="765.81" y="412.4" width="0.9" height="39.1" fill="#50a8e8" opacity="0.6"/><rect x="766.98" y="438.2" width="0.82" height="13.3" fill="#0a0828"/><rect x="768.15" y="435.6" width="0.95" height="15.9" fill="#0a0828"/><rect x="769.32" y="447.1" width="1.03" height="4.4" fill="#0a0828"/><rect x="772.83" y="431.2" width="0.73" height="20.3" fill="#0a0828"/><rect x="774.00" y="417.7" width="0.9" height="33.8" fill="#50a8e8" opacity="0.6"/><rect x="775.17" y="436.0" width="0.96" height="15.5" fill="#0a0828"/><rect x="776.34" y="430.5" width="1.08" height="21.0" fill="#0a0828"/><rect x="778.68" y="440.3" width="0.97" height="11.2" fill="#0a0828"/><rect x="779.85" y="425.7" width="0.9" height="25.8" fill="#50a8e8" opacity="0.6"/><rect x="781.02" y="429.7" width="1.04" height="21.8" fill="#0a0828"/><rect x="782.19" y="420.3" width="0.9" height="31.2" fill="#50a8e8" opacity="0.6"/><rect x="783.36" y="437.3" width="1.06" height="14.2" fill="#0a0828"/><rect x="784.53" y="435.0" width="0.73" height="16.5" fill="#0a0828"/><rect x="785.70" y="425.7" width="1.14" height="25.8" fill="#0a0828"/><rect x="786.87" y="430.0" width="0.95" height="21.5" fill="#0a0828"/><rect x="788.04" y="429.3" width="0.82" height="22.2" fill="#0a0828"/><rect x="790.38" y="429.5" width="0.99" height="22.0" fill="#0a0828"/><rect x="791.55" y="436.8" width="0.76" height="14.7" fill="#0a0828"/><rect x="792.72" y="441.7" width="1.06" height="9.8" fill="#0a0828"/><rect x="795.06" y="439.6" width="0.78" height="11.9" fill="#0a0828"/><rect x="796.23" y="430.8" width="0.82" height="20.7" fill="#0a0828"/><rect x="797.40" y="430.5" width="1.13" height="21.0" fill="#0a0828"/><rect x="798.57" y="420.7" width="0.76" height="30.8" fill="#0a0828"/><rect x="802.08" y="420.0" width="0.79" height="31.5" fill="#0a0828"/><rect x="803.25" y="422.5" width="1.12" height="29.0" fill="#0a0828"/><rect x="805.59" y="429.5" width="0.81" height="22.0" fill="#0a0828"/><rect x="806.76" y="416.1" width="0.9" height="35.4" fill="#50a8e8" opacity="0.6"/><rect x="810.27" y="428.9" width="1.09" height="22.6" fill="#0a0828"/><rect x="812.61" y="423.1" width="0.9" height="28.4" fill="#50a8e8" opacity="0.6"/><rect x="813.78" y="430.7" width="1.07" height="20.8" fill="#0a0828"/><rect x="814.95" y="431.1" width="1.07" height="20.4" fill="#0a0828"/><rect x="820.80" y="432.1" width="0.93" height="19.4" fill="#0a0828"/><rect x="821.97" y="430.0" width="1.03" height="21.5" fill="#0a0828"/><rect x="823.14" y="427.9" width="0.90" height="23.6" fill="#0a0828"/><rect x="824.31" y="436.6" width="1.08" height="14.9" fill="#0a0828"/><rect x="825.48" y="429.5" width="1.14" height="22.0" fill="#0a0828"/><rect x="826.65" y="431.3" width="1.01" height="20.2" fill="#0a0828"/><rect x="827.82" y="418.9" width="1.13" height="32.6" fill="#0a0828"/><rect x="831.33" y="440.9" width="1.08" height="10.6" fill="#0a0828"/><rect x="832.50" y="432.8" width="0.94" height="18.7" fill="#0a0828"/><rect x="834.84" y="425.0" width="0.80" height="26.5" fill="#0a0828"/><rect x="838.35" y="442.4" width="0.77" height="9.1" fill="#0a0828"/><rect x="840.69" y="423.0" width="0.78" height="28.5" fill="#0a0828"/><rect x="841.86" y="429.5" width="0.93" height="22.0" fill="#0a0828"/><rect x="843.03" y="435.6" width="0.77" height="15.9" fill="#0a0828"/><rect x="847.71" y="432.0" width="0.89" height="19.5" fill="#0a0828"/><rect x="848.88" y="431.2" width="1.15" height="20.3" fill="#0a0828"/><rect x="850.05" y="432.0" width="1.14" height="19.5" fill="#0a0828"/><rect x="851.22" y="439.2" width="1.08" height="12.3" fill="#0a0828"/><rect x="852.39" y="433.5" width="0.95" height="18.0" fill="#0a0828"/><rect x="853.56" y="430.9" width="0.99" height="20.6" fill="#0a0828"/><rect x="854.73" y="431.1" width="0.83" height="20.4" fill="#0a0828"/><rect x="855.90" y="423.3" width="0.79" height="28.2" fill="#0a0828"/><rect x="857.07" y="432.2" width="1.13" height="19.3" fill="#0a0828"/><rect x="860.58" y="437.6" width="0.98" height="13.9" fill="#0a0828"/><rect x="862.92" y="436.3" width="1.02" height="15.2" fill="#0a0828"/><rect x="864.09" y="433.6" width="1.16" height="17.9" fill="#0a0828"/><rect x="865.26" y="436.4" width="0.87" height="15.1" fill="#0a0828"/><rect x="866.43" y="431.6" width="0.97" height="19.9" fill="#0a0828"/><rect x="867.60" y="421.2" width="0.9" height="30.3" fill="#50a8e8" opacity="0.6"/><rect x="868.77" y="437.9" width="0.88" height="13.6" fill="#0a0828"/><rect x="871.11" y="409.1" width="0.9" height="42.4" fill="#50a8e8" opacity="0.6"/><rect x="873.45" y="443.5" width="1.07" height="8.0" fill="#0a0828"/><rect x="875.79" y="422.4" width="0.9" height="29.1" fill="#50a8e8" opacity="0.6"/><rect x="876.96" y="423.4" width="1.14" height="28.1" fill="#0a0828"/><rect x="881.64" y="435.4" width="0.75" height="16.1" fill="#0a0828"/><rect x="882.81" y="416.2" width="1.17" height="35.3" fill="#0a0828"/><rect x="888.66" y="421.2" width="0.93" height="30.3" fill="#0a0828"/><rect x="889.83" y="439.7" width="1.04" height="11.8" fill="#0a0828"/><rect x="891.00" y="438.2" width="0.76" height="13.3" fill="#0a0828"/><rect x="893.34" y="433.7" width="1.13" height="17.8" fill="#0a0828"/><rect x="894.51" y="419.6" width="0.75" height="31.9" fill="#0a0828"/><rect x="899.19" y="433.1" width="0.96" height="18.4" fill="#0a0828"/><rect x="900.36" y="427.5" width="1.15" height="24.0" fill="#0a0828"/>
</g>
<polyline points="247.5,244.2 248.7,240.1 249.8,244.1 251.0,242.6 252.2,241.3 253.3,242.5 254.5,245.0 255.7,245.9 256.9,245.0 258.0,244.2 259.2,242.3 260.4,240.8 261.5,236.0 262.7,241.0 263.9,243.4 265.1,241.0 266.2,239.3 267.4,237.0 268.6,238.4 269.7,240.7 270.9,241.2 272.1,243.5 273.2,241.4 274.4,237.0 275.6,241.5 276.8,241.4 277.9,242.9 279.1,243.3 280.3,246.3 281.4,243.1 282.6,242.0 283.8,240.1 284.9,240.6 286.1,241.9 287.3,243.4 288.5,242.4 289.6,240.8 290.8,240.4 292.0,242.9 293.1,235.9 294.3,244.0 295.5,238.0 296.6,242.6 297.8,242.4 299.0,242.4 300.2,241.7 301.3,242.0 302.5,240.3 303.7,241.5 304.8,235.7 306.0,241.2 307.2,240.9 308.3,240.3 309.5,241.7 310.7,231.5 311.9,244.3 313.0,245.5 314.2,242.7 315.4,245.7 316.5,248.2 317.7,249.1 318.9,250.2 320.0,249.1 321.2,247.8 322.4,249.0 323.6,251.2 324.7,251.3 325.9,248.9 327.1,248.4 328.2,251.8 329.4,254.8 330.6,251.7 331.7,247.6 332.9,247.2 334.1,249.3 335.3,251.1 336.4,250.6 337.6,252.9 338.8,255.1 339.9,253.4 341.1,253.7 342.3,253.7 343.4,254.7 344.6,255.5 345.8,254.6 347.0,251.2 348.1,253.0 349.3,252.0 350.5,254.2 351.6,249.3 352.8,245.7 354.0,244.2 355.1,240.5 356.3,238.8 357.5,230.0 358.7,220.1 359.8,217.2 361.0,220.7 362.2,224.6 363.3,223.8 364.5,225.8 365.7,227.1 366.8,229.9 368.0,228.6 369.2,230.7 370.4,235.4 371.5,235.9 372.7,225.2 373.9,214.9 375.0,211.3 376.2,205.8 377.4,198.7 378.5,197.2 379.7,207.1 380.9,212.1 382.1,219.2 383.2,223.3 384.4,228.2 385.6,228.5 386.7,232.9 387.9,234.6 389.1,239.4 390.2,244.8 391.4,247.4 392.6,249.8 393.8,249.1 394.9,243.6 396.1,237.6 397.3,242.7 398.4,248.6 399.6,250.8 400.8,254.7 401.9,257.7 403.1,262.9 404.3,264.8 405.5,264.7 406.6,263.8 407.8,265.5 409.0,273.1 410.1,281.0 411.3,277.6 412.5,272.3 413.6,266.1 414.8,263.6 416.0,260.7 417.2,260.4 418.3,257.4 419.5,255.4 420.7,255.7 421.8,256.5 423.0,253.2 424.2,250.5 425.3,246.8 426.5,240.2 427.7,235.6 428.9,238.9 430.0,243.8 431.2,231.4 432.4,222.8 433.5,216.5 434.7,212.3 435.9,205.7 437.0,203.6 438.2,208.8 439.4,213.6 440.6,207.6 441.7,202.2 442.9,196.3 444.1,202.8 445.2,210.2 446.4,213.6 447.6,217.6 448.7,217.6 449.9,222.2 451.1,218.2 452.3,225.6 453.4,232.7 454.6,240.4 455.8,241.7 456.9,243.4 458.1,247.1 459.3,251.6 460.4,253.9 461.6,252.6 462.8,251.5 464.0,250.1 465.1,255.2 466.3,265.6 467.5,264.4 468.6,264.0 469.8,262.4 471.0,262.9 472.1,267.3 473.3,270.9 474.5,273.1 475.7,276.1 476.8,278.2 478.0,279.7 479.2,278.6 480.3,280.3 481.5,283.2 482.7,286.6 483.8,285.3 485.0,286.6 486.2,284.5 487.4,285.9 488.5,286.4 489.7,287.5 490.9,287.5 492.0,286.0 493.2,286.4 494.4,282.5 495.5,283.4 496.7,282.5 497.9,285.0 499.1,283.3 500.2,284.7 501.4,285.7 502.6,284.7 503.7,285.9 504.9,285.1 506.1,288.1 507.2,286.5 508.4,284.2 509.6,283.8 510.8,284.9 511.9,285.0 513.1,286.0 514.3,284.4 515.4,282.5 516.6,280.5 517.8,278.9 518.9,281.5 520.1,283.3 521.3,283.7 522.5,283.3 523.6,283.4 524.8,284.8 526.0,285.5 527.1,285.7 528.3,285.7 529.5,287.1 530.6,281.4 531.8,286.1 533.0,285.8 534.2,281.4 535.3,281.0 536.5,279.0 537.7,281.1 538.8,281.2 540.0,283.3 541.2,281.7 542.3,278.8 543.5,276.8 544.7,282.6 545.9,285.2 547.0,285.5 548.2,286.2 549.4,285.5 550.5,279.4 551.7,283.1 552.9,281.8 554.0,282.7 555.2,282.3 556.4,281.7 557.6,281.5 558.7,279.3 559.9,284.8 561.1,285.7 562.2,276.0 563.4,283.1 564.6,280.2 565.7,280.7 566.9,282.6 568.1,284.0 569.3,283.6 570.4,280.6 571.6,280.8 572.8,280.7 573.9,279.9 575.1,282.1 576.3,279.5 577.4,282.4 578.6,280.3 579.8,277.1 581.0,281.0 582.1,282.2 583.3,281.1 584.5,279.3 585.6,280.7 586.8,283.0 588.0,284.3 589.1,284.0 590.3,286.0 591.5,285.8 592.7,286.8 593.8,285.8 595.0,286.0 596.2,276.6 597.3,282.3 598.5,284.4 599.7,285.8 600.8,279.7 602.0,284.9 603.2,283.2 604.4,283.6 605.5,281.9 606.7,285.3 607.9,285.5 609.0,285.3 610.2,285.5 611.4,285.8 612.5,285.5 613.7,283.4 614.9,283.4 616.0,283.0 617.2,278.4 618.4,284.5 619.6,284.1 620.7,282.6 621.9,281.1 623.1,282.0 624.2,283.7 625.4,282.6 626.6,280.0 627.7,284.9 628.9,285.8 630.1,287.9 631.3,282.7 632.4,281.4 633.6,280.8 634.8,286.5 635.9,285.0 637.1,285.6 638.3,284.3 639.4,281.0 640.6,277.8 641.8,282.7 643.0,284.2 644.1,283.6 645.3,285.4 646.5,284.8 647.6,282.8 648.8,280.5 650.0,281.9 651.1,282.5 652.3,282.3 653.5,283.3 654.7,284.9 655.8,285.5 657.0,281.5 658.2,282.6 659.3,284.7 660.5,288.1 661.7,286.9 662.8,284.3 664.0,283.1 665.2,280.4 666.4,279.1 667.5,280.1 668.7,278.6 669.9,282.6 671.0,282.5 672.2,281.4 673.4,283.1 674.5,284.6 675.7,283.1 676.9,281.8 678.1,278.1 679.2,269.1 680.4,273.5 681.6,270.3 682.7,267.6 683.9,266.3 685.1,265.5 686.2,260.0 687.4,262.4 688.6,260.6 689.8,258.5 690.9,256.9 692.1,255.2 693.3,256.0 694.4,253.6 695.6,251.7 696.8,249.2 697.9,245.9 699.1,242.6 700.3,242.4 701.5,241.5 702.6,237.2 703.8,231.0 705.0,228.6 706.1,232.9 707.3,236.9 708.5,237.8 709.6,233.4 710.8,233.4 712.0,235.5 713.2,235.5 714.3,235.3 715.5,236.0 716.7,231.8 717.8,233.5 719.0,234.8 720.2,236.3 721.3,235.9 722.5,233.4 723.7,232.2 724.9,231.5 726.0,233.3 727.2,234.5 728.4,234.0 729.5,235.6 730.7,234.2 731.9,236.0 733.0,236.6 734.2,237.6 735.4,234.0 736.6,235.8 737.7,235.5 738.9,236.5 740.1,235.8 741.2,236.6 742.4,233.7 743.6,233.6 744.7,233.6 745.9,236.5 747.1,236.6 748.3,236.1 749.4,237.2 750.6,236.6 751.8,230.0 752.9,236.4 754.1,235.9 755.3,236.1 756.4,235.6 757.6,234.5 758.8,234.3 760.0,232.8 761.1,232.3 762.3,229.0 763.5,229.4 764.6,229.4 765.8,231.9 767.0,231.0 768.1,229.8 769.3,224.0 770.5,229.8 771.7,230.0 772.8,232.2 774.0,224.9 775.2,228.0 776.3,226.0 777.5,226.3 778.7,228.1 779.8,227.9 781.0,227.4 782.2,225.9 783.4,225.3 784.5,223.2 785.7,220.5 786.9,217.4 788.0,216.9 789.2,222.3 790.4,222.6 791.5,224.1 792.7,225.5 793.9,225.2 795.1,225.5 796.2,222.4 797.4,220.9 798.6,217.5 799.7,216.9 800.9,217.1 802.1,218.7 803.2,219.4 804.4,217.6 805.6,216.4 806.8,215.5 807.9,215.9 809.1,216.6 810.3,215.5 811.4,215.1 812.6,215.8 813.8,216.1 814.9,216.9 816.1,215.5 817.3,213.2 818.5,211.4 819.6,209.5 820.8,207.1 822.0,211.6 823.1,211.4 824.3,211.0 825.5,211.8 826.6,210.0 827.8,209.7 829.0,210.8 830.2,210.5 831.3,210.0 832.5,207.5 833.7,201.0 834.8,205.1 836.0,206.8 837.2,206.0 838.3,204.9 839.5,202.3 840.7,201.6 841.9,202.0 843.0,196.3 844.2,202.2 845.4,202.6 846.5,203.3 847.7,204.7 848.9,204.2 850.0,205.4 851.2,205.4 852.4,206.3 853.6,204.1 854.7,200.2 855.9,201.8 857.1,201.1 858.2,199.4 859.4,202.9 860.6,205.5 861.7,205.6 862.9,206.0 864.1,204.6 865.3,205.2 866.4,205.6 867.6,204.4 868.8,203.3 869.9,202.2 871.1,198.1 872.3,202.7 873.4,202.9 874.6,203.9 875.8,206.3 877.0,205.8 878.1,205.3 879.3,205.2 880.5,204.6 881.6,203.7 882.8,204.2 884.0,205.8 885.1,197.4 886.3,205.8 887.5,205.7 888.7,207.0 889.8,204.4 891.0,202.3 892.2,203.6 893.3,197.9 894.5,202.7 895.7,201.7 896.8,201.7 898.0,200.1 899.2,196.0 900.4,205.1" fill="none" stroke="#f4f060" stroke-width="1.3" stroke-linejoin="round"/>
<!-- plot frame -->
<path d="M247.5 451.5 V78.5 H900.5 V451.5 H247.5" fill="none" stroke="#e8f0e0" stroke-width="1.2"/>
<polygon points="248,79 261,79 248,86" fill="#b8b8b8"/>
<polygon points="900,79 887,79 900,86" fill="#b8b8b8"/>
<g font-family="Liberation Sans" font-size="12" fill="#c4c4c4"><text x="246" y="120.7" text-anchor="end">-50</text><text x="246" y="158.0" text-anchor="end">-60</text><text x="246" y="195.3" text-anchor="end">-70</text><text x="246" y="232.6" text-anchor="end">-80</text><text x="246" y="269.9" text-anchor="end">-90</text><text x="246" y="307.2" text-anchor="end">-100</text><text x="246" y="344.5" text-anchor="end">-110</text><text x="246" y="381.8" text-anchor="end">-120</text><text x="246" y="419.1" text-anchor="end">-130</text></g>
<!-- color bar -->
<line x1="658" y1="47.5" x2="833" y2="47.5" stroke="#a8a8a8" stroke-width="1"/>
<g stroke="#a8a8a8" stroke-width="1"><line x1="668.5" y1="47" x2="668.5" y2="51"/><line x1="723.5" y1="47" x2="723.5" y2="51"/><line x1="778.5" y1="47" x2="778.5" y2="51"/><line x1="832.5" y1="47" x2="832.5" y2="51"/></g>
<rect x="659" y="65" width="174" height="9" fill="url(#cbar)"/>
<g font-family="Liberation Mono" font-size="11" fill="#d0d0d0">
 <text x="659" y="61.5">0.1%</text><text x="715" y="61.5">1%</text><text x="770" y="61.5">10%</text><text x="825" y="61.5">100%</text>
</g>
<!-- status icons -->
<path d="M597.3 22.5 V32 L601.5 36.5" fill="none" stroke="#3aa8f4" stroke-width="2.2" stroke-linejoin="round"/>
<path d="M600 31 L606 25.5 L608.5 28.2 L613 28.2 L613 30.3 L608.3 30.3 L607.3 31.6 L607.3 33.2 L608.3 34.4 L613 34.4 L613 36.5 L608.5 36.5 L606 38.5 Z" fill="#2c9cf0" stroke="#58c0ff" stroke-width="0.6"/>
<rect x="619" y="27" width="4" height="11" fill="#b0b0b0"/>
<rect x="622.5" y="22.5" width="48.5" height="18" fill="#000" stroke="#b8b8b8" stroke-width="1.3"/>
<rect x="633" y="24" width="2" height="15" fill="#909090"/>
<g fill="#22aaf0"><rect x="637" y="26" width="6" height="11"/><rect x="644.5" y="26" width="6" height="11"/><rect x="652" y="26" width="6" height="11"/><rect x="659.5" y="26" width="7" height="11"/></g>
<!-- arrows -->
<g stroke="#d86a30" stroke-width="3" stroke-linecap="round" fill="#d86a30">
 <line x1="107" y1="323.8" x2="364" y2="230.6"/>
 <line x1="978" y1="324" x2="840" y2="233"/>
</g>
<polygon points="372,227 360,224 364,237" fill="#e06a30"/>
<polygon points="833,228.5 845,229 838,240" fill="#e06a30"/>
<!-- watermark box -->

</svg>
<svg width="1047" height="587" style="position:absolute;left:0;top:0" font-family="Liberation Sans"><defs><clipPath id="wmin"><rect x="847" y="557" width="67" height="23"/></clipPath><clipPath id="wmout"><path d="M0 0 H1047 V587 H0 Z M847 557 V580 H914 V557 Z" clip-rule="evenodd"/></clipPath></defs><text x="169.29999999999995" y="60.5" font-size="14.5" fill="#d8f4d8" text-anchor="start" textLength="38.00" lengthAdjust="spacingAndGlyphs" >RTSA</text><text x="170.5" y="87.7" font-size="13.8" fill="#e01c1c" text-anchor="start" textLength="31.60" lengthAdjust="spacingAndGlyphs" font-weight="bold">Hold</text><text x="169.10000000000002" y="148.5" font-size="13.5" fill="#e0e0e0" text-anchor="start" textLength="30.20" lengthAdjust="spacingAndGlyphs" >10.0</text><text x="170.10000000000002" y="168.2" font-size="15" fill="#e0e0e0" text-anchor="start" textLength="17.40" lengthAdjust="spacingAndGlyphs" >dB/</text><text x="169.10000000000002" y="196.2" font-size="13.5" fill="#e0e0e0" text-anchor="start" textLength="18.40" lengthAdjust="spacingAndGlyphs" >PA</text><text x="169.89999999999998" y="312" font-size="14.5" fill="#d0d0d0" text-anchor="start" textLength="39.20" lengthAdjust="spacing" ><tspan fill="#e8d890">1</tspan>234</text><text x="170" y="328.3" font-size="10.5" fill="#c8d040" text-anchor="start" font-weight="bold">W</text><text x="170" y="343" font-size="10.5" fill="#c8d040" text-anchor="start" font-weight="bold">P</text><text x="217.5" y="61.6" font-size="14.2" fill="#dedede" text-anchor="start" textLength="105.80" lengthAdjust="spacingAndGlyphs" >Ref -40.00 dBm</text><text x="365.5" y="61.6" font-size="14.2" fill="#dedede" text-anchor="start" textLength="76.80" lengthAdjust="spacingAndGlyphs" >#Atten 0 dB</text><text x="675.5" y="37.7" font-size="17" fill="#dcdcdc" text-anchor="start" textLength="236.80" lengthAdjust="spacingAndGlyphs" >Mon, 28 Mar 2016 4:15:23 PM</text><text x="218.29999999999995" y="471.7" font-size="14" fill="#e4e4e4" text-anchor="start" textLength="166.40" lengthAdjust="spacingAndGlyphs" >Center 2.420000000 GHz</text><text x="217.5" y="492.3" font-size="14" fill="#e4e4e4" text-anchor="start" textLength="114.20" lengthAdjust="spacingAndGlyphs" >Res BW 35.7 kHz</text><text x="492.29999999999995" y="492.5" font-size="14" fill="#e4e4e4" text-anchor="start" textLength="106.00" lengthAdjust="spacingAndGlyphs" xml:space="preserve">Persistence 0  s</text><text x="749.6999999999998" y="471.7" font-size="14" fill="#e4e4e4" text-anchor="start" textLength="142.00" lengthAdjust="spacingAndGlyphs" >Span 10.000000 MHz</text><text x="705.6999999999998" y="492.5" font-size="14" fill="#e4e4e4" text-anchor="start" textLength="186.00" lengthAdjust="spacingAndGlyphs" >Acq Time 20.0 ms (561 pts)</text><rect x="169.5" y="530.5" width="121" height="47.5" fill="url(#btn)"/><rect x="169.5" y="530.5" width="121" height="47.5" fill="url(#btnh)"/><rect x="169.5" y="530.5" width="121" height="47.5" fill="none" stroke="#d8d8d8" stroke-width="1"/><text x="206.5" y="549.4" font-size="14" fill="#e4e4f4" text-anchor="start" textLength="44.20" lengthAdjust="spacingAndGlyphs" >Center</text><text x="171.10000000000002" y="569.3" font-size="14" fill="#e4e4f4" text-anchor="start" textLength="116.40" lengthAdjust="spacingAndGlyphs" >2.420000000 GHz</text><rect x="293.5" y="530.5" width="121" height="47.5" fill="url(#btn)"/><rect x="293.5" y="530.5" width="121" height="47.5" fill="url(#btnh)"/><rect x="293.5" y="530.5" width="121" height="47.5" fill="none" stroke="#d8d8d8" stroke-width="1"/><text x="335.9000000000001" y="549.4" font-size="14" fill="#e4e4f4" text-anchor="start" textLength="32.80" lengthAdjust="spacingAndGlyphs" >Start</text><text x="293.70000000000005" y="569.3" font-size="14" fill="#e4e4f4" text-anchor="start" textLength="117.20" lengthAdjust="spacingAndGlyphs" >2.415000000 GHz</text><rect x="417.5" y="530.5" width="122" height="47.5" fill="url(#btn)"/><rect x="417.5" y="530.5" width="122" height="47.5" fill="url(#btnh)"/><rect x="417.5" y="530.5" width="122" height="47.5" fill="none" stroke="#d8d8d8" stroke-width="1"/><text x="461.0999999999999" y="549.4" font-size="14" fill="#e4e4f4" text-anchor="start" textLength="31.40" lengthAdjust="spacingAndGlyphs" >Stop</text><text x="419.9000000000001" y="569.3" font-size="14" fill="#e4e4f4" text-anchor="start" textLength="115.40" lengthAdjust="spacingAndGlyphs" >2.425000000 GHz</text><rect x="541.5" y="530.5" width="121" height="47.5" fill="url(#btn)"/><rect x="541.5" y="530.5" width="121" height="47.5" fill="url(#btnh)"/><rect x="541.5" y="530.5" width="121" height="47.5" fill="none" stroke="#d8d8d8" stroke-width="1"/><text x="574.6999999999998" y="549.4" font-size="14" fill="#e4e4f4" text-anchor="start" textLength="52.60" lengthAdjust="spacingAndGlyphs" >CF Step</text><text x="586.9000000000001" y="569.3" font-size="14" fill="#e4e4f4" text-anchor="start" textLength="29.20" lengthAdjust="spacingAndGlyphs" >Auto</text><rect x="666.5" y="530.5" width="121" height="47.5" fill="url(#btn)"/><rect x="666.5" y="530.5" width="121" height="47.5" fill="url(#btnh)"/><rect x="666.5" y="530.5" width="121" height="47.5" fill="none" stroke="#d8d8d8" stroke-width="1"/><text x="690.9000000000001" y="549.4" font-size="14" fill="#e4e4f4" text-anchor="start" textLength="69.40" lengthAdjust="spacingAndGlyphs" >Freq Span</text><text x="674.9000000000001" y="569.3" font-size="14" fill="#e4e4f4" text-anchor="start" textLength="102.20" lengthAdjust="spacingAndGlyphs" >10.000000 MHz</text><rect x="789.5" y="530.5" width="122" height="47.5" fill="url(#btn)"/><rect x="789.5" y="530.5" width="122" height="47.5" fill="url(#btnh)"/><rect x="789.5" y="530.5" width="122" height="47.5" fill="none" stroke="#d8d8d8" stroke-width="1"/><text x="817.5" y="560.1" font-size="14" fill="#e4e4f4" text-anchor="start" textLength="63.40" lengthAdjust="spacingAndGlyphs" >Full Span</text><text x="10" y="370.7" font-size="28" fill="#000" text-anchor="start" >Bluetooth</text><text x="984" y="325.2" font-size="28" fill="#000" text-anchor="start" >WiFi</text><rect x="847" y="557" width="67" height="23" fill="#ffffff" opacity="0.3"/><text x="863" y="577" font-size="19.2" fill="#c4dcbc" text-anchor="start" clip-path="url(#wmout)">www.cntronics.com</text><text x="863" y="577" font-size="19.2" fill="#2c4c30" text-anchor="start" clip-path="url(#wmin)">www.cntronics.com</text><path d="M984 328.5 q1.5 -1.5 3 0 t3 0 t3 0 t3 0 t3 0 t3 0 t3 0 t3 0 t3 0 t3 0 t3 0 t3 0 t3 0 t3 0 t3 0 t3 0 t3 0 t3 0 t3 0" fill="none" stroke="#e03030" stroke-width="0.9"/></svg>
</body></html>
